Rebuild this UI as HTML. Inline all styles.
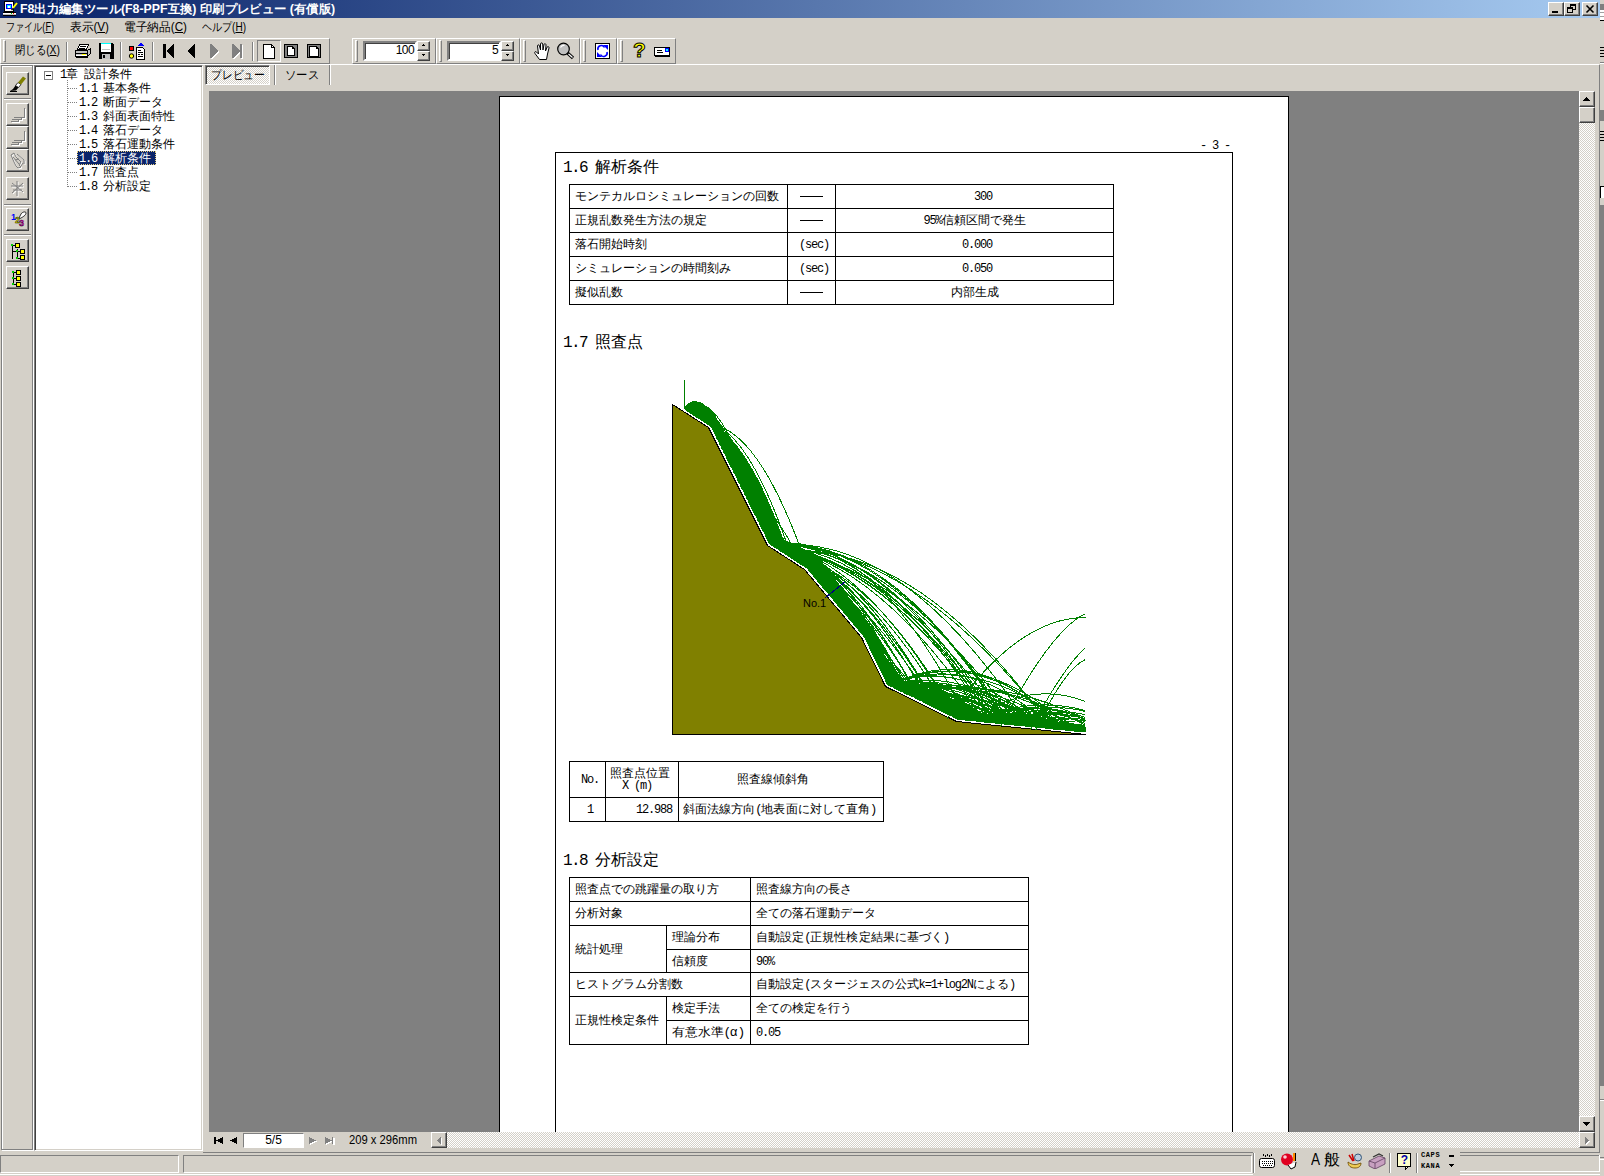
<!DOCTYPE html>
<html lang="ja">
<head>
<meta charset="utf-8">
<title>F8出力編集ツール 印刷プレビュー</title>
<style>
*{box-sizing:border-box;margin:0;padding:0}
html,body{width:1604px;height:1176px;overflow:hidden;background:#D4D0C8}
body{position:relative;font-family:"Liberation Sans",sans-serif;font-size:12px;color:#000;line-height:1}
.a{position:absolute;white-space:nowrap}
.f{transform-origin:0 0}
.ui{font-family:"Liberation Sans",sans-serif;font-size:12px;line-height:13px}
.tr{font-family:"Liberation Mono",monospace;font-size:12px;line-height:14px}
.doc{font-family:"Liberation Mono",monospace;font-size:12px;line-height:12px;color:#000}
.h{font-family:"Liberation Mono",monospace;font-size:16px;line-height:16px}
.q{letter-spacing:-1.2px}
.h .q{letter-spacing:-1.6px}
#title{left:0;top:0;width:1600px;height:18px;background:linear-gradient(90deg,#0A246A 0%,#0A246A 2%,#A6CAF0 100%)}
#title .t{color:#fff;font-weight:bold;font-size:12px;line-height:14px}
.cb{width:16px;height:14px;top:2px;background:#D4D0C8;border:1px solid;border-color:#fff #404040 #404040 #fff;box-shadow:inset -1px -1px 0 #808080}
.raised{border:1px solid;border-color:#fff #808080 #808080 #fff}
.sunken{border:1px solid;border-color:#808080 #fff #fff #808080}
.btn{background:#D4D0C8;border:1px solid;border-color:#fff #404040 #404040 #fff;box-shadow:inset -1px -1px 0 #808080}
.sep{width:2px;border-left:1px solid #808080;border-right:1px solid #fff}
.hsep{height:2px;border-top:1px solid #808080;border-bottom:1px solid #fff}
.grip{width:3px;border:1px solid;border-color:#fff #808080 #808080 #fff}
.dith{background-color:#EAE8E4;background-image:conic-gradient(#fff 25%,#D4D0C8 0 50%,#fff 0 75%,#D4D0C8 0);background-size:2px 2px}
#page{left:499px;top:96px;width:790px;height:1036px;background:#fff;border:1px solid #000;border-bottom:none;overflow:hidden}
.ln{background:#000}
</style>
</head>
<body>
<div id="title" class="a">
<svg class="a" style="left:3px;top:1px" width="15" height="16" viewBox="0 0 15 16" shape-rendering="crispEdges">
<rect x="1.500" y="0.500" width="9" height="10" fill="#fff" stroke="#000"/><rect x="3.500" y="3.500" width="5" height="4" fill="#0ff" stroke="#00f"/><rect x="5" y="5" width="2" height="2" fill="#fff"/>
<path d="M10 7 L14 2" stroke="#ff0" stroke-width="2" shape-rendering="auto"/><path d="M8.500 9 L10 7.500" stroke="#000" stroke-width="1.500" shape-rendering="auto"/>
<rect x="0" y="12" width="13" height="1" fill="#fff"/><rect x="0" y="13" width="13" height="1" fill="#c0c0c0"/><rect x="0" y="14" width="13" height="1" fill="#000"/><rect x="0" y="11" width="13" height="1" fill="#000"/><rect x="8" y="12" width="1" height="1" fill="#0c0"/><rect x="10" y="12" width="1" height="1" fill="#f00"/>
</svg>
<div id="t1" class="a f t" style="left:20px;top:2px;transform:scaleX(1.0294);">F8出力編集ツール(F8-PPF互換) 印刷プレビュー (有償版)</div>
<div class="a cb" style="left:1548px">
<svg class="a" style="left:0;top:0" width="14" height="12" viewBox="0 0 14 12" shape-rendering="crispEdges"><rect x="3" y="8" width="6" height="2" fill="#000"/></svg></div>
<div class="a cb" style="left:1564px">
<svg class="a" style="left:0;top:0" width="14" height="12" viewBox="0 0 14 12" shape-rendering="crispEdges"><path d="M5 1h6v6h-3v-1h2v-3h-4v1h-1zM2 4h6v6h-6zM3 6v3h4v-3z" fill="#000" fill-rule="evenodd"/></svg></div>
<div class="a cb" style="left:1582px">
<svg class="a" style="left:0;top:0" width="14" height="12" viewBox="0 0 14 12"><path d="M3.500 2.500l7 7M10.500 2.500l-7 7" stroke="#000" stroke-width="1.600"/></svg></div></div>
<div id="t2" class="a f ui" style="left:6px;top:21px;transform:scaleX(0.7578);">ファイル(<u>F</u>)</div>
<div id="t3" class="a f ui" style="left:70px;top:21px;transform:scaleX(0.9746);">表示(<u>V</u>)</div>
<div id="t4" class="a f ui" style="left:124px;top:21px;transform:scaleX(0.9741);">電子納品(<u>C</u>)</div>
<div id="t5" class="a f ui" style="left:202px;top:21px;transform:scaleX(0.8354);">ヘルプ(<u>H</u>)</div>
<div class="a" style="left:0;top:64px;width:1599px;height:1px;background:#fff"></div>
<div class="a raised" style="left:0px;top:38px;width:330px;height:26px"></div>
<div class="a raised" style="left:352px;top:38px;width:84px;height:26px"></div>
<div class="a raised" style="left:436px;top:38px;width:84px;height:26px"></div>
<div class="a raised" style="left:520px;top:38px;width:60px;height:26px"></div>
<div class="a raised" style="left:580px;top:38px;width:37px;height:26px"></div>
<div class="a raised" style="left:617px;top:38px;width:59px;height:26px"></div>
<div class="a grip" style="left:3px;top:40px;height:22px"></div>
<div class="a grip" style="left:355px;top:40px;height:22px"></div>
<div class="a grip" style="left:439px;top:40px;height:22px"></div>
<div class="a grip" style="left:523px;top:40px;height:22px"></div>
<div class="a grip" style="left:583px;top:40px;height:22px"></div>
<div class="a grip" style="left:620px;top:40px;height:22px"></div>
<div class="a sep" style="left:66px;top:42px;height:19px"></div>
<div class="a sep" style="left:120px;top:42px;height:19px"></div>
<div class="a sep" style="left:152px;top:42px;height:19px"></div>
<div class="a sep" style="left:252px;top:42px;height:19px"></div>
<div id="t6" class="a f ui" style="left:15px;top:44px;transform:scaleX(0.8651);">閉じる(<u>X</u>)</div>
<svg class="a" style="left:74px;top:43px" width="18" height="16" viewBox="0 0 18 16" shape-rendering="crispEdges">
<path d="M5.500 1.500h9l-2 5h-9z" fill="#fff" stroke="#000"/><path d="M6 3.500h6M5 5.500h6" stroke="#000"/>
<path d="M1.500 7.500h12l3 -2v5l-3 3h-12z" fill="#c0c0c0" stroke="#000"/><path d="M1.500 10.500h12M13.500 7.500v6" stroke="#000"/><rect x="8" y="11" width="4" height="1" fill="#ff0"/><path d="M2 14.500h12" stroke="#000" stroke-width="1"/><path d="M2 12.500h11" stroke="#fff"/>
</svg>
<svg class="a" style="left:99px;top:43px" width="16" height="16" viewBox="0 0 16 16" shape-rendering="crispEdges">
<rect x="0" y="0" width="15" height="16" fill="#000"/><rect x="2" y="1" width="10" height="8" fill="#fff"/><rect x="2" y="0" width="10" height="1" fill="#0ff"/><rect x="3" y="6" width="8" height="1" fill="#c0c0c0"/><rect x="3" y="11" width="8" height="5" fill="#c0c0c0"/><rect x="4" y="12" width="2" height="3" fill="#000"/><rect x="14" y="0" width="1" height="1" fill="#D4D0C8"/>
</svg>
<svg class="a" style="left:128px;top:42px" width="18" height="18" viewBox="0 0 18 18" shape-rendering="crispEdges">
<rect x="1.500" y="4.500" width="4" height="4" fill="#f00" stroke="#000"/><circle cx="3.500" cy="14" r="2.200" fill="#ff0" stroke="#000" shape-rendering="auto"/>
<path d="M11 3l2-2 2 2z" fill="#00f" stroke="#00f"/>
<path d="M8.500 5.500h6l2 2v9.500h-8z" fill="#fff" stroke="#000"/><path d="M10 8.500h3M10 10.500h5M10 12.500h2M13 12.500h2M10 14.500h5" stroke="#000"/>
</svg>
<svg class="a" style="left:162px;top:43px" width="84" height="16" viewBox="0 0 84 16" shape-rendering="crispEdges">
<rect x="1" y="1" width="3" height="14" fill="#000"/><path d="M12 1v14h-1l-7-7 7-7z" fill="#000"/>
<path d="M33 1v14h-1l-7-7 7-7z" fill="#000"/>
<path d="M49 2v14h1l7-7-7-7z" fill="#fff"/><path d="M48 1v14h1l7-7-7-7z" fill="#808080"/>
<path d="M71 2v14h1l7-7-7-7z" fill="#fff"/><rect x="79" y="2" width="2" height="14" fill="#fff"/><path d="M70 1v14h1l7-7-7-7z" fill="#808080"/><rect x="78" y="1" width="2" height="14" fill="#808080"/>
</svg>
<div class="a sunken" style="left:257px;top:40px;width:24px;height:22px"></div>
<svg class="a" style="left:263px;top:44px" width="60" height="15" viewBox="0 0 60 15" shape-rendering="crispEdges">
<path d="M0.500 0.500h8l3 3v10.500h-11z" fill="#fff" stroke="#000"/><path d="M8.500 0.500v3h3" fill="none" stroke="#000"/>
<rect x="21.500" y="0.500" width="13" height="13" fill="#808080" stroke="#000"/><path d="M24.500 2.500h5l2 2v7h-7z" fill="#fff" stroke="#000"/><path d="M29.500 2.500v2h2" fill="none" stroke="#000"/>
<rect x="44.500" y="0.500" width="13" height="13" fill="#808080" stroke="#000"/><path d="M46.500 2.500h7l2 2v8h-9z" fill="#fff" stroke="#000"/><path d="M53.500 2.500v2h2" fill="none" stroke="#000"/>
</svg>
<div class="a" style="left:363px;top:41px;width:54px;height:20px;background:#fff;border:2px solid;border-color:#808080 #fff #fff #808080;box-shadow:inset 1px 1px 0 #404040"></div>
<div class="a" style="left:363px;top:44px;width:51px;text-align:right;font-size:12px;line-height:13px;letter-spacing:-.6px">100</div>
<div class="a btn" style="left:417px;top:41px;width:13px;height:10px"></div>
<div class="a btn" style="left:417px;top:51px;width:13px;height:10px"></div>
<svg class="a" style="left:420px;top:44px" width="7" height="14" viewBox="0 0 7 14" shape-rendering="crispEdges"><path d="M3 0h1v1h1v1h-3v-1h1zM2 10h3v1h-1v1h-1v-1h-1z" fill="#000"/></svg>
<div class="a" style="left:447px;top:41px;width:54px;height:20px;background:#fff;border:2px solid;border-color:#808080 #fff #fff #808080;box-shadow:inset 1px 1px 0 #404040"></div>
<div class="a" style="left:447px;top:44px;width:51px;text-align:right;font-size:12px;line-height:13px;letter-spacing:-.6px">5</div>
<div class="a btn" style="left:501px;top:41px;width:13px;height:10px"></div>
<div class="a btn" style="left:501px;top:51px;width:13px;height:10px"></div>
<svg class="a" style="left:504px;top:44px" width="7" height="14" viewBox="0 0 7 14" shape-rendering="crispEdges"><path d="M3 0h1v1h1v1h-3v-1h1zM2 10h3v1h-1v1h-1v-1h-1z" fill="#000"/></svg>
<svg class="a" style="left:533px;top:42px" width="19" height="18" viewBox="0 0 19 18">
<path d="M6.500 17.500 L2 11.500 C1 10 2.500 9 3.500 10 L5.500 12 L4.500 4 C4.500 2.500 6.300 2.500 6.500 4 L7.500 8 L7.500 2 C7.700 0.500 9.500 0.500 9.700 2 L10 8 L11 2.500 C11.300 1.200 13 1.500 13 3 L12.500 9 L14.200 5 C14.800 4 16.200 4.500 16 6 L14.500 12 L13.500 17.500 Z" fill="#fff" stroke="#000" stroke-width="1"/>
</svg>
<svg class="a" style="left:556px;top:42px" width="20" height="18" viewBox="0 0 20 18">
<circle cx="7.500" cy="7" r="5.800" fill="#c0c0c0" stroke="#000" stroke-width="1.200"/><path d="M4.500 5.500a4 4 0 0 1 4-2" stroke="#fff" fill="none" stroke-width="1.200"/><path d="M11.500 11 L17 16" stroke="#000" stroke-width="3.200"/><path d="M12.500 12 L16.500 15.500" stroke="#fff" stroke-width="1.200"/>
</svg>
<svg class="a" style="left:595px;top:43px" width="15" height="16" viewBox="0 0 15 16">
<rect x="0.500" y="0.500" width="14" height="15" fill="#fff" stroke="#000" shape-rendering="crispEdges"/><path d="M8 2h5v5z" fill="#00f"/><path d="M2 9v5h5z" fill="#00f"/><path d="M3 7a3.500 3.500 0 0 1 6.500-2.500" stroke="#00f" fill="none" stroke-width="1.600"/><path d="M12 9a3.500 3.500 0 0 1-6.500 2.500" stroke="#00f" fill="none" stroke-width="1.600"/>
</svg>
<div class="a" style="left:632px;top:38px;width:15px;font:bold 21px/24px 'Liberation Sans',sans-serif;color:#ff0;-webkit-text-stroke:1px #000;text-align:center">?</div>
<svg class="a" style="left:654px;top:47px" width="17" height="10" viewBox="0 0 17 10" shape-rendering="crispEdges">
<rect x="0.500" y="0.500" width="15" height="8" fill="#fff" stroke="#000"/><rect x="1" y="9" width="15" height="1" fill="#000"/><path d="M3 3.500h5M3 5.500h6" stroke="#000"/><rect x="11.500" y="1.500" width="3" height="3" fill="#0ff" stroke="#00f"/>
</svg>
<div class="a" style="left:2px;top:66px;width:32px;height:1085px;border:1px solid #fff"></div>
<div class="a" style="left:1px;top:65px;width:32px;height:1085px;border:1px solid #808080"></div>
<div class="a btn" style="left:6px;top:72px;width:23px;height:23px"></div>
<div class="a hsep" style="left:4px;top:98px;width:27px"></div>
<div class="a btn" style="left:6px;top:103px;width:23px;height:23px"></div>
<div class="a btn" style="left:6px;top:126px;width:23px;height:23px"></div>
<div class="a btn" style="left:6px;top:149px;width:23px;height:23px"></div>
<div class="a btn" style="left:6px;top:177px;width:23px;height:23px"></div>
<div class="a hsep" style="left:4px;top:204px;width:27px"></div>
<div class="a btn" style="left:6px;top:208px;width:23px;height:23px"></div>
<div class="a hsep" style="left:4px;top:234px;width:27px"></div>
<div class="a btn" style="left:6px;top:239px;width:23px;height:23px"></div>
<div class="a btn" style="left:6px;top:266px;width:23px;height:23px"></div>
<svg class="a" style="left:9px;top:75px" width="18" height="17" viewBox="0 0 18 17">
<path d="M1 16 L4 14 L6.500 10.500 L9.500 12.500 L7 15.500 Z" fill="#000"/><path d="M6.500 10.500 L9 7.500 L12 9.500 L9.500 12.500Z" fill="#fff" stroke="#000" stroke-width=".8"/><path d="M9 7.500 L14 1.500 L17 3.500 L12 9.500Z" fill="#808000"/><path d="M1 16.500h7" stroke="#000"/>
</svg>
<svg class="a" style="left:9px;top:107px" width="18" height="17" viewBox="0 0 18 17" shape-rendering="crispEdges"><path d="M15.500 1v9h-3.500v2h-3v2h-7" fill="none" stroke="#fff" transform="translate(1,1)"/><path d="M15.500 1v9h-3.500v2h-3v2h-7M12 10.500h-7M9 12.500h-6" fill="none" stroke="#808080"/></svg>
<svg class="a" style="left:9px;top:130px" width="18" height="17" viewBox="0 0 18 17" shape-rendering="crispEdges"><path d="M15.500 1v9h-3.500v2h-3v2h-7" fill="none" stroke="#fff" transform="translate(1,1)"/><path d="M15.500 1v9h-3.500v2h-3v2h-7M12 10.500h-7M9 12.500h-6" fill="none" stroke="#808080"/></svg>
<svg class="a" style="left:9px;top:152px" width="18" height="18" viewBox="0 0 18 18"><g fill="none" stroke="#fff" transform="translate(1,1)"><path d="M2 3l3-2 2 4 5 5-2 3 2 2-3 1-2-2-2-4zM8 2l7 6v4"/></g><g fill="none" stroke="#808080"><path d="M2 3l3-2 2 4 5 5-2 3 2 2-3 1-2-2-2-4zM8 2l7 6v4M4 5l6 7M6 8l4-1M12 14l2-3"/></g></svg>
<svg class="a" style="left:9px;top:180px" width="18" height="18" viewBox="0 0 18 18"><g fill="none" stroke="#fff" transform="translate(1,1)"><path d="M8 1v15M2 6h12M3 3l11 9M14 3l-11 10M4 10h9"/></g><g fill="none" stroke="#808080"><path d="M8 1v15M2 6h12M3 3l11 9M14 3l-11 10M4 10h9"/></g></svg>
<div class="a" style="left:11px;top:212px;font:bold 9px/10px 'Liberation Sans',sans-serif;color:#00f">1</div>
<div class="a" style="left:15px;top:215px;font:bold 9px/10px 'Liberation Sans',sans-serif;color:#ff0;-webkit-text-stroke:.4px #000">2</div>
<div class="a" style="left:19px;top:218px;font:bold 9px/10px 'Liberation Sans',sans-serif;color:#f0c;-webkit-text-stroke:.4px #000">3</div>
<svg class="a" style="left:18px;top:211px" width="9" height="8" viewBox="0 0 9 8"><path d="M1 7 L3 3 C4 1 8 0 8 2 C8 4 5 6 2 7.500Z" fill="#fff" stroke="#000" stroke-width=".8"/></svg>
<svg class="a" style="left:10px;top:243px" width="16" height="17" viewBox="0 0 16 17" shape-rendering="crispEdges">
<path d="M2.500 2v14M2.500 2.500h3M7.500 6v10M7.500 8.500h3M7.500 15.500h3M2.500 8.500h5" stroke="#000" fill="none"/><rect x="5.500" y="0.500" width="4" height="4" fill="#ff0" stroke="#000"/><rect x="10.500" y="6.500" width="4" height="4" fill="#ff0" stroke="#000"/><rect x="10.500" y="12.500" width="4" height="4" fill="#ff0" stroke="#000"/><rect x="1" y="1" width="2" height="2" fill="#0c0"/><rect x="6" y="7" width="2" height="2" fill="#0c0"/><rect x="6" y="14" width="2" height="2" fill="#0c0"/>
</svg>
<svg class="a" style="left:10px;top:269px" width="16" height="18" viewBox="0 0 16 18" shape-rendering="crispEdges">
<path d="M3.500 2v14M3.500 3.500h3M3.500 9.500h3M3.500 15.500h3" stroke="#000" fill="none"/><rect x="6.500" y="1.500" width="4" height="4" fill="#ff0" stroke="#000"/><rect x="6.500" y="7.500" width="4" height="4" fill="#ff0" stroke="#000"/><rect x="6.500" y="13.500" width="4" height="4" fill="#ff0" stroke="#000"/><rect x="2" y="2" width="2" height="2" fill="#0c0"/><rect x="2" y="8" width="2" height="2" fill="#0c0"/><rect x="2" y="14" width="2" height="2" fill="#0c0"/>
</svg>
<div class="a" style="left:34px;top:65px;width:169px;height:1086px;background:#fff;border:1px solid;border-color:#808080 #fff #fff #808080;box-shadow:inset 1px 1px 0 #404040,inset -1px -1px 0 #D4D0C8"></div>
<svg class="a" style="left:44px;top:71px" width="9" height="9" viewBox="0 0 9 9" shape-rendering="crispEdges"><rect x="0.500" y="0.500" width="8" height="8" fill="#fff" stroke="#808080"/><rect x="2" y="4" width="5" height="1" fill="#000"/></svg>
<div class="a" style="left:67px;top:80px;width:1px;height:107px;background:repeating-linear-gradient(180deg,#808080 0 1px,transparent 1px 2px)"></div>
<div class="a tr" style="left:60px;top:68px;"><span class="q">1</span>章<span class="q"> </span>設計条件</div>
<div class="a" style="left:68px;top:88px;width:9px;height:1px;background:repeating-linear-gradient(90deg,#808080 0 1px,transparent 1px 2px)"></div>
<div class="a tr" style="left:79px;top:82px;"><span class="q">1.1 </span>基本条件</div>
<div class="a" style="left:68px;top:102px;width:9px;height:1px;background:repeating-linear-gradient(90deg,#808080 0 1px,transparent 1px 2px)"></div>
<div class="a tr" style="left:79px;top:96px;"><span class="q">1.2 </span>断面データ</div>
<div class="a" style="left:68px;top:116px;width:9px;height:1px;background:repeating-linear-gradient(90deg,#808080 0 1px,transparent 1px 2px)"></div>
<div class="a tr" style="left:79px;top:110px;"><span class="q">1.3 </span>斜面表面特性</div>
<div class="a" style="left:68px;top:130px;width:9px;height:1px;background:repeating-linear-gradient(90deg,#808080 0 1px,transparent 1px 2px)"></div>
<div class="a tr" style="left:79px;top:124px;"><span class="q">1.4 </span>落石データ</div>
<div class="a" style="left:68px;top:144px;width:9px;height:1px;background:repeating-linear-gradient(90deg,#808080 0 1px,transparent 1px 2px)"></div>
<div class="a tr" style="left:79px;top:138px;"><span class="q">1.5 </span>落石運動条件</div>
<div class="a" style="left:68px;top:158px;width:9px;height:1px;background:repeating-linear-gradient(90deg,#808080 0 1px,transparent 1px 2px)"></div>
<div class="a" style="left:77px;top:151px;width:79px;height:14px;background:#0A246A;outline:1px dotted #e8d080;outline-offset:-1px"></div>
<div class="a tr" style="left:79px;top:152px;color:#fff;"><span class="q">1.6 </span>解析条件</div>
<div class="a" style="left:68px;top:172px;width:9px;height:1px;background:repeating-linear-gradient(90deg,#808080 0 1px,transparent 1px 2px)"></div>
<div class="a tr" style="left:79px;top:166px;"><span class="q">1.7 </span>照査点</div>
<div class="a" style="left:68px;top:186px;width:9px;height:1px;background:repeating-linear-gradient(90deg,#808080 0 1px,transparent 1px 2px)"></div>
<div class="a tr" style="left:79px;top:180px;"><span class="q">1.8 </span>分析設定</div>
<div class="a" style="left:1599px;top:65px;width:1px;height:1088px;background:#808080"></div>
<div class="a" style="left:203px;top:1152px;width:1397px;height:1px;background:#808080"></div>
<div class="a dith sunken" style="left:205px;top:65px;width:65px;height:20px;box-shadow:inset 1px 1px 0 #404040"></div>
<div id="t16" class="a f ui" style="left:211px;top:69px;transform:scaleX(0.9000);">プレビュー</div>
<div class="a sep" style="left:274px;top:65px;height:20px"></div>
<div id="t17" class="a f ui" style="left:285px;top:69px;transform:scaleX(0.9444);">ソース</div>
<div class="a sep" style="left:329px;top:65px;height:20px"></div>
<div class="a" style="left:209px;top:91px;width:1370px;height:1041px;background:#808080"></div>
<div class="a dith" style="left:1579px;top:91px;width:16px;height:1041px"></div>
<div class="a btn" style="left:1579px;top:91px;width:16px;height:16px"></div>
<svg class="a" style="left:1583px;top:97px" width="7" height="4" shape-rendering="crispEdges"><path d="M3 0h1v1h1v1h1v1h1v1h-7v-1h1v-1h1v-1h1z" fill="#000"/></svg>
<div class="a btn" style="left:1579px;top:107px;width:16px;height:16px"></div>
<div class="a btn" style="left:1579px;top:1116px;width:16px;height:16px"></div>
<svg class="a" style="left:1583px;top:1122px" width="7" height="4" shape-rendering="crispEdges"><path d="M0 0h7v1h-1v1h-1v1h-1v1h-1v-1h-1v-1h-1v-1h-1z" fill="#000"/></svg>
<div class="a dith" style="left:431px;top:1132px;width:1164px;height:16px"></div>
<div class="a btn" style="left:431px;top:1132px;width:16px;height:16px"></div>
<svg class="a" style="left:437px;top:1137px" width="5" height="8" shape-rendering="crispEdges"><path d="M3 0h1v7h-1v-1h-1v-1h-1v-1h-1v-1h1v-1h1v-1h1z" fill="#fff" transform="translate(1,1)"/><path d="M3 0h1v7h-1v-1h-1v-1h-1v-1h-1v-1h1v-1h1v-1h1z" fill="#808080"/></svg>
<div class="a btn" style="left:1579px;top:1132px;width:16px;height:16px"></div>
<svg class="a" style="left:1585px;top:1137px" width="5" height="8" shape-rendering="crispEdges"><path d="M0 0h1v1h1v1h1v1h1v1h-1v1h-1v1h-1v1h-1z" fill="#fff" transform="translate(1,1)"/><path d="M0 0h1v1h1v1h1v1h1v1h-1v1h-1v1h-1v1h-1z" fill="#808080"/></svg>
<svg class="a" style="left:213px;top:1136px" width="125" height="10" viewBox="213 1136 125 10" shape-rendering="crispEdges">
<rect x="214" y="1137" width="2" height="7" fill="#000"/><path d="M223 1137v7l-7-3.500z" fill="#000"/><path d="M237 1137v7l-7-3.500z" fill="#000"/>
<path d="M310 1138v7l7-3.500z" fill="#fff"/><path d="M309 1137v7l7-3.500z" fill="#808080"/>
<path d="M326 1138v7l7-3.500z" fill="#fff"/><rect x="333" y="1138" width="2" height="7" fill="#fff"/><path d="M325 1137v7l7-3.500z" fill="#808080"/><rect x="332" y="1137" width="1" height="7" fill="#808080"/>
</svg>
<div class="a" style="left:243px;top:1133px;width:61px;height:15px;background:#fff;border:1px solid;border-color:#808080 #fff #fff #808080"></div>
<div class="a" style="left:243px;top:1134px;width:61px;text-align:center;font-size:12px;line-height:12px">5/5</div>
<div id="t18" class="a f ui" style="left:349px;top:1134px;font-size:12px;line-height:12px;transform:scaleX(0.9353);">209 x 296mm</div>
<div id="page" class="a">
<div class="a ln" style="left:55px;top:55px;width:678px;height:1px"></div>
<div class="a ln" style="left:55px;top:55px;width:1px;height:1000px"></div>
<div class="a ln" style="left:732px;top:55px;width:1px;height:1000px"></div>
<div class="a doc" style="left:700px;top:43px;"><span class="q">- 3 -</span></div>
<div class="a h" style="left:63px;top:63px;"><span class="q">1.6 </span>解析条件</div>
<div class="a ln" style="left:69px;top:87px;width:545px;height:1px"></div>
<div class="a ln" style="left:69px;top:111px;width:545px;height:1px"></div>
<div class="a ln" style="left:69px;top:135px;width:545px;height:1px"></div>
<div class="a ln" style="left:69px;top:159px;width:545px;height:1px"></div>
<div class="a ln" style="left:69px;top:183px;width:545px;height:1px"></div>
<div class="a ln" style="left:69px;top:207px;width:545px;height:1px"></div>
<div class="a ln" style="left:69px;top:87px;width:1px;height:121px"></div>
<div class="a ln" style="left:287px;top:87px;width:1px;height:121px"></div>
<div class="a ln" style="left:335px;top:87px;width:1px;height:121px"></div>
<div class="a ln" style="left:613px;top:87px;width:1px;height:121px"></div>
<div class="a doc" style="left:75px;top:94px;">モンテカルロシミュレーションの回数</div>
<div class="a ln" style="left:300px;top:99px;width:23px;height:1px"></div>
<div class="a doc" style="left:288px;top:93px;width:47px;text-align:center;color:transparent">――</div>
<div class="a doc" style="left:336px;top:94px;width:156px;text-align:right"><span class="q">300</span></div>
<div class="a doc" style="left:75px;top:118px;">正規乱数発生方法の規定</div>
<div class="a ln" style="left:300px;top:123px;width:23px;height:1px"></div>
<div class="a doc" style="left:288px;top:117px;width:47px;text-align:center;color:transparent">――</div>
<div class="a doc" style="left:336px;top:118px;width:277px;text-align:center"><span class="q">95%</span>信頼区間で発生</div>
<div class="a doc" style="left:75px;top:142px;">落石開始時刻</div>
<div class="a doc" style="left:299px;top:142px;"><span class="q">(sec)</span></div>
<div class="a doc" style="left:336px;top:142px;width:156px;text-align:right"><span class="q">0.000</span></div>
<div class="a doc" style="left:75px;top:166px;">シミュレーションの時間刻み</div>
<div class="a doc" style="left:299px;top:166px;"><span class="q">(sec)</span></div>
<div class="a doc" style="left:336px;top:166px;width:156px;text-align:right"><span class="q">0.050</span></div>
<div class="a doc" style="left:75px;top:190px;">擬似乱数</div>
<div class="a ln" style="left:300px;top:195px;width:23px;height:1px"></div>
<div class="a doc" style="left:288px;top:189px;width:47px;text-align:center;color:transparent">――</div>
<div class="a doc" style="left:336px;top:190px;width:277px;text-align:center">内部生成</div>
<div class="a h" style="left:63px;top:238px;"><span class="q">1.7 </span>照査点</div>
<svg class="a" style="left:160px;top:278px" width="430" height="365" viewBox="660 375 430 365" shape-rendering="crispEdges"><path d="M672.5 404.5 L708.5 427.5 L767.5 545.5 L804.5 569.5 L861.5 637.5 L885.5 686.5 L956.5 721.5 L1085.5 734.5 L1085.5 734.5 L672.5 734.5Z" fill="#808000" stroke="#000" stroke-width="1" stroke-linejoin="bevel"/><path d="M684.5 380V408" stroke="#008000" fill="none"/><path d="M684.5 408.5 L710.5 425.7 L769.5 543.7 L806.2 567.5 L863.7 636.1 L887.4 684.6 L957.2 719 L1085.8 731.9 L1086.1 728.5 L959 712.7 L894.5 677.5 L873.3 629.8 L817.2 555.1 L777.5 536.5 L716.2 420.6 L716 414 L709 408 L702 404 L696 402.5 L690 403 L686 405.5Z" fill="#008000"/><path transform="translate(.5,.5)" d="M684 408q4-3 7 5 1 0 2 1l1 1 1 0 1 1 1 0 0 1 1 0 0 1 1 0 1 0 0 1 1 0 1 1 1 0 0 1 1 0 1 0 0 1 1 0 0 1 1 0 1 0 0 1 1 0 1 1 1 0q0 1 1 3l1 2 0 1 1 0 0 1 1 2 1 1 0 1 1 1 0 1 1 1 0 1 1 1 0 2 1 1 1 1 0 1 1 1 0 1 1 1 0 1 1 1 0 1 1 1 0 1 1 1 0 1 1 1 0 1 1 1 0 1 1 1 0 2 1 1 0 1 1 1 1 1 0 1 1 1 0 1 1 1 0 1 1 1 0 1q1 1 1 2l1 2 1 2 0 1 1 1 1 2 1 1 0 2 1 1 0 1 1 1 1 1 0 1 1 1 0 1 1 1 0 2 1 1 1 1 0 1 1 2 0 1 1 1 1 1 1 2 0 1 1 1 0 2 1 1 1 1 0 1 1 1 0 2 1 1 0 1 1 1 0 1 1 1 0 1 1 1 1 1 0 1 1 1 0 1 1 1 0 1 1 2 0 1 1 1 1 2 0 1 1 1 1 1q0 1 1 3l1 1M684 408q5 1 9 6 2 1 3 2l1 1 1 0 1 1 1 0q2 1 5 3 1 1 3 2l0 1q25 13 49 94 7 12 14 26 92 10 184 174 65-9 130 11M684 408q3 0 6 4 2 1 4 3 1 0 3 1l1 1 1 1 1 0 1 1 2 1 0 1 2 1 1 0q2 1 4 3 12 7 24 47 18 24 37 72 113-7 227 179 43-15 87-5M684 408q6-7 11 7 6 2 12 8 23 10 46 86 9 16 19 36 106 14 212 176M684 408q5-4 10 7 5 1 9 5l1 1 1 0 0 1 1 1 1 0 1 1 1 0q21 12 43 83 7 14 15 30l2 6 1 0q66 24 132 148 31 8 61 28 32-3 63 7 30-6 59 1M684 408l1 1 1 0 0 1 1 0 1 1 1 0 0 1 1 0 1 1 1 0 0 1 1 0 1 0 0 1 1 0 0 1 1 0 1 0 0 1 1 0 1 1 1 0 0 1 1 0 1 0 0 1 1 0 0 1 1 0 1 0 0 1 1 0 0 1 1 0 1 0 0 1 1 0 0 1 1 0 1 0q1 1 2 4l0 2 1 1 1 1 0 2 1 1 0 1 1 1 1 1 0 2 1 1q1 1 2 3l0 1 1 1q1 2 2 6 2 2 3 5 2 3 4 8l1 2q2 3 4 7 5 7 11 23 5 8 10 21l2 3 1 3 2 2q1 2 2 4l1 2q1 2 2 6 2 2 3 5l1 0 1 1 1 0 0 1 1 0 1 0 0 1 1 0 0 1 1 0 1 0 0 1 1 0 0 1 1 0 1 0 0 1 1 0 0 1 1 0 1 0 0 1M684 408q5 0 10 7 3 1 6 4l2 1 1 0 1 1 1 0 0 1 1 1 1 0 2 1 1 1 1 0q3 2 6 12l0 2q1 1 2 3 3 4 5 10l1 2 1 2 1 2 1 2 1 2 1 1q1 2 1 4l1 1q4 5 8 16 5 7 9 18 8 11 16 32 4 5 7 11 7 0 14 9 2 1 4 3l1 0 1 1 1 0 0 1 1 0 1 0 0 1 1 0 0 1 1 0 1 0 0 1 1 0 0 1 1 0 1 0 0 1 1 0 0 1 1 0 1 0 0 1 1 0 0 1 1 0 1 0 0 1 1 1 1 1 1 1 0 1 1 0 0 1 1 0 0 1 1 0 0 1 1 1 1 1 0 1 1 0 0 1 1 0 0 1 1 0 0 1 1 2 1 0 1 1 0 1 1 0 0 1 1 1 1 1 1 2 1 0 0 1q2 1 3 3l1 1 0 1 1 0 0 1 1 0 0 1 1 1 1 1 1 1 1 1 0 1 1 1 1 0 0 1 1 1 1 1 1 2 1 0 0 1 1 0 0 1 1 0 0 1 0 1 1 0 1 1 0 1 1 0 0 1 1 1 1 0 0 1 1 1 1 1 1 1 0 1 1 0 0 1 1 1 1 1 0 1 1 1 1 0 0 1 1 1q1 0 2 2l1 2 1 1 1 1 1 1q2 2 4 7l0 2q1 1 2 3l1 2 0 1 1 1 1 2 1 2 1 2 0 1M684 408q2 1 4 3l1 0 0 1 1 0 1 1 1 0 1 1 1 0 0 1 1 0 0 1 1 0 1 0 0 1 1 0 1 1 1 0 0 1 1 0 1 1 1 0 0 1 1 0 1 0 0 1 1 0 0 1 1 0 1 0 0 1 1 0 1 1 1 0q1 1 3 7 1 1 1 2l1 2q1 2 2 4l1 2 1 1q2 4 5 11l1 2 1 2q1 1 1 3l1 2 1 1 1 2q1 1 2 3l1 2q0 1 1 3 2 4 4 8 2 3 4 7 1 2 2 4l1 3 1 2 1 2 1 2q1 2 2 5l1 2 1 2q2 2 3 5 1 2 2 4l1 2 1 2 1 2q2 3 3 6 3 5 6 12 3 0 6 3 4 1 8 6 2 0 4 2l1 1 1 0 0 1 1 0 1 1 1 0 0 1 1 0 1 0 0 1 1 0 0 1 1 0 1 0 0 1 1 0 0 1 1 0 1 0 0 1 1 0 0 1 1 0 1 0 0 1 1 0 0 1 1 0 1 0 0 1 1 0 0 1 1 1 0 1 1 0 0 1 1 0 0 1 1 0 0 1 1 1M684 408q15-13 29 22 4 6 7 14l2 3 1 3 1 3 2 2q2 4 4 9l1 3 2 2 0 2q9 8 18 34 1 3 2 5l2 3 1 3 1 2 2 3 1 2 1 3 1 2q5 6 10 17 6 1 12 8l1 0 1 1 1 1 1 0 1 1 1 0 0 1 1 0 1 1 1 0 0 1 1 0 1 0 0 1 1 0 0 1 1 0 1 0 0 1 1 0 0 1 1 0 1 0 0 1 1 0 0 1 1 0 1 0 0 1 1 0 0 1 1 0 1 0 0 1 1 1 0 1 1 0 1 1 0 1 1 0 0 1 1 0 0 1 1 1 1 1 0 1 1 0 0 1 1 0 0 1 1 0 0 1 1 1 1 1q2 2 3 4l1 1 1 1 1 1 1 1 1 1 0 1 1 1q1 1 2 2 3 2 5 7l1 1 1 1 1 0 0 1 1 1q1 1 1 2l1 1 1 1 1 1 1 0 0 1 1 1 1 1 0 1 1 0 0 1q1 1 2 2l1 1 1 1 1 2 2 2q1 1 3 3l0 1q1 1 3 2l0 1q2 2 3 4 7 6 14 26l1 3 1 3 2 3q4 6 8 15 37 7 74 34 31-4 61 6 12 0 23 3 9 0 18 1 10-2 20-2M684 408q5-1 9 6 2 1 4 3l2 1 1 1 1 0 1 1 1 0 0 1 1 0 1 1 2 1 1 0 1 1 1 1 1 0q8 5 16 32 3 7 7 15 5 8 9 19 3 4 5 9 5 8 9 18l2 4 2 4q3 5 6 11 1 3 3 7 14 0 28 18 47 12 93 124 23 7 46 22 14 4 28 11 23-1 46 5 18-1 37 4 14-1 29 3 4-1 8-1M684 408q23-12 46 56 3 5 5 9 15 23 29 59l3 5q2 3 4 7 2 1 4 3l1 0 0 1 1 0 1 1 1 0 0 1 1 0 1 0 0 1 1 0 0 1 1 0 1 0 0 1 1 0 0 1 1 0 1 0 0 1 1 0 1 1 1 0 0 1 1 0 1 0 0 1 1 0 0 1 1 0 1 0 0 1 1 0 0 1 1 0 1 0 0 1 1 0 0 1 1 0 1 0 0 1 1 0 0 1 1 0 1 0 0 1 1 0 0 1 1 0 1 1 1 1 0 1 1 0 0 1 1 0 1 1 0 1M684 408l1 1 1 0 0 1 1 0 1 1 1 0 1 1 1 1 1 0 0 1 1 0 1 0 0 1 1 0 1 1 1 0 0 1 1 0 1 1 1 0 0 1 1 0 1 1 1 0 0 1 1 0 1 1 1 0 1 1 1 0 0 1 1 0 1 1 1 0q2 1 4 8 1 3 3 6 2 4 4 9 5 7 9 18 2 4 4 9l2 3 1 3q8 11 16 30 6 11 12 24 2 4 5 9 6 3 12 8 2 1 4 3l1 0 0 1 1 0 1 0 0 1 1 0 1 1 1 0 0 1 1 0 1 0 0 1 1 0 0 1 1 0 1 0 0 1 1 0 0 1 1 0 1 0 0 1 1 0 0 1 1 0 1 0 0 1 1 0 0 1 1 0 1 1 1 1 1 1 1 1 0 1 1 0 0 1 1 1 1 1 0 1 1 0 1 2 1 1 1 0 0 1 1 1 1 1 0 1 1 0 1 1 0 1 1 1 1 1 1 1 1 2M684 408q9-9 18 12 4 2 8 5 22 12 44 87l2 5q7 11 14 27 2 1 3 2l1 0 1 1 1 0 0 1 1 0 1 0 0 1 1 0 0 1 1 0 1 0 0 1 1 0 0 1 1 0 1 0 0 1 1 0 0 1 1 0 1 0 0 1 1 0 0 1 1 0 1 0 0 1 1 0 1 1 1 0 0 1 1 0 1 0 0 1 1 0 0 1 1 0 1 1 1 0 0 1 1 0 1 0 0 1 1 0 0 1 1 0 1 0 0 1 1 0 0 1 1 0M684 408q8-10 16 11 27 4 54 93 9 15 19 33 81 31 163 163 74-5 149 23M684 408q11-3 22 15 37 15 74 127 39-2 77 78l3 3q20 23 41 60 29 8 59 28 20-1 40 4 14 0 29 3 8 0 16 1 5 1 9 1 4 0 8 1 5 0 10 1M684 408q13-8 25 16 34 15 69 125 113 10 227 174 40-11 80-2M684 408q4 0 7 5l2 1q1 0 2 1l1 1 1 1 1 0 1 1 1 0 0 1 1 0 2 1 2 2 1 1 1 0 1 1 1 0 1 1 1 0q15 9 29 60 4 6 7 13 6 10 12 23l2 5q4 8 8 17l1 0q8 3 17 11 1 1 3 3 2 0 3 1l0 1 1 0 1 0 0 1 1 0 0 1 1 0 1 0 0 1 1 0 0 1 1 0 1 0 0 1 1 0 0 1 1 0 1 0 0 1 1 0 0 1 1 0 1 0 0 1 1 0 0 1 1 1 1 1 0 1 1 0 0 1 1 1 1 1 1 1 1 2 1 0 1 2 1 1 1 1 1 1 0 1 1 1 1 1 1 1 1 1 1 1 1 1 0 1 1 1 1 1 1 1 0 1q1 0 2 2 1 1 2 2l1 1 1 1 0 1 1 1 1 1 1 1 1 1 1 1 1 1 1 2q3 2 5 6 2 2 4 4 2 2 4 5l1 1q3 3 5 6l1 2 1 1q12 14 24 49l1 0q76-29 153 43 22-5 44-1M684 408q8-3 15 10 4 2 8 5l1 0 1 1q20 11 40 77l2 5q2 3 4 7l2 5 2 4q6 10 12 22 4 2 9 6l1 0 0 1 1 0 0 1 1 0 1 0 0 1 1 0 0 1 1 0 1 0 0 1 1 0 1 1 1 0 0 1 1 0 1 1 1 0 0 1 1 0 1 1 1 0 0 1 1 0 1 0 0 1 1 0 0 1 1 0 1 0 0 1 1 0 0 1 1 0 1 0 0 1 1 0 0 1 1 0 1 0 0 1 1 1 1 1 0 1 1 0 0 1 1 1 1 1 1 1 1 1 1 1 0 1q1 1 2 2l1 0 0 1q1 1 2 2l1 1 0 1 1 1 1 1q1 1 3 3 1 2 3 4l1 1 1 1 1 2M684 408q2-1 4 3l2 1 1 1 1 1 1 0 1 0 0 1 1 0 0 1 1 0 1 0 0 1 1 0 0 1 1 0 1 0 0 1 1 0 1 1 1 0 0 1 1 0 1 0 0 1 1 0 0 1 1 0 1 0 0 1 1 0 0 1 1 0 1 0q1 1 2 6 3 3 5 8l1 2q4 6 8 17l1 3 2 2q2 5 5 11l2 3q4 7 8 17 2 4 5 9 3 5 6 12l1 4q4 6 7 13 2 3 3 6 2 3 3 6 2 1 4 2l2 1 0 1 1 0 1 0 0 1 1 0 0 1 1 0 1 0 0 1 1 0 0 1 1 0 1 0 0 1 1 0 0 1 1 0 1 0 0 1 1 0 1 1 1 0 0 1 1 0 1 1 1 0 0 1 1 0 1 0 0 1 1 0 0 1 1 0 1 0 0 1 1 0M684 408q11-2 22 14 36 16 72 127 14 6 28 18 18 10 36 42 2 3 5 6l2 2q2 3 4 5l2 3q2 3 5 5 2 3 4 6 19 21 38 55M684 408q4 1 8 6l1 0 1 1 1 0 1 1 1 0 1 1 1 1 1 0q1 1 3 2l1 1 1 1 2 1 1 1 1 0q7 3 13 25l2 2 1 3 1 2 2 3q2 4 4 8l1 3 1 3 2 2q10 15 21 42 10 13 21 32l2 1 1 1 1 0 0 1 1 0 1 0 0 1 1 0 0 1 1 0 1 0 0 1 1 0 0 1 1 0 1 0 0 1 1 0 1 0 0 1 1 0 0 1 1 0 1 0 0 1 1 0 0 1 1 0 1 0 0 1 1 0 0 1 1 0 1 0 0 1 1 0 0 1 1 0 1 0 0 1 1 0 0 1 1 0 1 0 0 1 1 1 1 1 1 1 1 1 0 1 1 1 1 1 2 2 0 1 1 0 1 2 1 0 0 1 2 2 0 1q2 1 4 4l1 1 1 1 1 2q1 1 3 3l1 1 0 1 1 1 1 1 1 1q1 2 3 3l0 1q2 1 3 3M684 408q8-10 16 11 5 2 9 6 31 17 62 119 38 8 76 71 27 29 54 76 66-1 132 35M684 408q7 1 12 8 3 1 5 3 2 1 5 3 1 1 3 2l1 1q14 8 28 55 19 25 39 68l1 1 1 0 0 1 1 0 1 0 0 1 1 0 0 1 1 0 1 0 0 1 1 0 0 1 1 0 1 0 0 1 1 0 0 1 1 0 1 0 0 1 1 0 1 1 1 0 0 1 1 0 1 0 0 1 1 0 0 1 1 0 1 0 0 1 1 0 0 1 1 0 1 0 0 1 1 0 0 1 1 0 1 0 0 1 1 0 0 1 1 0 1 1 1 0 0 1 1 1 1 1 0 1 1 0 1 1 1 2q2 1 3 4l1 1 1 1 1 1 1 1 0 1M684 408q24-27 47 57l2 4q10 17 21 43 9 14 18 33 10 4 19 12 6 3 12 8 2 1 3 2 14 5 28 32 4 5 8 10 10 9 20 24 17 17 35 56 54-4 107 34M684 408q12-13 23 15 31 12 61 117l2 4q6 2 12 7 1 1 3 2l0 1 1 0 1 0 0 1 1 0 0 1 1 0 1 0 0 1 1 0 1 1 1 0 0 1 1 0 1 0 0 1 1 0 0 1 1 0 1 0 0 1 1 0 0 1 1 0 1 0 0 1 1 0 0 1 1 0 1 0 0 1 1 0 0 1 1 0 1 1 1 0 0 1 0 1 1 0 1 1 0 1 1 0 0 1 1 1 1 1 1 1 0 1 1 0 1 2 2 1 0 1 1 1 1 1 0 1q2 2 4 5 2 1 3 3l1 1q1 1 2 2 1 1 2 2 2 2 4 5 1 1 2 3 2 2 3 4l1 1q5 5 10 12l2 2 1 1 1 2q3 3 6 7l2 1q13 16 27 51 17 5 35 17 21 3 42 17 21-3 42 4 17-2 33 3 13-1 25 3 8-2 17 0M684 408q2 1 4 3l1 0 0 1 2 1 1 0 0 1 1 0 1 1 1 0q2 1 3 2 2 1 3 2l1 1 1 0 1 1 2 1q1 1 2 2 13 6 26 48l2 4 2 3q12 18 24 48 4 8 9 17 9 5 19 13l1 0 1 1 1 0 0 1 1 0 1 0 0 1 1 0 0 1 1 0 1 0 0 1 1 0 0 1 1 0 1 0 0 1 1 0 0 1 1 0 1 0 0 1 1 0 0 1 1 0 1 0 0 1 1 1 1 1 1 1 0 1 1 0 0 1 1 1 1 1 1 1 1 1 0 1 1 1 1 1 1 1 1 1 1 2 1 0 1 1 1 1q1 2 2 3l1 1 1 1q0 1 1 2l1 1q2 3 5 6l1 1 0 1q3 3 6 7 1 1 3 3 8 6 16 19 23 18 47 63 89-21 178 25M684 408l1 1 1 0 0 1 1 0 1 1 1 0 0 1 1 0 2 2q1 0 3 1l1 1 1 0 0 1 1 0 1 1q1 1 3 2l1 1 1 0 1 1q1 0 2 1l1 1q13 5 26 47 19 25 38 74 11 4 23 15 3 1 6 4l1 0 0 1 1 0 1 0 0 1 1 0 0 1 1 0 1 0 0 1 1 0 0 1 1 1 1 2 1 0 0 1 1 1 1 1 1 1 1 2 1 0 1 1 0 1 1 1q1 1 2 2l1 1 0 1 1 1 1 1q2 2 3 4l1 1 1 1 1 1 1 2 1 1q5 4 10 12 4 4 8 9l1 2q5 4 9 10 19 19 39 59 47 2 95 33M684 408q4-2 7 5 1 0 3 1 1 1 2 2l1 1 1 1 1 0 1 0 0 1 1 0 1 1 1 0 0 1 1 0 1 0 0 1 1 0 0 1 1 0 1 0 0 1 1 0 0 1 1 0 1 0q1 1 2 5 2 2 3 6 1 1 1 2l1 2 1 1q1 3 3 7 3 5 6 13 3 4 5 9l2 3q1 3 3 6l1 3q3 4 6 11l1 3q2 4 5 10 4 6 8 16 6 8 11 22l2 1 1 0 0 1 1 0 1 1 1 0 0 1 1 0 1 0 0 1 1 0 0 1 1 0 1 0 0 1 1 0 0 1 1 0 1 0 0 1 1 0 0 1 1 0 1 0 0 1 1 0 0 1 1 0 1 0 0 1 1 0 1 1 1 0 0 1 1 0 1 0 0 1 1 0 0 1 1 0 1 0 0 1M684 408l2 2 1 0 1 1q2 1 4 3l1 0 1 1 2 1 1 1q2 0 4 2 2 1 3 2l1 1 1 0q1 1 2 2 18 9 36 69 11 17 22 42 2 5 5 9 16 2 32 21l2 1 1 1q1 1 2 2l1 1 1 1q1 1 2 2l0 1q2 1 3 4l1 1 1 1 1 0 0 1 1 1q2 2 4 5l1 1q3 2 6 7l1 1 1 2 1 1 1 1 1 1 2 3 1 1 1 1 1 1 2 2q2 3 5 6l1 1 1 2 1 1q1 1 2 3 5 4 10 11l1 1q13 16 26 51 46 4 93 36 18-1 37 4 5 0 10 1 28-6 56 3M684 408q2 1 3 2l2 2q1 0 3 1l0 1 1 0 2 2 1 0 1 0 0 1 1 0 1 1 1 0 1 1 1 1 1 0 0 1 1 0 1 1 1 0 0 1 1 0 2 1 1 1 1 0q4 3 8 18l2 2q1 3 3 7 3 6 6 13l2 3q14 18 28 55 4 8 8 17l2 3q83 10 167 165 19 4 39 12 23-1 46 5 31-6 63 1M684 408q12-11 23 15 34 13 69 124 57 17 114 138M684 408q3 1 6 4 1 1 3 2l1 1q2 0 3 2 2 0 3 2 1 0 2 1l1 0 1 1 2 1 1 1 1 1 1 0 1 1q18 11 36 71l2 5 3 4 2 5q9 15 19 35 4 2 8 5 2 1 3 2l1 0 0 1 1 0 0 1 1 0 1 0 0 1 1 0 1 1 1 0 0 1 1 0 1 1 1 0 0 1 1 0 1 0 0 1 1 0 0 1 1 0 1 0 0 1 1 0 0 1 1 0 1 0 0 1 1 0 0 1 1 0 1 0 0 1 1 0 0 1 1 0 1 1 1 0 0 1 1 1 0 1 1 0 0 1 1 1 1 1 1 1 1 1 1 1q1 1 2 2 2 2 4 6l1 1q2 2 4 5l1 1 2 1 1 2q1 2 3 4l2 2q2 2 5 6l1 1q3 3 6 7l1 2q3 3 7 8l1 1 2 2 1 2 1 2q17 16 33 55 39 0 79 33 56-41 113-19M684 408q2-2 4 3l1 1 2 1 1 0 0 1 1 0 1 1 1 0 0 1 1 0 1 0 0 1 1 0 1 1 1 0 0 1 1 0 1 1 1 0 0 1 1 0 1 0 0 1 1 0 0 1 1 0 1 0 0 1 1 0 0 1 1 0 1 0q1 1 3 6l0 2q5 5 9 16 9 13 18 37 17 21 34 61 9 1 17 11 2 1 4 3 3 1 6 3l2 2 1 0 0 1 1 0 1 1 1 1 1 1 1 1 0 1 1 0 0 1 1 1 1 1 1 1 0 1 1 0 0 1 1 0 0 1 1 0 0 1 1 0 0 1 2 2q1 1 2 2l1 2 1 1q1 1 2 3l1 1 1 0 1 2 1 1 0 1 1 1 1 0 0 1 1 0 0 1 1 1 1 1 1 1 1 1 0 1 1 0 1 1 0 2 2 1 0 1 1 1 1 0q1 1 2 3l1 1 0 1 1 1 1 0 0 1 1 1 1 1 1 1 0 1q1 1 2 2l1 1 1 1 1 1q1 1 2 2l0 1q2 2 4 4 6 6 12 23 7 11 14 29 40 7 81 35 5 0 11 1 40-10 80 8 12 0 24 2l1 0M684 408q10-14 20 13 35 7 70 125 67 17 134 148 29 9 57 25 39-3 77 8 22-4 43-2M684 408q7 0 13 9 4 1 9 5l1 1q2 1 4 2 29 18 58 117l1 2q12 5 24 15 5 2 10 6 23 10 47 55l2 2 2 3 2 2q2 3 5 7 20 21 39 57 36 7 71 29M684 408q2 1 4 3l1 1 1 0 1 1 2 1 2 1q2 1 4 3l1 1 2 0 0 1q3 1 5 3 1 1 3 2l1 0q16 9 33 67 12 19 23 46l3 5q6 3 11 8 2 1 4 3l1 0 1 0 0 1 1 0 1 1 1 0 0 1 1 0 1 1 1 0 0 1 1 0 1 0 0 1 1 0 0 1 1 0 1 0 0 1 1 0 0 1 1 0 1 0 0 1 1 0 0 1 1 0 1 0 0 1 1 0 0 1 1 0 1 1 1 1 1 1 0 1 1 0 1 1 0 1 1 1 1 0 0 1 1 1q1 1 2 2 1 2 2 3l1 1 1 1 0 1 1 1 1 1 1 0 1 2 1 1q1 1 2 2 1 2 3 4 3 3 7 9 1 1 3 3l1 1q2 2 3 4 3 3 5 6 4 4 7 9l1 1q2 2 4 4l1 2 2 1q13 14 26 50 22 7 45 22 6 3 12 6l2 1q3 2 5 3l4 2q16-4 32 3 11-2 22 2M684 408l2 1 0 1 1 0 1 1 1 0 0 1 1 0 1 1 1 0 0 1 1 0 1 0 0 1 1 0 0 1 1 0 1 0 0 1 1 0 1 1 1 0 0 1 1 0 1 0 0 1 1 0 0 1 1 0 1 1 1 0 0 1 1 0 1 0 0 1 1 0 0 1 1 0 1 0q3 2 5 12l1 2 1 1 1 2 1 2 1 2 1 2 1 2q1 1 1 2 2 3 3 7 3 4 6 10l1 2q1 3 3 7l1 2 1 3 2 2q2 4 4 10l2 2q1 3 3 7l1 2q2 4 4 7l1 3 1 3 2 2 1 3q2 3 3 6l2 3 1 3 1 2q1 2 2 3l1 2q1 1 3 2l1 1 1 0 0 1 1 0 0 1 1 0 1 0 0 1 1 0 0 1 1 0 1 0 0 1 1 0 0 1 1 0 1 0 0 1 1 0 0 1 1 0 1 0 0 1 1 0 1 1 1 0 0 1 1 0 1 0 0 1 1 0M684 408q6-3 11 7 5 1 10 7 24 10 47 86l3 5 2 5q1 2 3 5 7 10 14 23 2 1 4 3l1 0 0 1 1 0 1 0 0 1 1 0 0 1 1 0 1 0 0 1 1 0 0 1 1 0 1 0 0 1 1 0 0 1 1 0 1 0 0 1 1 0 1 1 1 0 0 1 1 0 1 0 0 1 1 0 0 1 1 0 1 0 0 1 1 0 0 1 1 0 1 0 0 1 1 0 0 1 1 0 1 0 0 1 1 0 0 1 1 0 1 1 1 1 1 1 0 1 1 0 0 1 1 0 0 1 1 1 2 2q1 1 2 2l1 1 0 1 1 1 1 1 1 1 0 1 1 0 0 1 1 1M684 408q13-12 26 17 39 14 78 130 4 2 8 5l0 1 1 0 1 0 0 1 1 0 0 1 1 0 1 0 0 1 1 0 0 1 1 0 1 0 0 1 1 0 0 1 1 0 1 0 0 1 1 0 0 1 1 1 0 1 1 0 0 1 1 0 0 1 1 1 1 0 0 1 1 1 1 1 1 1 0 1 1 1 1 1 2 2 0 1 1 1 1 1 1 1q1 1 1 2l1 1 1 0 1 2 1 1q1 1 3 3 2 2 5 6 3 3 7 8l1 2q3 3 6 8l2 2 2 1 1 3 2 1q18 19 36 60 32 6 64 31l1 1q8 0 17 1l2 1 1 0 2 0 1 0M684 408q5 0 9 6 1 1 3 2l1 0 0 1 1 0 1 1q2 0 3 2l2 1q2 1 4 3 23 9 45 86 16 18 31 43 8 3 16 10 17 8 35 38l1 2q6 5 11 13l2 2q2 3 4 5 3 4 6 7 22 21 43 61 29 8 59 28 22-1 44 4 27-4 54 6 8 0 16 1 5 0 10 0M684 408q6-6 12 8 6 1 12 8 34 11 69 124 63 14 126 144 56 3 111 32M684 408l2 1 1 1 1 1 1 1 1 0 1 1 1 0 1 1 1 1 1 0 0 1 1 0 1 0q1 1 2 2l1 0 1 1 1 1 1 0 1 1 1 1 1 0 0 1 1 0 1 1 1 0 1 1q4 2 8 16 1 1 2 3 3 4 5 11 2 3 4 6l1 3q6 9 12 24 11 16 21 43l3 4q2 5 5 9 9 2 17 11l2 2 1 0 1 1 1 0 0 1 1 0 1 0 0 1 1 0 0 1 1 0 1 0 0 1 1 0 0 1 1 0 1 0 0 1 1 0 0 1 1 0 1 0 0 1 1 0 0 1 1 0 1 1 1 1 0 1 1 0 1 1 0 1 1 0 0 1 1 1 1 1 1 1 1 1 0 1 1 1 1 1 1 1 2 2 1 2 1 1 1 1 1 1 1 1q1 2 3 4l1 1 0 1 1 1 1 1 1 1 1 0 1 2 1 2 1 1q2 1 3 3l2 2 0 1 1 1 1 1 1 1 1 1 1 1 1 2 1 1 1 1 1 1 1 1 0 1 1 1 1 1 1 1 1 1q2 2 4 5l1 1q1 1 2 2l1 1 1 1q7 9 14 30 6 8 11 20 89-43 177 45M684 408q10-1 19 12 3 2 6 4l1 1q30 18 60 119 5 2 9 6l1 0 1 0 0 1 1 0 0 1 1 0 1 0 0 1 1 0 0 1 1 0 1 0 0 1 1 0 0 1 1 0 1 0 0 1 1 0 1 1 1 0 0 1 1 0 1 1 1 0 0 1 1 0 1 0 0 1 1 0 0 1 1 0 1 0 0 1 1 0 0 1 1 0 1 0 0 1 1 0 0 1 1 0 1 1 1 0 0 1 1 1 0 1 1 0 0 1q1 1 2 2l1 1 1 1 1 1 0 1 1 1 1 1 1 1 1 1 1 1 1 1 0 1 2 2 1 1 1 1 0 1 1 1 1 1 1 1 1 1 1 1 1 1 1 1 1 1 0 1 1 1 1 2 1 1 2 2 1 1 1 1 1 2M684 408q5-1 10 6 1 1 2 2l1 0 0 1 1 0 1 1 1 1 1 0 1 1 1 1 1 0 1 1 1 0 0 1 1 0 1 1 1 0 0 1 1 0 1 0q5 4 11 23l1 2 2 3 1 3 1 2q4 6 7 14l2 3 1 4q2 3 4 6l1 3 1 3 2 2 1 3q2 4 5 9l1 2 1 3 1 2 1 2q3 5 5 10l2 3 1 3q2 3 3 7l2 3 1 2 1 1 1 1 2 2 1 0 1 1 1 0 0 1 1 0 1 0 0 1 1 0 0 1 1 0 1 0 0 1 1 0 0 1 1 0 1 0 0 1 1 0 0 1 1 0 1 0 0 1 1 0 1 1 1 0 0 1 1 0 1 1 1 0 0 1 1 0 1 0 0 1 1 0 0 1 1 0 1 0 0 1 1 0 0 1 1 0M684 408q3-2 6 4 3 1 5 4 1 0 2 1l2 1 1 0 0 1 1 0 1 1 1 0 0 1 1 0 1 0 0 1 1 0 2 1 0 1 1 0 2 1q5 3 11 22l1 3 1 3 2 2q5 8 11 23l1 2 2 3 1 3 1 2q3 4 6 12 3 5 6 11 7 10 13 28l2 3 1 1q3 1 7 5l2 1 0 1 1 0 1 0 0 1 1 0 0 1 1 0 1 0 0 1 1 0 0 1 1 0 1 0 0 1 1 0 0 1 1 0 1 0 0 1 1 0 1 1 1 0 0 1 1 0 1 0 0 1 1 0 0 1 1 0 1 0 0 1 1 0 0 1 1 0 1 0 0 1 1 0 0 1 1 0 1 0 0 1 1 0 0 1 1 0M684 408q17-23 34 32 4 7 7 15l2 3 2 3 2 4 1 3 2 4 2 3 1 3 2 3q2 4 3 7 5 9 10 20l2 4q7 12 14 28l2 3q4 2 8 5l1 2 1 0 1 1 1 0 0 1 1 0 1 0 0 1 1 0 0 1 1 0 1 0 0 1 1 0 0 1 1 0 1 0 0 1 1 0 1 1 1 0 0 1 1 0 1 0 0 1 1 0 0 1 1 0 1 0 0 1 1 0 0 1 1 0 1 0 0 1 1 0 0 1 1 0 1 0 0 1 1 0 0 1 1 0 1 0 0 1 1 0 0 1 1 1 1 1 1 1 0 1 1 1 1 1 1 1 1 1 1 1 0 1 1 1 1 1 1 1 1 1 1 1q1 1 2 3 1 1 2 2l1 1 1 2 1 1q1 1 3 3l1 1 1 2 1 1 0 1 2 1 1 1 1 1 1 2 1 1M684 408q11-6 22 14l1 1 1 0 0 1 1 0 1 1 1 0q5 3 10 20l1 2 1 2 1 3 1 1 1 2 1 2 0 2 1 1 1 2 1 1 1 2 1 2 0 2q1 1 2 2l0 2 1 1q1 1 2 3l0 1 1 2 1 2 1 1 0 1 1 2 1 1 1 2q0 1 1 2l0 2 1 1 1 2 1 1 0 1 1 2 1 1 0 2 1 1 1 1 1 2 0 2 1 1q1 2 1 3l1 1q1 2 2 5l1 1 1 2q3 5 6 12 3 4 5 10l1 0 0 1 1 0 1 0 0 1 1 0 1 0 0 1 1 0 0 1 1 0 1 0 0 1 1 0 0 1 1 0 1 0 0 1 1 0 0 1 1 0 1 0 0 1 1 0 0 1 1 0 1 0 0 1 1 0 1 1 1 0 0 1 1 0 1 1 1 0 0 1 1 0 1 0 0 1 1 0 0 1M684 408l2 1 0 1 1 0 1 1 1 0 0 1 1 0 1 1 1 0 1 1 1 1 1 0 0 1 1 0 1 0 0 1 1 0 1 1 1 0 0 1 1 0 1 1 1 0 0 1 1 0 1 1 1 0 1 1 1 0 0 1 1 0 1 1 1 0q7 5 15 30 8 12 16 32 6 12 13 26l2 5 2 4q6 10 11 22 12 5 23 14l1 1 1 1 1 0 0 1 1 0 1 0 0 1 1 0 0 1 1 0 1 0 0 1 1 0 0 1 1 0 1 0 0 1 1 0 0 1 1 0 1 1 1 1 1 1 1 1 0 1 1 0 1 2 1 1 1 1 1 1 0 1 1 1 1 0 0 1 1 1 1 1 1 2 1 1q1 1 2 2 2 2 4 5l2 2 1 1 1 1 0 1q2 1 3 3l1 1 1 2q1 1 2 2 2 2 3 4 2 2 4 5l2 1 1 2 1 1 1 1q2 2 4 5l1 1 1 1 2 2 1 2q2 2 3 4l2 1q12 15 25 50 38 7 76 34 18 0 36 4 9 0 18 2 17-1 34 3 13-1 27 3 2 0 5 0M684 408q3-2 6 4 1 0 3 2l1 1 1 0 0 1 1 0 1 0 0 1 1 0 1 1 1 0 0 1 1 0 1 0 0 1 1 0 0 1 1 0 1 1 1 0 0 1 1 0 1 1 1 0 1 1 1 0q1 1 2 5 1 2 2 4l1 2 1 1q1 2 2 4 1 2 2 4 0 1 1 3l1 1 0 2 1 1 1 1 1 2 0 2q2 2 4 6l1 2q1 3 3 7 1 1 2 3l1 2 1 2 1 2q1 2 2 6l1 2q2 2 4 6 6 8 12 24 6 10 13 25 5 3 11 7l2 2 1 0 2 2 1 0 1 1 1 0 0 1 1 0 1 1 1 0 0 1 1 0 1 0 0 1 1 0 0 1 1 0 1 0 0 1 1 0 0 1 1 0 1 0 0 1 1 0 0 1 1 0 1 0 0 1 1 0 0 1 1 0 1 0 0 1 1 1 1 1 0 1 1 0 0 1 1 0 0 1 1 0 0 1 1 0 0 1 1 1 0 1 1 0 0 1 1 0 0 1 1 1 1 0 0 1 1 1 1 1 0 1M684 408q37-28 74 112 7 12 14 25 9 3 18 12l1 0 1 1 1 0 0 1 1 0 1 0 0 1 1 0 0 1 1 0 1 0 0 1 1 0 0 1 1 0 1 0 0 1 1 0 0 1 1 0 1 0 0 1 1 0 0 1 1 0 1 1 1 1 1 1 0 1 1 1 1 1 1 0 0 1 1 1 1 1 1 2 1 0 1 1 1 2 1 1 1 1 1 2 1 1 1 1 1 1 1 1q1 1 2 2l1 2 1 1 1 1 1 1 1 1 1 1 0 1 1 1 1 1 1 1 1 1 0 1 1 1q2 2 4 5l2 2 1 1 1 1 0 1q1 1 2 2l1 1q1 1 2 2l1 1 1 1q1 2 3 4 1 2 3 4l1 1 1 1 1 1 1 1 1 2q9 10 18 36 3 6 6 12 20 3 40 20 19 4 37 15 20-2 40 4 15 0 31 3 18-2 36 4 7 0 13 1M684 408q5 0 10 7 2 1 4 2l1 1 1 0q1 1 2 2l1 0 0 1 1 0 1 1 1 0 1 1 1 0 1 1 1 1q13 8 27 52 7 12 14 29 8 15 17 33l2 5q12 2 24 15 1 1 3 2l1 0 0 1 1 0 0 1 1 0 1 0 0 1 1 0 0 1 1 0 1 0 0 1 1 0 0 1 1 0 1 1 1 1 0 1 1 0 0 1 1 0 0 1 1 0 0 1 1 1 1 1 1 1 1 1 0 1 1 1 1 0 1 2 1 1 1 1 0 1 1 1 1 0 0 1 1 1 1 1 1 1 1 1 0 1 1 0 1 1 0 1 1 1 1 1q0 1 1 2 2 1 3 4 2 1 3 2l1 1 0 1q2 2 3 4l1 1 1 1 1 1 1 1 1 1 1 1 0 1 1 1 1 1 1 1 1 1 0 1 1 1 1 0 1 1 1 2 1 1 1 1 0 1 1 0q1 1 1 2l1 1 1 1 1 1 0 1 1 1q5 5 10 19 1 2 2 4l1 2q2 4 5 10 2 5 5 11l2 3q37 1 74 35 19-1 38 4 31-8 63 6 10 0 20 2l2 0M684 408q3-1 6 4 1 0 2 2 2 0 4 2l2 1 1 1 1 1 2 1 1 0 0 1 1 0 2 1q1 1 2 2 1 0 3 1 6 3 12 25l2 3q7 11 15 30 17 22 35 64 16-1 31 20 18 7 35 42l2 2 1 1 1 2 1 1 1 1q4 3 7 8 2 2 4 5l1 1 1 1 1 1q7 6 13 25l2 3q3 6 7 14l1 2q2 4 4 8 51 0 101 38 38-6 76 7M684 408q3-1 6 4 1 1 2 2l1 0 1 0 1 2 1 0 2 1 1 1 1 1 1 0q2 1 4 3 2 1 3 2l1 0 1 1 1 0q18 12 37 74 3 7 7 16l3 4 2 5q8 11 15 23 11 4 22 14l1 1 1 0 0 1 1 0 1 0 0 1 1 0 0 1 1 0 1 0 0 1 1 0 0 1 1 0 1 1 1 1 0 1 1 0 1 1q1 1 2 3l1 1 1 1q1 1 3 3l0 1 2 2 1 1 0 1 1 1q3 2 5 5 1 2 3 4l2 2q7 7 15 18l1 2 2 1q1 2 3 5 4 3 7 8l2 2q18 19 36 57 94-17 188 36M684 408q9-2 17 11l1 1q2 1 4 2l1 1 2 1 1 1q16 10 33 64 10 18 20 42 4 6 8 13 16 5 32 21 44 24 89 121 16 6 32 16 25 5 51 18 33-4 65 7 17 0 33 3l2 0 2 1 1 0M684 408q5-1 10 7 2 1 3 2 2 0 3 2 2 0 3 1l1 1 1 0 0 1 1 0 1 1 1 0 0 1 1 0 1 1 1 0q4 3 8 17l1 2q1 2 2 5l2 2 1 2 1 2 1 2q1 3 3 6l1 2 1 2 1 3 1 2 1 2 1 2 1 2 1 2 1 2 1 1q1 3 3 7 1 2 2 4l1 2 1 2 1 2 1 2 1 2q4 6 8 17 2 2 3 4l1 3 1 2q2 4 5 9l1 4 1 0 2 2 1 0 0 1 1 0 1 1 1 0 0 1 1 0 1 0 0 1 1 0 0 1 1 0 1 0 0 1 1 0 0 1 1 0 1 0 0 1 1 0 0 1 1 0 1 0 0 1 1 0 0 1 1 0 1 0 0 1 1 0 1 1 1 0 0 1 1 0 1 0 0 1 1 0 0 1 1 0 1 0 0 1M684 408l2 2 1 0 1 1 1 0 0 1 1 0 1 1 1 0 0 1 1 0 1 0 0 1 1 0 0 1 1 0 1 0 0 1 1 0 0 1 1 0 1 0 0 1 1 0 1 0 0 1 1 0 0 1 1 0 1 0 0 1 1 0 0 1 1 0 1 0 0 1 1 0 1 1 1 0q1 1 3 6 0 1 1 3l1 1 1 2 0 1 1 2 1 1 0 1 1 1 0 2 1 1 1 1 0 1 1 1q1 1 1 4 1 1 2 2l0 2 1 1 1 2 1 1 0 1 1 2 1 1 0 1q1 1 1 3l1 1 1 2 1 1 0 1 1 1 0 1 1 2 0 1q1 1 2 2l0 2 1 1 1 1 0 1 1 2 1 1 1 2 0 2 1 1 1 1 0 2q1 1 2 3l1 2q1 2 2 4 1 2 2 4l1 1q0 1 1 3 1 2 2 5l1 2q3 4 6 11 3 5 6 12 7 1 13 8 2 1 4 2 1 1 3 2l0 1 1 0 1 1 1 0 0 1 1 0 1 0 0 1 1 0 0 1 1 0 1 0 0 1 1 0 0 1 1 0 1 0 0 1 1 0 0 1 1 0 1 0 0 1 1 0 0 1 1 0M684 408q2 0 4 3 1 0 3 2l2 1 1 1 1 0 0 1 2 1 1 0 1 1 1 1 1 0q1 1 2 2l1 0 1 0 0 1 1 0q1 1 2 2l1 0 1 1q11 5 22 42 16 22 32 66l3 5 3 5q2 2 5 4l1 0 0 1 1 0 1 0 0 1 1 0 0 1 1 0 1 0 0 1 1 0 0 1 1 0 1 0 0 1 1 0 0 1 1 0 1 0 0 1 1 0 1 1 1 0 0 1 1 0 1 1 1 0 0 1 1 0 1 0 0 1 1 0 0 1 1 0 1 0 0 1 1 0 0 1 1 0 1 0 0 1 1 0 0 1 1 0 1 0 0 1M684 408q6-3 11 7 2 1 4 3l1 0q1 1 2 2l1 0 1 1 1 1 1 1q2 0 3 1 21 12 41 80 11 17 21 40 3 2 7 5l2 1 1 0 0 1 1 0 0 1 1 0 1 0 0 1 1 0 0 1 1 0 1 0 0 1 1 0 1 1 1 0 0 1 1 0 1 1 1 0 0 1 1 0 1 0 0 1 1 0 0 1 1 0 1 0 0 1 1 0 0 1 1 0 1 0 0 1 1 0 0 1 1 0 1 0 0 1 1 0 0 1 1 0 1 1 1 1 1 1 0 1 1 0 0 1 1 0 0 1 1 1 1 1 1 1 1 1 1 1 0 1 2 1q1 2 2 3l1 1 0 1 1 1M684 408q31-25 61 85 6 11 12 24 4 9 9 19l3 5 1 2q4 3 8 6l1 0 0 1 1 0 1 0 0 1 1 0 0 1 1 0 1 0 0 1 1 0 0 1 1 0 1 0 0 1 1 0 1 1 1 0 0 1 1 0 1 0 0 1 1 0 0 1 1 0 1 0 0 1 1 0 0 1 1 0 1 0 0 1 1 0 0 1 1 0 1 0 0 1 1 0 0 1 1 0 1 0 0 1 1 0 0 1 1 0 1 0 0 1 1 0 0 1 1 1 0 1 1 0 0 1 1 0 1 1 0 1 1 1 1 1 1 1 0 1 1 0 1 1 0 1 1 1 1 1 1 1 1 1 0 1M684 408q6-5 12 8 6 1 12 8l1 0 1 1q25 11 50 99l3 5 3 6q2 4 5 9l1 1 1 0 0 1 1 0 1 1 1 0 0 1 1 0 1 0 0 1 1 0 0 1 1 0 1 0 0 1 1 0 0 1 1 0 1 0 0 1 1 0 0 1 1 0 1 0 0 1 1 0 1 1 1 0 0 1 1 0 1 1 1 0 0 1 1 0 1 0 0 1 1 0 0 1 1 0 1 0 0 1 1 0 0 1 1 0 1 0 0 1 1 0 0 1 1 0M684 408q27-11 54 72 12 19 25 49 4 7 8 15 1 1 2 2l2 1 1 0 0 1 1 0 1 0 0 1 1 0 0 1 1 0 1 0 0 1 1 0 0 1 1 0 1 0 0 1 1 0 0 1 1 0 1 0 0 1 1 0 1 1 1 0 0 1 1 0 1 1 1 0 0 1 1 0 1 0 0 1 1 0 0 1 1 0 1 0 0 1 1 0 0 1 1 0 1 0 0 1 1 0 0 1 1 0 1 0 0 1 1 0 0 1 1 0M684 408q17-10 33 30 5 8 9 18 12 18 24 47 4 8 8 17l2 5q7 9 14 21 15 5 30 19 11 5 22 25l1 2 2 2 1 1 1 1q4 4 8 10 8 6 16 20 17 17 35 59 34 6 69 34 25-4 51 5 28-6 56 6 10-1 19 0M684 408q3 0 6 4 2 1 4 3l1 0q1 1 2 2l1 0q1 1 3 2l1 1 1 0 1 1 1 1 1 0q12 4 24 43 11 16 22 43 8 14 16 32 2 2 5 5 11 5 21 14 2 1 3 2l1 1 1 0 0 1 1 0 1 0 0 1 1 0 0 1 1 0 1 0 0 1 1 0 0 1 1 0 1 1 1 1 1 1 1 1 0 1 1 0q1 1 1 2l1 1 1 1q1 1 1 2 2 1 3 3 1 1 2 2l1 1 1 1q0 1 1 2l1 1q3 3 5 7l1 1q2 2 4 4l1 1q2 2 3 4 4 3 7 8l1 2 2 1 1 2q3 3 6 7l2 2q2 2 4 5l1 2 1 1q14 16 28 51 71-18 143 40M684 408q11-7 21 14 38 8 77 129 39 15 78 80l2 3q21 24 41 58 33 8 65 28 41-6 82 8 17-2 35 0M684 408l2 1 0 1 1 0 0 1 1 0 1 0 0 1 1 0 1 0 0 1 1 0 0 1 1 0 1 0 0 1 1 0 0 1 1 0 1 0 0 1 1 0 1 1 1 0 0 1 1 0 1 0 0 1 1 0 0 1 1 0 1 0 0 1 1 0 0 1 1 0 1 1 1 0 1 1 1 0q1 1 2 5l1 1 0 1 1 1 0 1 1 1 1 2 0 1 1 2 0 1 1 1 1 1 0 2 1 1 1 2 1 1 0 1q1 2 2 4l1 1 1 2q1 2 2 4 2 4 4 9 2 3 3 6l1 2q2 3 3 5 2 5 5 10 2 4 4 8 1 3 3 7 2 3 3 6 1 2 3 5l1 3 1 2q4 6 7 14l2 3 1 2q1 1 2 2l2 1 1 1 1 0 0 1 1 0 1 0 0 1 1 0 0 1 1 0 1 0 0 1 1 0 0 1 1 0 1 0 0 1 1 0 0 1 1 0 1 0 0 1 1 0 0 1 1 0M684 408q10-3 20 13 33 6 65 120l1 3q10 4 20 12 1 1 3 2l1 1 1 0 0 1 1 0 0 1 1 0 1 0 0 1 1 0 0 1 1 0 1 0 0 1 1 0 0 1 1 0 1 0 0 1 1 0 0 1 1 0 1 0 0 1 1 1 0 1 1 0 0 1 1 0 0 1 1 0 0 1 1 0 0 1 1 1 1 1 0 1 1 0 0 1 1 0 0 1 1 0 0 1 1 1 1 1 0 1 1 0 0 1 1 0 0 1 1 0 0 1 1 1 1 1 1 1 0 1 1 0 0 1 1 0 0 1 1 0 0 1 1 1 0 1 1 0 1 1 0 1 1 0 0 1 1 0 0 1 1 1 1 1 0 1 1 0 0 1 1 1 1 0 0 1 1 1 1 1 1 1 0 1 1 0 0 1 1 0 0 1 1 1 0 1 1 0 1 1 0 1 1 0 0 1 1 0 0 1 1 1 1 1 0 1 1 0 0 1 1 0 0 1 1 0 0 1 1 0 0 1 1 0 0 1 0 1 1 0 0 1 1 0 0 1 1 0 0 1 1 1 1 0 0 1q1 0 2 2l0 1 1 0 0 1 1 0 0 1q1 1 2 4l1 1 0 1 1 2 0 1 1 1M684 408q28-13 56 76 19 25 38 64 2 2 5 4l1 1 1 0 0 1 1 0 1 0 0 1 1 0 0 1 1 0 1 0 0 1 1 0 1 1 1 0 0 1 1 0 1 1 1 0 0 1 1 0 1 0 0 1 1 0 0 1 1 0 1 0 0 1 1 0 0 1 1 0 1 0 0 1 1 0 0 1 1 0 1 1 1 0 0 1 0 1 1 0 0 1 1 0 0 1 1 0 0 1 1 0 0 1 1 1 0 1 1 0 1 1 0 1 1 0 0 1 1 0 0 1 1 1 1 1 2 2 0 1 1 0 0 1 1 1 1 1 1 2 1 0 0 1 1 0 0 1 1 1 1 1 0 1 1 0 0 1 1 0 0 1 1 0 0 1 1 1 1 1 1 1 1 1 1 2 1 1 1 0q0 1 1 2l1 1 0 1 1 0 0 1 1 0 0 1 1 0 0 1 1 1 1 1M684 408q3-2 6 4l2 1 1 1 1 1 1 0 0 1 1 0 1 0 0 1 1 0 1 1 1 0 0 1 1 0 1 1 1 0 0 1 1 0 1 0 0 1 1 0 0 1 1 0 1 0 0 1 1 0 0 1 1 0 1 0q1 1 2 4l0 2 1 1 0 1 1 1 1 1 0 1 1 1 0 1 1 1 0 2 1 1 1 1 0 1 1 1 0 2 1 1 1 1 0 1 1 1 0 2 1 1 1 1 0 1 1 1 0 1 1 2q1 1 1 2l1 1 0 2 1 1 1 1 0 1 1 2 1 1 0 1 1 2 1 1 0 2 1 1 1 1 0 1 1 1q1 2 1 3l1 2 1 1 0 2 1 1 1 1 1 2 0 1 1 2 1 2 1 2 1 1q2 3 3 8l1 2 1 1q1 2 2 3 0 1 1 2l1 2 1 2 0 2q1 1 2 3l1 1 1 2q0 2 1 3l1 2 1 2 1 1 0 2q1 1 2 3l1 1 1 1 0 1 1 0 1 0 0 1 1 0 1 1 1 0 0 1 1 0 1 0 0 1 1 0 0 1 1 0 1 0 0 1 1 0 0 1 1 0 1 0 0 1 1 0 0 1 1 0M684 408q2-1 3 2l2 1q1 1 2 2l1 0 0 1 1 0 1 0 0 1 1 0 1 1q1 0 3 2l1 1q1 0 2 1l1 1 1 0 1 0 0 1 2 1 1 1q16 3 32 59 18 25 37 65l1 1 1 0 0 1 1 0 1 0 0 1 1 0 0 1 1 0 1 0 0 1 1 0 0 1 1 0 1 0 0 1 1 0 1 1 1 0 0 1 1 0 1 1 1 0 0 1 1 0 1 0 0 1 1 0 0 1 1 0 1 0 0 1 1 0 0 1 1 0 1 0 0 1 1 0 0 1 1 0 1 0 0 1 1 0 0 1 1 0 1 1 1 0 0 1 0 1 1 0 1 1M684 408q5-1 10 7 2 0 3 2 2 1 4 2l2 1q1 1 2 2l1 0 0 1 1 0 1 0 0 1 1 0 1 1q2 1 4 7l1 1 1 2 0 1 1 1 0 1q1 2 2 3 1 3 3 7 1 2 2 5 2 2 3 6 1 1 2 3l1 2 1 2 1 1q4 5 8 17l1 2 1 2 1 2 1 2q2 3 4 8 6 7 11 22 3 5 6 12 2 3 3 6l1 3 1 0q13 1 27 18 33 3 67 74 23 21 46 60 40 4 81 27M684 408q2 0 4 3 2 0 4 2 2 1 3 2l2 1 0 1 1 0 1 1 1 0 1 1 1 1 1 0 0 1 1 0 1 1 1 0 1 1 1 0 0 1 1 0 1 1 1 0q2 2 4 9 3 4 5 11 3 3 5 8 2 4 4 9l2 3q5 8 10 21 6 9 11 21 2 5 4 9l2 4 2 3 1 3 2 3q3 5 6 12l1 2q30 4 60 52 4 4 8 9 10 11 21 26 21 23 43 61 35 5 70 29 39-11 78 8 18-2 35 1M684 408q4-3 7 4 4 0 8 6 2 1 4 3l1 0 1 1 1 0 1 1 1 0 0 1 1 0 2 1q13 9 27 55 21 25 43 70 12 2 24 16l1 1q4 2 7 8l1 1q1 1 2 2l1 1q1 2 2 3l1 1 1 1q4 4 7 9 6 6 12 14l1 2 2 1q2 3 4 6 4 4 8 9l2 2q18 20 36 60 37 6 73 32 20 0 41 5 22-3 45 4 16-1 32 3l1 0M684 408q29-16 57 79 7 11 13 25 2 3 3 6 5 9 9 18 2 4 4 8 6 2 11 7l2 1 1 0 0 1 1 0 0 1 1 0 1 0 0 1 1 0 0 1 1 0 1 0 0 1 1 0 1 1 1 0 0 1 1 0 1 0 0 1 1 0 0 1 1 0 1 0 0 1 1 0 0 1 1 0 1 0 0 1 1 0 0 1 1 0 1 0 0 1 1 0 0 1 1 0 1 0 0 1 1 1 1 1 0 1 1 0 0 1 1 0 0 1 1 0 0 1 1 1 1 1 1 1 0 1 1 0 0 1 1 0 0 1 1 1 1 1 1 1 0 1 1 1 1 1 1 0 0 1 1 1 1 1 1 1 0 1 1 0 0 1 1 1 1 1 0 1 1 0 0 1M684 408q6 0 11 7 4 2 7 5l1 0 1 1 1 0 1 1 1 1 1 0 0 1 1 0 0 1 1 0 1 0q3 2 5 12 2 2 3 5l1 2 1 2 1 1 1 2q0 1 1 2l0 2 1 1 1 1q1 2 2 4 1 3 3 6 0 1 1 3l1 2q1 1 2 3 1 2 2 4l1 2 0 2 1 1 1 2 1 1 1 2 0 1 1 2 1 2 1 2 1 1 1 2 0 1 1 2q1 1 1 2l1 2 1 1 0 2 1 1q1 1 1 3l1 1q1 1 1 3l1 1 1 2 1 1 0 1 1 1 1 2 0 1 1 1 0 1 1 1 0 1 1 2 1 1 0 1 1 1 0 1 1 1 0 2 1 1 1 1 0 1 1 2 1 1q3 1 7 5 4 1 7 5l2 1 1 0 0 1 1 0 1 1 1 0 0 1 1 0 1 1 1 0 0 1 1 0 1 0 0 1 1 0 0 1 1 0 1 0 0 1 1 0 0 1 1 0 1 0 0 1 1 0 0 1 1 0 1 0 0 1 1 0 0 1 1 0 1 1 1 1 1 1 0 1 1 0 0 1 1 0 0 1 1 0 0 1 1 1 1 1 0 1 1 0 0 1M684 408q2 1 4 3l2 1 1 1 1 1 1 0 1 0 0 1 1 0 0 1 1 0 1 0 0 1 1 0 0 1 1 0 1 0 0 1 1 0 1 1 1 0 0 1 1 0 1 0 0 1 1 0 0 1 1 0 1 0 0 1 1 0 0 1 1 0 1 0q1 1 3 8 2 2 3 5l1 2 1 2 1 2 1 1 0 2 1 1q1 1 2 3l0 2 1 1 1 2q1 1 2 3 1 2 2 4l0 2q2 2 3 4 1 2 2 4l1 2 1 2 1 2 1 2 1 2 0 2q1 1 2 3l1 2 1 2q1 1 2 3 1 3 2 6l1 2q2 2 3 5l1 2 1 3 2 2 1 2 1 2q1 2 1 4 1 1 2 3l1 2 2 3 1 2q0 2 1 4l1 2q2 2 3 4l1 1 1 1 1 0 0 1 1 0 1 1 1 0 0 1 1 0 1 0 0 1 1 0 0 1 1 0 1 0 0 1 1 0 0 1 1 0 1 0 0 1 1 0 0 1 1 0 1 0 0 1 1 0 1 1 1 0 0 1 1 0 1 0 0 1M684 408q25-15 49 63 5 8 9 17l2 4 2 4q13 18 25 48 14 2 27 18l1 1 1 0 1 0 0 1 1 0 0 1 1 0 1 0 0 1 1 0 0 1 1 0 1 0 0 1 1 1 1 1 0 1 1 0 0 1 1 0 0 1 1 0 0 1 1 1 1 1 1 1 0 1 2 1 0 1 1 1 1 1 1 1q1 1 2 3l1 1 1 1q2 2 3 4l1 1 1 1 1 1 0 1 1 1 1 0 0 1 2 2 1 1 1 2 1 0 0 1q1 1 2 2l1 1 1 1 0 1 1 1 1 0 0 1 2 2 0 1 1 0 1 1 0 1 1 1 1 1 1 1 1 1 1 1 0 1 1 0 0 1 1 1 1 1 1 1 0 1 1 0 1 1 0 1 1 1q1 1 2 3l1 1 1 0 0 1q5 5 10 19l1 2 1 2 1 2 1 2 1 2 1 2 1 2q1 1 1 3 4 5 7 13 21 5 42 21 15 5 31 14 27-4 55 5 20-2 40 5 15-4 29-1M684 408q9-6 17 11 3 1 7 5l1 0 1 1 1 0q7 5 15 30l1 3q3 5 7 13 2 4 4 9l1 3 2 3q5 7 10 19 3 6 6 13 7 11 14 26 17 3 34 22 18 11 35 41l2 2 1 2 2 2q2 2 4 5l1 1 2 3 1 1q2 2 3 4l2 2 1 1 1 1 1 1q0 1 1 2l1 1q7 7 14 28l2 3q2 3 3 7l2 3 1 3 1 2 1 2 1 1q60-8 119 40 39-18 78-10M684 408q3 1 6 4l1 1 1 0 1 1 1 1 1 0 1 1 1 0 0 1 1 0 1 1 1 0 0 1 1 0 1 1 1 0 0 1 1 0 1 0 0 1 1 0 0 1 1 0 1 0 0 1 1 0 1 1 1 0q1 1 2 6 1 1 2 2 1 2 2 4l0 1q2 3 4 8l1 2 1 2q1 2 2 5l1 1q1 2 2 4l1 2 1 2 1 2 1 2 1 1q1 2 2 5l1 2q1 2 3 5l1 2 0 2 1 1q1 2 2 4 2 3 3 6 1 2 2 4l1 2q2 3 4 7 1 2 2 5 3 5 6 11 1 3 3 7 3 5 6 12 32-1 63 55 4 4 7 8 6 7 13 16 22 23 43 65 28 6 57 28 5 1 10 3 24-4 49 5 20-3 40 4 11 0 22 2 5 0 11 0M684 408q2 1 3 2l2 2 2 1 1 0 1 1 1 1q2 1 5 3l1 1q2 0 3 1l1 1 1 0q1 1 3 3l1 0 1 1 1 0q15 10 31 62 18 23 36 62 12 2 24 16 2 0 3 1l1 1 1 0 0 1 1 1 1 1 0 1 1 0 1 1 1 1 1 2 1 2 1 0 1 1 0 1 1 1q1 1 2 2l1 1 0 1 1 1 1 1 1 1q2 2 3 4l1 1 1 1q6 4 11 13l1 1 1 2 2 1 1 1 1 2q0 1 1 2l1 1 1 1 1 1q1 1 2 3l1 1 1 1 1 1q17 12 35 61 51-7 103 37 46-23 93-11M684 408q3 1 6 4l1 1 2 1 1 1 1 0 1 1 2 1q1 1 2 2l1 0 1 1 2 1 1 1 1 0 2 2 1 0 2 1q11 6 22 45 20 26 40 76 66 19 131 147 25 8 50 24l4 2q39-9 79 8 9 0 19 2l2 0q6 0 13 1 7 0 14 1M684 408q5 1 9 6 2 1 3 2l1 1 1 0q1 1 3 2l2 1 1 1 1 1 1 0 0 1 1 0 1 0 0 1 1 0 1 1 1 0q1 1 2 5l1 1 0 1 1 1 0 2q1 1 2 3l1 2q1 1 2 3l0 2q1 1 2 3l1 2q1 1 1 2l1 1q0 2 1 3 2 2 3 6 1 2 2 4l1 2 1 2 1 2 1 1 0 2 1 1 1 1q1 2 2 4l0 1 1 2q1 2 3 5l0 2q1 1 2 3 2 3 4 7l0 2 1 2 1 2 1 1q1 1 1 3 2 2 3 5 1 1 1 3 2 3 4 7l1 2 1 1 1 2 0 1 1 2 1 1 1 2 0 1 1 2q1 1 2 3l1 1 1 1 1 0 0 1 1 0 1 0 0 1 1 0 0 1 1 0 1 0 0 1 1 0 0 1 1 0 1 0 0 1 1 0 0 1 1 0 1 0 0 1 1 0 0 1 1 0 1 0 0 1 1 0 1 1 1 0 0 1 1 0 1 0 0 1 1 0 0 1 1 0M684 408l2 1 0 1 1 0 1 1 1 0 0 1 1 0 1 1 1 0 0 1 1 0 1 0 0 1 1 0 0 1 1 0 1 0 0 1 1 0 1 1 1 0 0 1 1 0 1 1 1 0 0 1 1 0 1 0 0 1 1 0 0 1 1 0 1 0 0 1 1 0 1 1 1 0q1 1 2 5 1 2 2 4l1 1 1 2 0 1q1 2 2 4l1 1 1 2 0 1 1 2 1 1 0 2 1 1 1 1 0 2q1 1 2 3l1 1q1 2 2 5 1 2 2 4l1 2q1 1 2 3 1 2 2 4l0 2 1 2 1 2q1 1 2 2l0 2 2 2 0 1 1 2 1 2 1 1 0 2 1 2 1 1 1 2 1 2 1 1 1 2 0 1q1 1 2 3l0 2 1 1 1 2 1 2 1 2 1 1 1 2q1 2 2 5 1 2 2 4 1 1 1 2l1 2 1 3 1 1 1 2 1 1 1 1 1 1 1 0 0 1 1 0 1 0 0 1 1 0 0 1 1 0 1 0 0 1 1 0 0 1 1 0 1 0 0 1 1 0 0 1 1 0 1 0 0 1 1 0 0 1 1 0M684 408q10-6 20 13 34 16 67 123 13 2 25 16 2 2 4 3l1 1 1 0 0 1 1 0 1 0 0 1 1 0 0 1 1 0 1 0 0 1 1 1 0 1 1 0 1 1 0 1 1 0 0 1 1 1 1 1 1 1 1 1 0 1q2 1 4 4 1 1 3 3l0 1 1 1q2 2 3 4l1 1 1 1q6 5 11 13 3 3 6 8 7 6 13 14 20 19 41 62 16 6 33 16 12 5 24 12l2 1q15-2 30 3 18-4 35 3 11-2 21 2 3 0 5 1M684 408q4 0 7 4 3 1 6 4 3 2 6 4l1 1q1 1 3 2l1 1 1 0 1 1 1 0q7 5 15 31 2 4 5 9 5 9 10 20l1 4q5 7 9 16l2 4q3 6 7 14 2 5 4 10 3 5 6 10 4 2 7 5l2 1 1 1 1 0 0 1 1 0 0 1 1 0 1 0 0 1 1 0 0 1 1 0 1 0 0 1 1 0 0 1 1 0 1 0 0 1 1 0 1 1 1 0 0 1 1 0 1 0 0 1 1 0 0 1 1 0 1 0 0 1 1 0 0 1 1 0 1 0 0 1 1 0 0 1 1 0 1 0 0 1 1 0 0 1 1 0 1 1 1 1 1 1 1 1 0 1 1 0 0 1 1 0 0 1 1 1 1 1 1 1 1 1 0 1 1 1M684 408l1 1 1 0 0 1 2 1 2 1 1 1 1 0 0 1 1 0 1 0 1 1 1 1 1 0 0 1 1 0 1 1 1 0 0 1 1 0 1 1 1 0 0 1 1 0 1 0 0 1 1 0 0 1 1 0 1 0 0 1 1 0 0 1 1 0 1 0q1 1 3 7 3 3 5 10l1 2q2 3 4 8 1 2 2 4 2 4 5 9 7 11 14 29 6 10 11 23l2 3q6 11 12 24 1 0 2 1l1 0 0 1 1 0 1 0 0 1 1 0 0 1 1 0 1 0 0 1 1 0 0 1 1 0 1 0 0 1 1 0 0 1 1 0 1 0 0 1 1 0 0 1 1 0 1 0 0 1 1 0 0 1 1 0 1 0 0 1 1 0 1 1 1 0 0 1 1 0 1 0 0 1M684 408q12-5 23 15l1 1 1 1q34 19 67 123 27 1 54 48 15 13 30 35 26 24 52 65 75-8 149 33M684 408q2 0 3 2l1 1 1 0 1 1 1 1 1 1 1 0 1 0 0 1 1 0 1 1 1 1 1 0 1 1 1 0 0 1 1 0 1 1 1 0 0 1 1 0 1 1 1 0 1 1 1 0 0 1 1 0 1 1q6 3 11 21 6 9 12 23l1 4 2 3 2 4q1 3 3 5 3 7 7 15l2 4q6 10 12 23 4 8 8 17 13 1 27 17l1 1 1 0 0 1 1 0 1 0 0 1 1 0 0 1 1 0 1 0 0 1 1 0 0 1 1 0 1 0 0 1 1 1 1 1 1 1 0 1 1 0 0 1 1 1 1 1 1 1 1 1 0 1 2 2 2 2 0 1 2 1 1 1q1 1 2 3l1 1 1 1q1 1 1 2 2 2 3 4l1 1 2 1 1 2 1 1 1 1 1 1 0 1 2 2 1 1 1 1 1 2 1 1 1 1q1 1 2 3l1 1 1 1 1 1 1 1 1 1 1 1 1 1 1 2 1 1 1 1 1 1 1 1 1 2q1 1 2 2l1 2 1 1q9 10 18 36l2 4q1 2 2 5l2 3 1 1q23 6 46 23 18 4 36 13 18-1 36 4 18-2 36 3 14-1 29 3 7 0 14 1M684 408q10-10 20 13 35 2 70 125 78 13 156 159 21 5 43 15 49-8 99 10 6-1 13 0M684 408q8-7 16 11l1 0 1 1 1 1 2 1 2 1 1 1 1 0 1 1 1 0q4 3 8 17l1 2 1 2 1 2 1 2q1 2 2 4l1 2 1 1 1 2 0 2q3 3 5 8 1 3 2 6l2 2 1 2q3 5 6 13 3 5 6 11l1 3 1 2q5 7 9 18 4 6 8 15l1 2q2 1 4 3l1 1 1 0 0 1 1 0 1 0 0 1 1 0 0 1 1 0 1 0 0 1 1 0 0 1 1 0 1 0 0 1 1 0 0 1 1 0 1 0 0 1 1 0 1 1 1 0 0 1 1 0 1 1 1 0 0 1 1 0 1 0 0 1 1 0 0 1 1 0 1 0 0 1 1 0 0 1 1 0 1 0 0 1 1 0 0 1M684 408l2 1 1 1 1 1 1 0 1 1 1 1 1 0 0 1 1 0 1 1 1 0 0 1 1 0 1 0 0 1 1 0 0 1 1 0 1 0 0 1 1 0 1 1 1 0 0 1 1 0 1 0 0 1 1 0 0 1 1 0 1 0 0 1 1 0 0 1 1 0 1 0q1 1 2 5 2 2 3 6 2 4 5 10l1 2 1 2q1 2 3 6l1 2q2 3 4 9 10 10 19 36l2 4q10 15 20 38 3 1 5 3l2 1 0 1 1 0 1 0 0 1 1 0 0 1 1 0 1 0 0 1 1 0 0 1 1 0 1 0 0 1 1 0 0 1 1 0 1 0 0 1 1 0 1 1 1 0 0 1 1 0 1 1 1 0 0 1 1 0 1 0 0 1 1 0 0 1 1 0M684 408q5 1 10 7 2 1 3 2l1 0 1 1 2 1 1 1 1 1 1 0 1 0 0 1 1 0 0 1 1 0 1 1 1 0 1 1 1 0q3 2 7 14l1 3q1 2 2 4l1 2 1 2q1 2 2 4 3 5 6 12l2 3 1 2q1 3 3 7l1 2 1 3q1 1 2 3l1 2 1 3 2 2 1 2q1 2 2 5l1 2 1 2q3 5 6 12l1 3 2 2 1 3 1 2 2 3q1 3 3 7l1 3 2 2 1 2 2 2 1 0 0 1 1 0 1 1 1 0 0 1 1 0 1 0 0 1 1 0 0 1 1 0 1 0 0 1 1 0 0 1 1 0 1 0 0 1 1 0 0 1 1 0 1 0 0 1 1 0 0 1 1 0 1 0 0 1 1 0 1 1 1 0 0 1 1 0 1 0 0 1 1 0 0 1 1 0 1 0 0 1M684 408q11-10 21 14 43 4 86 135 26 8 52 54l2 2q5 5 10 12 2 3 5 6l2 2 2 3q17 20 34 54 56 1 111 34M684 408q9-2 18 12 30 8 61 109 4 8 9 16 111 13 222 177 31-4 62 6 14-1 29-1M684 408q37-11 73 110 5 9 10 19 2 4 4 7 9 3 17 11 2 1 4 3l1 0 0 1 1 0 1 0 0 1 1 0 0 1 1 0 1 0 0 1 1 0 0 1 1 0 1 0 0 1 1 0 0 1 1 0 1 0 0 1 1 0 0 1 1 0 1 0 0 1 1 0 0 1 1 1 0 1 1 1 1 0 1 2 1 1 1 1q1 1 2 2l0 1q1 1 2 2l1 1 0 1 1 0 0 1 1 1q1 1 3 3l1 1 1 2 1 0 1 2 1 2 1 0 1 1q1 1 2 3l1 1 1 1q0 1 1 2 3 2 6 6l1 1q1 2 2 3l1 2 1 1 1 1 1 1 1 1 1 2 1 0 1 1q1 1 2 3l0 1 1 0 1 2 1 1 1 1 1 1q1 1 1 2l2 1 1 1q4 5 8 16l1 3q2 3 4 8l1 2 1 3 1 2 1 2q3 5 6 12l1 1q23 4 46 23 15 4 30 12 12 0 23 3 11-1 23 2 6 0 12 1 12-2 23 2 7 0 14 2M684 408q18-9 35 35l2 3q2 4 5 9 3 6 6 12 2 4 4 9l1 2 2 3q9 13 18 38l2 3 1 3 2 2 1 2 1 2q1 2 2 5l1 2q2 2 4 6 1 0 3 2l1 1 1 0 0 1 1 0 1 0 0 1 1 0 0 1 1 0 1 0 0 1 1 0 0 1 1 0 1 0 0 1 1 0 0 1 1 0 1 0 0 1 1 0 0 1 1 0 1 0 0 1 1 0 1 1 1 0 0 1 1 0 1 0 0 1 1 0 0 1 1 0 1 0 0 1 1 0 0 1 1 0 1 0 0 1 1 0 0 1 1 0 1 0M684 408q3 0 6 4 2 1 4 3 2 1 4 2l1 1 1 0 0 1 1 0 1 1q3 1 5 3l1 1 1 0q19 9 38 74l3 5 2 5 2 5 3 4 2 5 2 5q8 9 15 21 81 18 161 160 32 3 64 15M684 408q16-8 31 25 1 3 3 6 1 3 3 7l2 3q3 7 7 15l2 3q1 2 2 5 2 3 3 6 4 6 7 13l1 3 2 3q1 3 2 6l2 2 1 3 1 2q2 3 3 6l1 2 1 3q3 4 6 11 3 5 6 12 4 1 8 5l1 0 0 1 1 0 1 0 0 1 1 0 0 1 1 0 1 0 0 1 1 0 0 1 1 0 1 0 0 1 1 0 0 1 1 0 1 0 0 1 1 0 1 0 0 1 1 0 0 1 1 0 1 0 0 1 1 0 0 1 1 0 1 0 0 1 1 0 0 1 1 0 1 0 0 1 1 0 0 1 1 0 1 0 0 1 1 0 0 1 1 0 1 0 0 1 1 1 1 1 1 1 1 1M684 408q8-5 15 10 3 1 5 3 2 1 4 3l2 1q23 14 46 90 7 13 15 29 15 4 31 20l2 2 1 0 0 1 1 0 1 0 0 1 1 1 1 1 1 1 0 1 1 0 0 1 1 0 0 1 1 0 0 1 1 1 0 1 1 0 0 1 1 0 0 1 1 0 0 1 1 1 1 1 0 1 1 0 0 1 1 0 0 1 1 1 1 1 1 1 0 1 1 0 0 1 1 0 0 1 1 0 0 1 1 0 0 1 1 1 0 1 1 0 0 1 1 0 0 1 1 0 0 1 1 0 0 1 1 1 0 1 1 0 0 1 1 0 0 1 1 1 1 1 1 1 0 1 1 0 0 1 1 0 0 1 1 1 1 1 1 0 0 1 1 1 1 1 0 1 1 1 1 1 1 1 1 1 1 1 0 1 1 0 0 1 1 1 1 1 1 1 1 1 0 1 1 0 0 1 1 0 0 1 1 1 1 1 1 1 0 1 1 0 0 1 1 1 1 0q1 2 2 5l1 1 0 2 1 1 1 2 1 1 0 2 1 1 1 2q1 1 1 3l1 2 1 1 1 2 1 2 1 1 0 2 1 2 1 2 1 1 1 2 1 2 0 1 1 2 1 2 1 2 1 2 1 1q19 7 39 20 16 5 33 15 24-4 49 5 14-2 28 3 17-3 33 3 7-1 15 1M684 408q16-16 31 26l1 3 2 3q2 4 4 9l2 2 1 2 1 3q1 1 2 3 2 3 3 7l1 3 2 2 1 3 1 2q1 2 2 3 1 2 2 4 1 3 3 7l1 2 1 2q1 2 2 5l2 2 1 3q1 2 3 6l1 2 2 3q1 2 2 4l1 3 1 2q1 2 2 4l1 2q2 3 4 7l1 2q0 2 1 3l1 1q12 1 24 16 18 6 36 36 2 3 5 7l3 3 2 2 1 1 2 2 1 2 1 2 2 1 1 1 1 2 1 1 1 1 1 1 1 1q1 2 3 4l1 1 0 1 1 1 1 1 1 1 1 1 1 1 0 1 2 2q4 4 8 16l1 2 1 3 1 2 1 2 1 1 1 2 1 2 0 1 1 2 1 2 1 2q1 1 1 2l1 2 1 2 1 1 1 2 1 2q36-1 73 35 21-4 42 4 20 0 41 4 20-3 41 2M684 408q2 0 3 2l1 1 1 0 0 1 2 1 1 0q1 1 2 2l1 0 0 1 2 1 2 1 1 0 0 1 1 0 1 1 1 0 1 1 2 1 1 1 1 0 1 1 1 1q8 3 16 31 7 11 15 29 15 23 30 60 29 3 57 48l2 2q16 16 32 38 26 25 52 64M684 408q15-16 30 25 2 3 4 7l2 3q1 2 2 5l2 3 1 3 1 2 1 2 1 2q1 2 2 5 2 2 3 4l1 2q3 5 6 12l1 2q3 5 6 13l1 2q3 5 6 11l1 4q2 2 3 4 4 7 9 19 2 3 3 6 3 0 6 4l1 0 1 0 0 1 1 0 0 1 1 0 1 0 0 1 1 0 0 1 1 0 1 0 0 1 1 0 0 1 1 0 1 0 0 1 1 0 1 1 1 0 0 1 1 0 1 1 1 0 0 1 1 0 1 0 0 1 1 0 0 1 1 0 1 0 0 1 1 0 0 1 1 0 1 0 0 1 1 0 0 1 1 0 1 0 0 1 1 0 0 1 1 0M684 408q11-12 21 14 30 10 60 112l3 5 2 4q8 2 15 10l1 1 1 0 0 1 1 0 1 1 1 0 0 1 1 0 1 1 1 0 0 1 1 0 1 0 0 1 1 0 0 1 1 0 1 0 0 1 1 0 0 1 1 0 1 0 0 1 1 0 0 1 1 0 1 0 0 1 1 0 0 1 1 0 1 1 1 1 1 1 0 1 1 0 1 1q1 1 2 3 2 2 3 4l1 1q3 2 5 5l1 1 1 2 1 1 1 1q2 2 3 5l1 1q2 2 4 4 3 3 5 6l1 2q4 3 7 8l1 1 2 2q5 5 11 13 20 17 40 59 69-20 138 36M684 408q19-10 37 37l1 3q2 4 4 7 3 6 6 12 8 15 17 34 9 17 19 39l2 3q5 3 10 7l1 1 1 0 0 1 1 0 1 0 0 1 1 0 0 1 1 0 1 0 0 1 1 0 0 1 1 0 1 0 0 1 1 0 1 0 0 1 1 0 0 1 1 0 1 0 0 1 1 0 0 1 1 0 1 0 0 1 1 0 0 1 1 0 1 0 0 1 1 0 0 1 1 0 1 0 0 1 1 0 0 1 1 0 1 1 1 1 0 1 1 0 0 1 1 0 0 1 1 1 1 0 0 1 1 1 1 1 1 1q1 1 1 2l2 1 0 1 1 1 1 1 0 1 1 1 1 1 1 1 1 1 1 1q1 1 2 2 1 1 2 3l1 1q1 1 2 3l1 1 1 1 1 1 1 1 1 1 1 1 0 1 2 2 1 1 1 1 1 1 1 1q1 2 3 5l1 1 1 1 1 1q1 1 2 3l1 1 1 1M684 408q6-4 11 7 5 1 10 7 23 9 47 86l2 5q9 14 17 31 14 5 28 19 4 1 7 4 9 4 18 22 4 4 8 9l2 2q2 2 4 5l1 1 2 2q4 5 9 11 7 7 14 16 15 19 31 53 45-3 90 33 46-9 92 10M684 408q9-10 17 11 21 7 43 72 16 22 32 57 118-5 235 176 37-7 74 2M684 408q2 0 4 3l2 1 1 1 1 0 1 1 1 0 0 1 1 0 1 1 1 1 1 0 1 1 1 0 0 1 1 0 1 1 1 0 0 1 1 0 1 0 0 1 1 0 0 1 1 0 1 0 0 1 1 0 0 1 1 0 1 0q9 6 19 38 10 16 20 41 10 17 20 40 115 11 229 179 43-12 86-2M684 408l2 1 0 1 1 0 1 1 1 0 0 1 1 0 1 1 1 0 0 1 1 0 1 0 0 1 1 0 1 1 2 1 1 1 1 0 0 1 1 0 1 1 1 1 1 0 1 0 0 1 1 0 0 1 1 0 1 1 2 1 1 0q9 6 19 39 7 12 14 28l2 5 3 4q12 18 24 45 66 25 132 147 68-1 136 34M684 408q12-15 24 15 36 9 72 127 85 16 170 165 9 2 18 5 55-10 110 11 3 0 7 0M684 408q5-4 10 7 2 1 4 2l1 1 1 0 1 1 1 1 1 0 1 1 1 0 0 1 1 0 1 1 1 0 0 1 1 0 1 1q14 8 27 52l2 4q3 7 7 15 3 6 6 12 11 16 21 37 12 5 24 16 30 15 60 66l2 3 2 3q20 22 39 57 59-4 117 35M684 408q18-21 36 37 7 10 13 24l2 4 1 4q2 2 3 6l2 3 1 3q2 2 3 5l2 3q4 6 8 16 2 4 4 9l1 3 1 2 1 2 1 2 1 1 1 2 1 2 1 1 0 1 1 2q1 1 2 3 1 1 2 2l1 0 0 1 1 0 1 0 0 1 1 0 0 1 1 0 1 0 0 1 1 0 0 1 1 0 1 0 0 1 1 0 0 1 1 0 1 0 0 1 1 0 0 1 1 0 1 0 0 1 1 0 0 1 1 0 1 0 0 1 1 0 1 1 1 0 0 1 1 0 1 0 0 1 1 0 0 1 1 0 1 0 0 1 1 0 0 1 1 0 1 0 0 1M684 408q28-19 56 76 5 10 10 21l3 4 2 4q7 13 15 31 12-1 24 15 6 1 12 8 2 1 3 3l1 1 0 1 1 0 0 1 1 0 0 1 1 1 1 1 1 1 1 1 0 1 1 1 1 0 0 1 1 1 1 1 0 1 1 0 1 1 0 1 1 1 1 1 1 1 1 1 1 1 0 1 1 1 1 1q1 1 2 2l0 1 1 1 1 1 1 1 1 1 1 1 0 1 1 0 0 1 1 1 1 1 1 1 1 1 1 1 1 2 1 1 1 1q1 1 3 4l1 1 1 1q1 1 3 3 1 1 2 3l0 1 1 0 1 2 1 1 1 1 1 1 1 1 0 1 1 0 1 1 0 1q4 4 7 12 1 3 3 7l1 3q2 3 5 9l1 2q3 6 7 14l1 2q41-2 82 36 23-1 46 4 11 1 22 3 12 0 24 2 11 0 22 2l1 0M684 408q15-17 29 21 4 7 8 18l2 3 2 4q18 26 37 73l2 5 3 5q1 3 3 6 5 3 10 7l1 1 1 0 0 1 1 0 1 0 0 1 1 0 0 1 1 0 1 0 0 1 1 0 1 1 1 0 0 1 1 0 1 1 1 0 0 1 1 0 1 0 0 1 1 0 0 1 1 0 1 0 0 1 1 0 0 1 1 0 1 0 0 1 1 0 0 1 1 0 1 0 0 1 1 0 0 1 1 0 1 1 1 0 0 1 0 1 1 1 1 0 0 1 2 1 0 1 1 1q2 1 3 4l1 1 1 1 2 2 1 1q2 2 4 6l1 1 1 1q4 3 7 8l1 1 1 2 1 1 1 1q4 4 8 10 2 2 4 4 5 5 10 12 19 18 38 58 38 6 77 31 55-25 110-10M684 408q34-13 67 98 11 17 21 39l2 1 1 1 1 0 0 1 1 0 1 0 0 1 1 0 0 1 1 0 1 0 0 1 1 0 0 1 1 0 1 0 0 1 1 0 0 1 1 0 1 0 0 1 1 0 0 1 1 0 1 0 0 1 1 0 1 1 1 0 0 1 1 0 1 1 1 0 0 1 1 0 1 0 0 1 1 0 0 1 1 0 1 0 0 1 1 0 0 1 1 0 1 0 0 1 1 0 0 1 1 0M684 408q4 1 7 5 1 0 3 1l1 2 1 0 1 0 1 1 1 1 1 0 1 1 1 1 1 0 1 1 1 1 1 0 1 1 1 1 1 0 0 1 1 0q11 6 21 41l2 4q6 10 12 23 1 3 3 7l2 4 2 3q3 6 7 14l2 4q5 8 10 19 2 1 4 3l1 0 1 1 1 0 0 1 1 0 0 1 1 0 1 0 0 1 1 0 0 1 1 0 1 0 0 1 1 0 0 1 1 0 1 0 0 1 1 0 0 1 1 0 1 0 0 1 1 0 1 1 1 0 0 1 1 0 1 0 0 1 1 0 0 1 1 0 1 0 0 1 1 0 0 1 1 0 1 0 0 1 1 0 0 1 1 0 1 0 0 1 1 0M684 408q10-9 20 13 26 10 52 94 4 8 8 16 3 6 6 13 11 4 21 13l2 1 0 1 1 0 1 0 0 1 1 0 0 1 1 0 1 0 0 1 1 0 0 1 1 0 1 0 0 1 1 0 0 1 1 0 1 0 0 1 1 0 0 1 1 0 1 1 1 1 1 1 0 1 1 0 0 1 1 0 0 1 1 0 0 1 1 1 1 1 0 1 1 0 0 1 1 0 0 1 1 0 0 1 1 1 1 1 1 1 0 1 1 0 0 1 1 1 1 1 1 0 0 1 1 1 0 1 1 0 0 1 1 0 0 1 1 0 0 1 1 1 0 1 1 0 1 1 0 1 1 0 0 1 1 1 1 1 0 1 1 0 1 1 0 1 1 0 0 1 1 0 0 1 1 0 0 1 1 1 1 1 0 1 1 0 0 1 1 0 0 1 1 1 1 1 1 1 0 1 1 0 0 1 1 0 0 1 1 1 1 1 1 1 0 1 1 0 0 1 1 0 0 1 1 1 1 1 1 1 1 1 0 1 1 0 0 1 1 1 1 1 1 1 1 1 0 1 1 0 0 1 1 0q1 2 3 7l1 2 1 1 0 2 1 1 1 2q1 1 1 3l1 2q1 1 1 2l1 2 1 1 1 2 0 1 1 2M684 408q10-4 20 13 1 1 3 2l1 1q29 14 59 113l3 6q7 4 13 9l3 2 1 1 1 0 0 1 1 0 1 0 0 1 1 0 1 0 0 1 1 0 0 1 1 0 1 0 0 1 1 0 0 1 1 0 1 0 0 1 1 0 0 1 1 0 1 0 0 1 1 0 0 1 1 0 1 0 0 1 1 0 0 1 1 0 1 1 1 1 1 1 1 1 1 2 1 1 1 1 0 1 1 0 1 1 0 1 1 0 0 1 1 1 1 1 1 1 1 1 0 1 1 1q2 1 4 4 2 2 5 6l1 2 1 1 1 1q1 1 2 2 1 2 2 3l1 1 2 2q2 2 5 6l1 2q4 3 8 9 19 16 38 62 32 4 63 32l5 1q46-11 92 9 16-5 33-3M684 408q4 0 8 5l2 1 1 2 1 0 1 1 1 0 2 1 0 1 1 0 1 1 1 0 0 1 1 0 1 0 0 1 1 0 0 1 1 0 1 0 0 1 1 0 1 1q7 4 14 27l1 2 2 3 1 3 1 3 2 2q1 3 3 6l1 3q1 2 3 5 2 5 5 11l2 4 2 3 1 3 2 4q1 2 2 4 5 9 10 20l2 4 2 4 2 3 1 3 1 1q5 0 10 7l1 1 1 0 0 1 1 0 1 0 0 1 1 0 0 1 1 0 1 0 0 1 1 0 0 1 1 0 1 0 0 1 1 0 1 1 1 0 0 1 1 0 1 1 1 0 0 1 1 0 1 0 0 1 1 0 0 1 1 0 1 0 0 1 1 0 0 1 1 0 1 0 0 1 1 0 0 1 1 0 1 0 0 1 1 1 1 1 0 1 1 0 0 1 1 0 0 1 1 1 1 1 1 1 1 1 0 1 1 0 0 1 1 0 0 1 1 1 1 1M684 408q15-16 29 21 1 3 3 7l1 3 2 2 1 2q4 7 9 19 5 8 10 19 15 21 30 61l1 1q7 2 14 10 2 0 4 2l1 1 1 0 0 1 1 0 1 1 1 0 0 1 1 0 1 0 0 1 1 0 0 1 1 0 1 0 0 1 1 0 0 1 1 0 1 0 0 1 1 0 0 1 1 0 1 0 0 1 1 0 0 1 1 0 1 1 1 1 1 1 1 1 0 1 1 0 0 1 1 0 0 1 2 2 1 1 0 1 1 0 1 2 1 1 1 1 1 1 1 1 0 1 1 1 1 0q1 1 2 3l1 1q1 1 2 2l1 2 1 1 1 1 0 1 1 1 1 1 1 1 1 1 1 1 0 1 1 0 0 1 1 1 1 1 1 1 1 1 1 1q1 1 2 3l2 2q1 1 2 3l1 1q1 1 2 2l0 1q2 1 3 3 1 1 3 3l0 1 1 1 1 0 0 1 1 1 2 2 0 1 1 0q3 3 6 12l1 2 1 2q2 3 4 9l2 3q0 1 1 3l1 2q1 2 2 4 4 5 8 14 17 4 35 17 8 3 16 8l2 1q12 3 24 8 15-1 29 3 19-4 37 4 9 0 17 2M684 408q5 0 10 6 3 1 6 5l1 0q1 1 2 1l1 1 1 0 0 1 1 0 0 1 1 0 1 0 1 1q6 3 12 22 3 5 5 11l2 2q4 7 8 16 10 16 21 43 5 9 10 20l3 6q99-18 198 176 41-9 82 8 17-4 35-3M684 408q24-16 47 58 9 15 18 35 11 19 22 43 3 2 7 5l1 0 0 1 1 0 1 0 0 1 1 0 0 1 1 0 1 0 0 1 1 0 0 1 1 0 1 0 0 1 1 0 0 1 1 0 1 0 0 1 1 0 1 1 1 0 0 1 1 0 1 0 0 1 1 0 0 1 1 0 1 0 0 1 1 0 0 1 1 0 1 0 0 1 1 0 0 1 1 0 1 0 0 1 1 0 0 1 1 0 1 0 0 1 1 1 1 1 1 1 0 1 1 0 0 1 1 1 1 1 1 1 0 1 1 1 1 1 1 0 1 1 0 1 1 1 1 2M684 408q6-3 12 8 6 1 11 7 32 14 64 121 60 3 120 142 38 8 75 33 32-3 64 7 27-4 55 3M684 408q22-15 43 49 21 29 43 86 10 5 21 14l1 1 1 0 0 1 1 0 1 0 0 1 1 0 0 1 1 0 1 0 0 1 1 0 0 1 1 0 1 0 0 1 1 0 0 1 1 0 1 0 0 1 1 0 0 1 1 0 1 0 0 1 1 0 0 1 1 1 0 1 1 0 0 1 1 0 0 1 1 0 0 1 1 1 1 1 0 1 1 0 0 1 1 0 0 1 1 0 0 1 1 0 0 1 1 1 1 1 0 1 1 0 0 1 1 0 0 1 1 0 0 1 1 1 0 1 1 0 0 1 1 0 0 1 1 0 0 1 1 0 0 1 1 1 1 1 0 1 1 0 0 1 1 0 0 1 1 0 0 1 1 1 1 1 0 1 1 0 0 1 1 0 0 1 1 0 0 1 1 1 1 1 0 1 1 0 0 1 1 0 0 1 1 0 0 1 1 0 0 1 1 1 0 1 1 0 0 1 1 0 0 1 1 0 0 1 1 1 1 1 0 1 1 0 0 1 1 0 0 1 1 0 0 1 1 0 0 1 1 1 1 1 0 1 1 0 0 1 1 0 0 1 1 1 1 0 0 1 0 1M684 408q4 1 8 5 1 1 3 2 2 1 5 3l2 1 0 1q4 2 7 4 29 14 58 113l4 7q7 3 14 9 2 1 4 3l1 1 1 0 1 1 1 0 0 1 1 0 1 0 0 1 1 0 0 1 1 0 1 0 0 1 1 0 0 1 1 0 1 0 0 1 1 0 0 1 1 0 1 0 0 1 1 0 0 1 1 0 1 1 1 1 1 1 1 1 0 1 1 0 0 1 1 0 1 2q1 1 2 2l1 1 0 1q2 1 3 3l1 1 1 1 0 1 1 1 1 1q1 1 2 3l1 1 1 1 1 1 1 1 1 1 1 1 0 1 1 1q2 2 3 4 2 2 4 5l2 1 1 1 1 1 1 2 1 1q2 2 4 5l1 1 2 2q3 3 6 8l2 2 1 2 2 1q14 17 29 52 37 7 74 33 51-16 102 11 8 0 17 1M684 408q13-13 26 17 36 15 72 127 41 1 81 82 20 24 40 58 30 9 60 27 19 0 39 4 23-3 47 5 16-1 32 3l4 0M684 408q2 1 3 2l1 1 1 0 0 1 1 0 1 1 1 0 0 1 1 0 1 0 0 1 1 0 0 1 1 0 1 0 0 1 1 0 1 1 1 0 0 1 1 0 1 1 1 0 0 1 1 0 1 0 0 1 1 0 0 1 1 0 1 0 0 1 1 0 1 1 1 0q0 1 1 3l1 1 0 1 1 1 0 1 1 1 0 1 1 2 0 1 1 1 1 1q1 2 2 4l1 2 0 1 1 2 1 1 0 1 1 1q0 2 1 3l1 2 1 1 0 1 1 1 0 2 1 1 1 1q1 3 3 6 1 2 2 5 1 1 2 3l1 2q1 2 2 6l1 2 1 1 1 2 1 2 1 1 0 2 1 1q1 1 1 2 1 2 2 3 1 2 2 5l1 2q2 3 4 7 2 3 3 8l1 2 1 2q1 1 2 3l1 1 1 2 0 2 1 2 1 2q2 2 3 4l1 1 0 1 1 0 1 0 0 1 1 0 1 0 0 1 1 0 0 1 1 0 1 0 0 1 1 0 0 1 1 0 1 0 0 1 1 0 0 1 1 0 1 0 0 1 1 0M684 408q10-6 20 13 29 13 58 106 4 8 9 17 15 2 30 20 7 1 14 13l1 1 1 1 1 1 1 2 1 1 1 1 0 1 1 1 1 1 1 1 1 1q1 1 2 2l1 2 1 1 1 1 1 1q1 1 1 2l2 2q2 2 3 4l1 1q3 3 5 6 2 2 3 4 4 4 8 9 20 18 39 63 18 6 35 17 18 5 37 15 11 1 22 3 41-8 81 8 9 0 17 1M684 408q4-3 7 5 3 1 5 3l1 0 0 1 2 1 1 0 1 1 1 1 1 0 0 1 1 0 1 0 0 1 1 0 1 1 1 1 2 1q9 5 17 34 3 4 5 8l1 4 2 3q5 8 10 19 7 13 15 30l2 4 2 4 1 4q3 4 5 9 5 1 9 5l2 2 1 0 0 1 1 0 1 0 0 1 1 0 0 1 1 0 1 0 0 1 1 0 1 1 1 0 0 1 1 0 1 1 1 0 0 1 1 0 1 0 0 1 1 0 0 1 1 0 1 0 0 1 1 0 0 1 1 0 1 0 0 1 1 0 0 1 1 0 1 0 0 1 1 0 0 1 1 0 1 1 1 1 1 1 0 1 1 0 1 1 0 1 1 1 1 1 1 1 1 1 0 1M684 408q10-3 19 12 4 2 8 5 21 13 42 86 16 17 33 43 85 12 170 164 5 0 10 1 57-8 114 12M684 408q5 0 9 6 3 1 6 4l1 0 0 1 1 0 2 1 1 1 1 1 1 0 1 1 1 1 1 0 1 1 1 0q13 8 26 52 6 11 12 25l2 4 2 4 2 3q1 4 3 7l2 4q5 9 10 20 17 4 35 22 35 15 70 92 7 12 13 26 53-2 106 38 45-16 91-4M684 408l2 1 0 1 1 0 1 1 1 0 0 1 1 0 1 1 1 0 0 1 1 0 1 0 0 1 1 0 0 1 1 0 1 1 1 0 1 1 1 0 0 1 1 0 1 1 1 0 0 1 1 0 1 1 1 0 1 1 1 0 0 1 1 0 1 1 1 0q6 4 13 26l1 3q3 5 5 10 4 6 7 14l2 3q6 11 12 24 7 13 14 30 2 3 4 6l1 3q5 2 10 6 3 2 6 4l1 0 0 1 1 0 0 1 1 0 1 0 0 1 1 0 1 1 1 0 0 1 1 0 1 0 0 1 1 0 0 1 1 0 1 0 0 1 1 0 0 1 1 0 1 0 0 1 1 0 0 1 1 0 1 0 0 1 1 0 0 1 1 0 1 1 1 1 1 1 0 1 1 0 0 1 1 0 0 1 1 1 1 1 2 2 0 1 1 0 1 2 1 1q1 0 1 2l1 0 1 1 1 1 1 1 0 1 1 1 1 1 1 1 1 1 1 1 0 1q1 1 2 3l1 1 1 1 1 1 1 1 1 2 1 1q1 1 2 2l1 1 1 1M684 408q8-4 16 11 5 1 10 6 25 13 49 98 6 10 12 21 5 2 9 6 2 1 3 2l1 0 0 1 1 0 0 1 1 0 1 0 0 1 1 0 1 1 1 0 0 1 1 0 1 1 1 0 0 1 1 0 1 0 0 1 1 0 0 1 1 0 1 0 0 1 1 0 0 1 1 0 1 0 0 1 1 0 0 1 1 0 1 0 0 1 1 0 0 1 1 0 1 0 0 1 1 0 0 1 1 1 0 1 1 0 0 1 1 0 0 1 1 1 1 1 1 1 1 1 0 1 1 0 0 1 1 0 0 1 1 1 1 1 1 1 0 1 1 0 0 1 1 0 0 1 1 1 1 1 1 1 0 1 1 0M684 408q6 0 12 8 2 1 4 3l1 0 1 1 1 0q1 1 2 2l1 0 1 1q1 1 3 2 14 8 28 55 13 20 25 51 4 6 7 12 3 2 6 4l0 1 1 0 1 0 0 1 1 0 0 1 1 0 1 0 0 1 1 0 0 1 1 0 1 0 0 1 1 0 0 1 1 0 1 0 0 1 1 0 1 1 1 0 0 1 1 0 1 0 0 1 1 0 0 1 1 0 1 0 0 1 1 0 0 1 1 0 1 0 0 1 1 0 0 1 1 0 1 0 0 1 1 0 0 1 1 0 1 0 0 1 1 0 0 1 1 0M684 408q10-3 20 13 36 14 73 127 13 4 27 17 7 4 14 16l1 2 2 2q4 4 8 9 6 6 12 14 7 7 14 17l2 2 2 2 2 3q19 21 39 58 20 6 40 20 11 3 23 9 16 0 32 3l2 1 1 0q13-2 26 2 9-1 19 2M684 408q6-2 11 7 1 1 3 2 1 1 3 2l1 1 1 0 0 1q1 0 3 1 2 1 4 3 18 8 36 70l2 4q12 19 24 46 118-11 235 179l3 0 2 0q14 0 29 3l3 0 1 0q11-1 22 3 8-1 16 1M684 408l1 1 1 0 0 1 1 0 1 1 1 0 0 1 1 0 1 0 0 1 1 0 0 1 1 0 1 1 1 0 0 1 1 0 1 0 0 1 1 0 1 1 1 0 0 1 1 0 1 1 1 0 0 1 1 0 1 0 0 1 1 0 0 1 1 0 1 0 0 1 1 0 0 1 1 0 1 0q1 1 2 4l0 1 1 2q1 2 3 5 1 3 3 7 2 3 5 9 4 7 8 18 5 7 10 18 7 11 15 30 6 11 12 25 17 5 35 22 42 23 85 120 41 8 82 34 57-16 113-2M684 408q19-14 37 37 19 25 38 76 8 12 17 26 4 3 9 6 2 1 4 3l1 0 0 1 1 0 1 1 1 0 0 1 1 0 1 0 0 1 1 0 0 1 1 0 1 0 0 1 1 0 0 1 1 0 1 0 0 1 1 0 0 1 1 0 1 0 0 1 1 0 0 1 1 0 1 0 0 1 1 1 1 1 0 1 1 0 0 1 1 0 0 1 1 1 1 1 1 1 1 1 1 1 0 1 1 1 1 1 1 1 1 2 1 0 0 1 1 1 1 1 1 1 1 1 0 1 1 0 1 2 1 0q1 1 1 3l1 0 1 1 0 1 1 1 1 1 1 1 0 1 1 0 1 1q1 1 2 2 1 1 2 3l0 1 1 0 1 1 1 1 0 1 1 1 1 1 1 2 1 1 1 1 1 1 1 1 1 1 0 1 1 1 1 1 1 1 1 1 1 1 1 1 0 1 1 1q1 1 3 3l1 1 1 1q6 7 12 24 3 5 6 12 3 6 7 14 33 1 66 33l2 1 2 1q15-3 31 3 15-3 30 3 12-2 24 2 7 0 14 2M684 408q5-5 10 7 4 1 8 5 2 1 4 2 1 1 3 2l1 1q18 11 37 73 14 19 28 49 61 15 122 142 50 6 99 33M684 408q2 1 4 3l1 0 0 1 1 0 1 1 1 0 0 1 1 0 1 0 0 1 1 0 0 1 1 0 1 0 0 1 1 0 1 1 1 0 0 1 1 0 1 0 0 1 1 0 0 1 1 0 1 1 1 0 0 1 1 0 1 0 0 1 1 0 0 1 1 0 1 0q1 1 2 4 0 1 1 2l0 2q1 1 2 2 1 3 3 7l1 2 1 1 1 2q1 2 2 4 2 3 3 7 2 4 4 9 2 3 4 6 1 3 3 7l1 2q5 7 10 19 13 15 26 46l1 1 1 0 1 1 1 0 0 1 1 0 1 0 0 1 1 0 0 1 1 0 1 0 0 1 1 0 0 1 1 0 1 0 0 1 1 0 0 1 1 0 1 0 0 1 1 0 1 1 1 0 0 1 1 0 1 0 0 1 1 0 0 1 1 0 1 0 0 1M684 408q5-1 10 7 3 1 7 4l1 1 1 1 1 0 1 1 1 0 1 1 1 1 1 0 1 1 1 0q5 3 11 22 1 3 3 7l2 3q1 3 3 7 3 5 6 12l2 3 1 3 2 3 1 3 2 3q2 5 5 12l2 3q3 4 5 10 1 3 3 5l1 4 2 3 2 3q1 3 3 7l1 3 2 2q29 3 58 50l2 2 2 2 2 3 2 2 1 2 1 1 2 2 1 1 1 2 1 1 1 1 1 1 1 1 1 1 1 1 1 1 0 1 1 1 1 1 1 1q1 1 2 3l1 1 0 1 1 0 1 1 1 1 0 1 1 1 1 1 1 1 0 1 1 0 0 1 1 1 1 0q2 4 5 12 3 4 5 10l1 2 2 2 1 3 1 3 1 2 1 2 1 2q3 5 6 11 50-6 101 38M684 408q20-20 39 41 11 18 22 45 6 11 13 25 2 4 3 8l3 4q4 7 8 14 66 20 133 148 33 7 67 27 22 0 45 5 27-3 53 5 8 0 15 0M684 408q7-4 14 9 3 1 6 4l2 1 1 1 1 1 1 0 1 1 1 0q1 1 2 5 1 2 2 3l0 2q1 1 2 3l1 1 0 2 1 1 1 1 0 1 1 2 1 1 0 1 1 1 0 1 1 2 0 1 1 1 1 2 0 1 1 1 1 1 0 1 1 1 0 1 1 1 0 1 1 2 1 1 0 1 1 1 0 2 1 1 1 1 0 1 1 2 0 1 1 1 0 1 1 1 0 1 1 1 1 1 0 1 1 2 1 2 1 1 0 1 1 2q1 2 2 4l1 1 0 1 1 3q1 1 2 2l0 2 1 1 1 1 0 2 1 1 1 1 0 1 1 2 0 1 1 1 1 2 1 1 0 1 1 1 0 2 1 1 0 1 1 1 1 1 0 1 1 1 0 1 1 2 0 1 1 1 1 1 0 1 1 1 0 1 1 1 0 1 1 1 0 1 1 1 1 1 1 1 1 0 0 1 1 0 1 1 1 0 0 1 1 0 1 0 0 1 1 0 0 1 1 0 1 0 0 1 1 0 0 1 1 0 1 0 0 1 1 0 0 1 1 0 1 0 0 1 1 0 0 1 1 0 1 0 0 1 1 0 1 1M684 408q2-1 4 3 3 0 5 3 3 1 5 3 3 2 6 4 3 1 6 4 32 13 64 121 16 6 32 21 13 8 27 31 30 26 61 89 34 7 69 32 34-5 68 7 25-3 50 5l4 0M684 408q7 0 14 9 25 6 50 82 8 14 16 32l2 5q2 3 4 8 66 13 132 147 28 10 56 28 40-7 79 8l2 0q23-7 46-1M684 408q11-9 21 14 26 12 51 94 2 4 5 9l2 4 2 4 2 4 1 3 2 3q3 1 6 4l0 1 1 0 1 0 0 1 1 0 0 1 1 0 1 0 0 1 1 0 0 1 1 0 1 0 0 1 1 0 0 1 1 0 1 0 0 1 1 0 1 1 1 0 0 1 1 0 1 1 1 0 0 1 1 0 1 0 0 1 1 0 0 1 1 0 1 0 0 1 1 0 0 1 1 0 1 0 0 1 1 0 0 1 1 0 1 0 0 1 1 0 0 1 1 0M684 408q10-2 19 13 27 8 54 97l3 5 2 4 2 5q3 5 7 12 5 2 9 6l2 2 1 0 1 0 0 1 1 0 0 1 1 0 1 0 0 1 1 0 0 1 1 0 1 0 0 1 1 0 1 1 1 0 0 1 1 0 1 0 0 1 1 0 0 1 1 0 1 0 0 1 1 0 0 1 1 0 1 0 0 1 1 0 0 1 1 0 1 0 0 1 1 0 0 1 1 0 1 0 0 1 1 1 1 1 0 1 1 0 0 1 1 0 0 1 1 0 0 1 1 1 1 1 0 1 1 0 0 1 1 1 1 1 1 1 1 1 2 2 0 1 1 1 1 1 1 1q1 1 1 2l1 0 1 1 0 1 1 1 1 1 1 2 1 0 1 1q1 1 3 4l0 1 1 1q1 1 3 3 3 2 6 7l1 1q2 2 5 6 18 13 36 62l1 2q41 5 83 36 57-24 114-3M684 408q15-16 30 24 1 2 2 4l2 3q1 3 3 7 2 3 4 7l1 3 2 3 1 3q4 6 7 14l2 3 1 3 1 2 2 3 1 2 1 3 1 2q3 5 6 12l1 3 2 2 1 2 1 3 1 2q5 8 11 21l1 3 1 1q1 1 2 2l1 1 1 0 1 1 1 0 0 1 1 0 1 0 0 1 1 0 0 1 1 0 1 0 0 1 1 0 0 1 1 0 1 0 0 1 1 0 0 1 1 0 1 0 0 1 1 0 1 1 1 0 0 1 1 0 1 1 1 0 0 1 1 0 1 0 0 1 1 0 0 1 1 0 1 0 0 1 1 0 0 1 1 0 1 0 0 1 1 0 0 1 1 0M684 408q11-12 21 14 34 6 68 124 14 2 29 18l1 1 1 0 0 1 1 0 0 1 1 0 1 1 1 1 1 1 1 1 0 1 1 0 0 1 1 0 0 1 1 1 1 1 0 1 1 0 0 1 1 0 0 1 2 2 1 1 1 1 0 1 1 0q1 1 2 3 1 1 2 2l1 1 0 1 2 2 1 0 0 1 1 1 1 2 2 1 0 1 1 1 1 1 1 1 0 1 1 0 0 1 1 0 0 1 1 2 1 0 0 1 1 0 0 1 1 1 1 1 1 0 0 1 1 1 1 1 1 1q1 1 2 3l1 1 1 1 0 1 1 0 1 1 0 1 1 1 1 0 0 1 1 1 0 1 1 0 0 1 1 0 1 1 0 1 1 1 1 1 1 1 1 2q3 2 6 11 3 4 6 11l1 3 1 2q5 7 10 21l1 1q64-14 127 40M684 408q26-17 52 68l3 5q2 5 5 11l2 5q8 13 16 31 5 8 10 17 17 5 34 22 52 22 104 128 23 8 46 23l3 1q23-1 46 4 21-1 43 5 14-1 29 3 4 0 8 0M684 408q5-1 9 6 3 1 6 4l1 0 1 1 1 1 1 0 1 1 1 0 0 1 2 1q2 1 3 2 11 4 22 43 16 23 32 64l3 5 2 5 1 2q5 2 10 6l1 0 0 1 1 0 0 1 1 0 1 0 0 1 1 0 0 1 1 0 1 0 0 1 1 0 1 1 1 0 0 1 1 0 1 1 1 0 0 1 1 0 1 1 1 0 0 1 1 0 1 0 0 1 1 0 0 1 1 0 1 0 0 1 1 0 0 1 1 0 1 0 0 1 1 0 0 1 1 0 1 0 0 1 1 1 1 1 0 1 1 0 0 1 1 0 0 1 1 0 0 1 1 1 0 1q2 0 3 2l0 1 1 1 2 2 1 1 0 1 1 0 0 1 1 1 1 1 1 1 1 1q1 1 2 2l0 1 1 1 1 1 1 1 1 1 0 1 1 0 0 1 1 1 1 1 1 1 1 1 0 1q1 1 2 2 2 2 4 4M684 408q4 0 8 5 2 1 5 3l0 1 1 0 1 1 1 0 0 1 2 1 1 0 0 1 1 0 1 1 1 0 2 1 0 1 1 0q4 1 7 13l1 1 1 2q1 1 1 3l1 2 1 1 1 2q1 1 1 3 3 3 6 10l1 2q2 3 3 8 5 7 9 18l2 3q2 4 4 8l2 3q10 15 21 41 1 1 2 2l1 0 1 1 1 0 0 1 1 0 1 0 0 1 1 0 0 1 1 0 1 0 0 1 1 0 0 1 1 0 1 0 0 1 1 0 0 1 1 0 1 0 0 1 1 0 0 1 1 0 1 0 0 1 1 0 1 1 1 0 0 1 1 0 1 0 0 1 1 0 0 1 1 0 1 0 0 1 1 0 0 1 1 0 1 0 0 1 1 0 0 1M684 408q5-5 9 6 2 1 4 3l1 0 1 1 1 1q1 0 3 1l0 1 1 0 1 1 1 0 0 1 2 1 2 1q18 8 37 72 11 20 23 47 60 7 120 142 68-1 136 39M684 408q19-24 37 37 12 18 24 49 14 21 28 51 117-13 235 179M684 408l1 1 1 0 0 1 1 0 1 1 1 0 0 1 1 0 1 0 0 1 1 0 0 1 1 0 1 0 0 1 1 0 1 1 1 0 0 1 1 0 1 1 1 0 0 1 1 0 1 1 1 0 0 1 1 0 1 0 0 1 1 0 0 1 1 0 1 0 0 1 1 0 0 1 1 0 1 0q0 1 1 3l1 1 0 1 1 1 0 1 1 1 0 1 1 1 0 1 1 1 0 1 1 2 1 1q0 1 1 3 1 2 2 5 1 1 2 3l1 1 1 2 0 1 1 2 1 1 0 2 1 2 1 1q2 3 3 7l1 1 1 2 1 1q1 2 2 5l1 2 1 1 1 2q2 4 5 10l1 2 1 2q4 6 9 19 7 10 14 26 6 2 12 8l1 0 0 1 1 0 0 1 1 0 1 0 0 1 1 0 1 1 1 0 0 1 1 0 1 1 1 0 0 1 1 0 1 0 0 1 1 0M684 408q13-19 25 16 50 3 99 146 22 21 43 50l3 4 3 3q24 25 48 66 33 7 65 27 58-17 115 9M684 408q13-3 26 17 36 13 73 127 10 3 21 13l1 2 1 0 1 0 0 1 1 1 1 1 0 1 1 1 1 0 0 1 1 0 0 1 1 1 1 1 0 1 1 0 1 1 0 1 1 0 0 1 1 0 0 1 1 1 1 1 0 1 1 0 0 1 1 1 1 1 1 1 1 2 1 0 1 1 0 1 1 1 1 1 1 1 1 1 1 1 0 1 1 1 1 1 1 1 1 1 0 1 1 0 0 1 1 1 1 1 0 1 1 0 1 1 0 1 1 1 1 1 1 0 0 1 1 1 1 1 0 1 1 1 1 1 1 1 1 1 0 1 1 0 0 1 1 0 0 1 1 0 0 1 1 1 1 0 0 1 1 1 1 1 1 2 1 1 1 1 1 1 0 1 2 1 0 1 1 0q2 3 5 11l1 2 1 2q1 2 3 5 0 2 1 4 1 2 2 4l1 2 2 3 1 2 1 2q3 5 6 12 37-4 73 35 20-1 40 4 23-2 47 5 18-2 37 3M684 408q9-2 18 11 4 2 8 6 32 19 63 120 128-15 256 181M684 408q2 0 3 2l1 1 1 0 0 1 1 0 1 1 1 0 1 1 1 0 0 1 1 0 1 1 1 0 0 1 1 0 1 1 1 0 1 1 1 1 1 0 1 1 1 1 1 1 1 0 1 0 0 1 1 0 0 1 1 0 1 0q8 5 16 32 8 14 17 35l2 4 2 4q5 9 10 19 6 11 12 25 109-6 218 178M684 408q13-9 25 16 31 13 63 121 12 1 24 15 5 2 10 7 4 2 8 9 1 1 2 2l1 1 1 2 1 1q1 1 2 2l1 2q1 1 2 2 1 1 2 3l2 2 1 1 1 1 1 1q1 2 3 4l1 2q1 1 2 2l1 1 1 1 1 1 2 2q1 2 2 3l1 2 1 1q1 1 3 2l0 2 1 1 1 1q2 1 3 3l1 1 1 1q1 2 3 4l1 1 1 1 0 1 1 1q7 7 13 24l1 3 2 3 1 2 1 2 1 3 1 2 1 2q1 2 2 3l1 2 1 2 1 2q27 1 54 27 14 2 28 9 24-6 48 5 13-2 26 2 9-1 18 2 11-2 23 2M684 408q9-3 18 12 23 8 47 82 9 16 19 37l2 5q15 2 30 19 2 1 4 3l1 0 1 1 1 0 0 1 1 1 1 1 0 1 1 0 0 1 1 0 0 1 1 0 0 1 1 0 0 1 1 1 1 1 0 1 1 1 1 1 1 1 1 1 1 1 1 1 0 1 1 0 0 1 1 0 0 1 1 1 1 1 1 1 0 1 1 1 1 1 1 1 1 1 1 1 0 1 1 1 1 0 0 1 1 1 1 1 1 1 0 1 1 0 0 1 1 1 1 1 1 1 1 1 0 1 1 0 0 1 1 0 0 1 1 0 0 1 0 1 1 0 0 1 1 0 1 1 1 1 0 1 1 1 1 1 0 1 1 0 1 1 1 2q1 1 2 2l1 1 0 1 1 0 1 1 0 1 1 1 1 1 1 1 1 1 0 1 1 0 0 1 1 0q2 3 4 9l1 2q1 2 1 3l1 2 1 2 1 1 1 2q1 1 1 3 1 1 1 2l1 2 1 2 1 2 1 2 1 2 1 1 1 2 1 2 1 2 1 2 1 2 0 2 1 0q36 8 73 35 36-7 71 7 27-6 53 2M684 408q9-6 17 11 4 1 9 6l1 0q19 12 39 79 5 9 9 19l3 4q4 8 8 17 8 2 15 9l2 2 1 0 0 1 1 0 1 0 0 1 1 0 1 1 1 0 0 1 1 0 1 0 0 1 1 0 0 1 1 0 1 0 0 1 1 0 0 1 1 0 1 0 0 1 1 0 0 1 1 0 1 0 0 1 1 0 0 1 1 0 1 0 0 1 1 0 0 1 1 1 0 1 1 0 0 1 1 0 0 1 1 0 0 1 1 0 0 1 0 1 1 0 0 1 1 0 0 1 1 0 0 1 1 0 0 1 1 1 1 1 0 1 1 0 0 1 1 0 0 1 1 0 0 1 1 0 0 1 1 1 0 1 1 0 0 1 1 0 0 1 1 0 0 1 1 0 0 1 1 1 1 1 0 1 1 0 0 1 1 0 0 1 1 0 0 1 1 1 1 1 1 1 0 1 1 0 0 1 1 0 0 1M684 408q10-7 20 13 33 11 66 122 14 7 27 18 2 1 4 3l1 0 0 1 1 0 1 0 0 1 1 0 0 1 1 0 1 1 1 0 0 1 1 1 0 1 1 0 1 1 0 1 1 0 0 1 1 1 1 1 0 1 1 0 1 1 0 1 1 1 1 1 1 1 1 1 1 1 0 1 1 1 1 1 1 1 1 1 1 1 1 1 0 1 1 1 1 1 1 1 1 1 0 1 1 1 1 1 1 0 0 1 1 1 1 1q1 1 2 3l1 1 1 1 1 1 1 1 1 2 1 0 0 1 1 1 1 1 1 1 1 1q0 1 1 2l1 1 1 1 1 1 1 1 1 1 1 2 1 1 1 1q2 3 5 6l1 1q12 13 24 50l1 0q92-42 185 46M684 408q21-18 42 49l2 3 2 4 2 3 1 4 2 3 2 4 1 3q12 15 23 45l2 4q3 6 6 12l1 1q5 3 9 7l1 0 1 1 1 0 0 1 1 0 1 0 0 1 1 0 0 1 1 0 1 0 0 1 1 0 1 1 1 0 0 1 1 0 1 0 0 1 1 0 0 1 1 0 1 0 0 1 1 0 0 1 1 0 1 0 0 1 1 0 0 1 1 0 1 0 0 1 1 0 0 1 1 0 1 0 0 1 1 0 0 1 1 0 1 0 0 1 1 0 0 1 1 1 1 1 1 2 1 1q1 0 2 2l1 1 0 1 1 0 0 1 1 1 2 2 1 1 0 1 1 0 0 1 1 1 1 1 1 1 1 1 1 1 1 2 1 1 1 1 1 1 1 1 0 1 1 0 0 1 1 1 1 1 0 1 1 1 1 0 0 1 1 1 1 0 0 1 1 1 1 1M684 408q3-1 6 4 3 1 6 4 2 0 4 3 3 1 5 3l1 0 1 1 1 1 1 0 1 1 1 0q6 4 13 27 2 4 5 9l1 2q2 5 5 11l1 3 2 2q6 9 12 25 13 15 26 43 7 3 15 10l1 1 1 0 0 1 1 0 1 1 1 0 0 1 1 0 1 0 0 1 1 0 0 1 1 0 1 0 0 1 1 0 0 1 1 0 1 0 0 1 1 0 0 1 1 0 1 1 1 1 0 1 1 0 1 1 1 2 1 0 0 1 1 1 1 1q1 1 2 3 2 1 3 3 2 2 3 4l1 1 1 1q1 1 2 3l1 1 1 1 1 1 1 1q3 3 5 6l1 1q4 3 8 10l1 2 1 1 1 1q2 1 3 3 1 2 3 3 1 1 2 3l1 1 0 1 1 1 1 1q2 2 4 4 10 10 20 39l1 3q3 5 5 10 48 1 95 36 25-2 51 5l2 1 2 0 2 0 1 0 3 0M684 408q6 0 11 8 2 0 4 2l1 1 1 0 1 1q2 1 5 3 1 1 3 2 24 14 47 93 7 12 14 26 33 5 66 59 36 31 73 92 35 6 70 26 14 0 28 3 25-3 49 5 14-2 28 0M684 408q12-6 24 16 38 12 76 129 10 2 21 13 9 5 18 21l1 1 2 2 1 2 2 2 1 1 1 2 1 1q2 2 3 3l1 1 1 2 1 1 1 1 1 1 1 1 0 1 1 1 1 1 1 0 0 1 1 1 0 1 1 0 1 1 0 1 1 1 1 1 1 1 1 1 1 1 0 1 1 0 0 1 1 0 1 2 1 1 0 1 1 0 1 1 0 1 1 1 1 1 0 1 1 1 1 0 1 1 0 1q5 5 10 18 1 3 2 6l2 2 1 3 1 2 1 2 1 2 1 2 1 2q1 2 2 4 1 2 1 4l2 2q48 4 96 37M684 408q9-12 18 12 4 1 7 5 24 13 47 91 9 13 17 30 11 6 22 13 2 2 5 4 2 1 4 3l1 0 1 1 1 0 0 1 1 0 0 1 1 1 0 1 1 0 0 1 1 0 0 1 1 1 1 1 1 1 0 1 1 0 0 1 1 0 0 1 1 0 0 1 1 1 1 1 1 1 1 2 1 0 0 1 1 1 1 1 1 1 0 1 1 0 0 1 1 1q1 1 2 2l1 1 0 1 1 0 1 1q0 1 1 2l1 1 1 2 1 0 0 1 1 0 0 1 1 1 1 1 1 1 1 1 0 1 1 1 1 0 0 1q1 1 2 2l1 2 2 1 1 2 1 1q1 1 2 3l1 0 0 1q1 1 2 2l1 1 1 1 0 1 1 0 0 1 1 1 1 1 1 1 0 1 1 0 1 1 0 1 1 1q3 3 5 11l1 2 1 2 1 2q1 1 2 4l1 2 1 1 1 2 1 2 1 2q1 2 2 4 1 1 2 4 2 4 4 9l1 1q23 4 45 23 24 3 47 14 36-6 72 7 16-1 33 2M684 408q5 0 9 6l1 1 1 0 1 1 1 1 1 1 1 0q1 1 3 2l1 0 0 1 2 0 0 1 1 0 1 1 1 0 0 1 1 0 1 1 1 0q1 1 2 6 1 1 2 4l1 1q2 3 4 7 2 4 4 9l1 2 1 2 1 2 1 2 1 1 1 2 0 2 1 1 1 2 1 2 1 2q2 3 5 9 2 5 5 10l1 3q4 7 8 17 4 6 7 13 3 5 5 11l2 3q2 3 3 6 5 0 9 5l2 2q2 0 4 2l1 1 1 0 0 1 1 0 0 1 1 0 1 0 0 1 1 0 1 1 1 0 0 1 1 0 1 0 0 1 1 0 0 1 1 0 1 0 0 1 1 0 0 1 1 0 1 0 0 1 1 0 0 1 1 0 1 0 0 1 1 0 0 1 1 0 1 0 0 1 1 0 0 1 1 1 0 1 1 0 0 1 1 0 0 1 1 0 0 1 1 1 1 1 0 1 1 0 0 1 1 1 1 1 1 2 1 0 0 1 1 0 0 1 1 0 1 1 0 1 1 1 1 1 1 1 0 1 1 0M684 408l1 1 1 1 1 0 1 1 1 0q1 1 2 2l1 1 1 0q1 0 2 2l1 0 1 1 1 0 1 1q2 1 3 2l2 1q1 0 2 2 2 0 4 2 13 6 26 51l2 3q4 7 7 16 14 19 27 50 2 1 5 3l1 1 1 0 0 1 1 0 1 0 0 1 1 0 0 1 1 0 1 0 0 1 1 0 0 1 1 0 1 0 0 1 1 0 0 1 1 0 1 0 0 1 1 0 1 0 0 1 1 0 0 1 1 0 1 0 0 1 1 0 0 1 1 0 1 0 0 1 1 0 0 1 1 0 1 0 0 1 1 0 0 1 1 0 1 0 0 1 1 0 0 1 1 0 1 1 1 1 1 1 0 1 1 0 0 1M684 408q19-19 38 39 8 14 17 35l2 4q12 19 24 48l2 5 3 4q61 16 121 143 47 6 95 35 44-9 88 9 5 1 11 1M684 408l1 1 1 0 0 1 1 0 1 1 1 0 1 1 1 1 2 1q2 0 5 3l1 1 1 0q1 1 3 3 2 0 3 2l1 0q2 1 3 2l1 0q15 10 31 63 4 7 8 15l2 5q12 17 24 39 4 2 8 6 2 1 5 3l1 0 0 1 1 0 1 1 1 0 0 1 1 0 1 0 0 1 1 0 0 1 1 0 1 0 0 1 1 0 0 1 1 0 1 0 0 1 1 0 0 1 1 0 1 0 0 1 1 0 0 1 1 0 1 0 0 1 1 1 1 2q2 1 3 3l1 1q2 2 4 5 2 1 3 4l1 1 1 1q3 3 6 7 2 2 4 5 10 8 20 23l2 2 1 3 2 2q2 2 4 4l1 2q20 19 39 57 75-19 151 37M684 408q9-2 17 11 4 2 8 5l1 1q24 14 47 93 7 12 14 26 7 3 15 10l1 0 0 1 1 0 1 1 1 0 0 1 1 0 1 1 1 0 0 1 1 0 1 0 0 1 1 0 0 1 1 0 1 0 0 1 1 0 0 1 1 0 1 0 0 1 1 0 0 1 1 0 1 0 0 1 1 0 0 1 1 0 1 0 0 1 1 1 0 1 1 0 1 1 1 1 0 1 1 1 1 1 1 1 1 1q0 1 1 2l1 0 1 2 2 2 0 1 1 0 1 1 1 1q0 1 1 2l2 2 0 1 1 1 1 0q1 1 1 2l1 1 1 1 0 1 1 1q2 1 3 3l1 1 0 1 1 1 1 1q1 0 2 2 1 1 2 3 3 2 5 5 4 4 8 10l1 1 1 1q2 3 5 6l1 1q9 11 19 39l2 3 2 4 1 4 1 0q38-3 77 35 28-10 56 6 20-1 41 4 11 0 23 2M684 408q18-21 35 33 13 20 27 55 2 3 3 7 12 17 24 42 28 8 56 49 4 5 8 10l2 2 2 2 2 2 1 2 1 2 2 1 1 2 1 1q2 2 3 3 1 2 2 3l1 1 1 1 1 1q1 2 2 3l1 1 1 1 0 1 1 0 1 1 0 1 1 1q3 3 6 12l1 2 1 2 1 2q1 2 2 4l1 2 1 1 0 2 1 2q1 1 2 4l1 1 1 2 1 2 0 1 1 2 1 1 1 2 0 2q1 1 2 2 14 4 29 15 23 6 46 20 25-2 50 5 8 0 16 2 14-1 29 3 13-2 26 2l1 0M684 408q10-11 19 12 30 8 61 111 4 7 8 14 5 3 10 7l1 0 1 0 0 1 1 0 0 1 1 0 1 0 0 1 1 0 0 1 1 0 1 0 0 1 1 0 1 1 1 0 0 1 1 0 1 1 1 0 0 1 1 0 1 0 0 1 1 0 0 1 1 0 1 0 0 1 1 0 0 1 1 0 1 0 0 1 1 0 0 1 1 0 1 0 0 1 1 0 0 1 1 1 0 1 1 0 0 1 1 0 0 1 1 0 0 1 1 1 1 1 1 2 1 1 1 1 1 1 1 1 0 1 1 1 1 1 2 2 1 1 1 2 1 1 1 1 1 1q2 2 4 4l1 1 1 1 1 2q0 1 1 2l1 1 1 1 1 1 1 1q1 1 2 3l1 1q1 1 3 3l1 1 1 1 0 1q1 1 2 3l1 1 1 1 1 1 1 1 2 2 1 1 1 1q1 2 2 3l1 2 1 1q12 10 23 45 2 3 3 5 92-33 185 46M684 408l2 2 1 0 1 1 1 0 0 1 1 0 1 0 0 1 1 0 0 1 1 0 1 0 0 1 1 0 0 1 1 0 1 1 1 0 1 1 1 0 0 1 1 0 1 1 1 1 1 0 1 1 1 0 1 1 2 1 0 1 2 0q9 6 18 37 7 11 14 27l2 4q3 6 6 13 2 3 4 7 5 9 10 20l2 6 3 5q11 3 22 14l1 0 1 1 1 0 0 1 1 0 0 1 1 0 1 0 0 1 1 0 0 1 1 0 1 0 0 1 1 0 0 1 1 0 1 0 0 1 1 0 0 1 1 0 1 1 1 1 1 1 0 1 1 0 0 1 1 0 1 1 0 1 1 1 1 1 1 1 0 1 1 0 1 1 0 1 1 1 1 1 1 1 1 1 1 1 1 2 1 1 1 1 1 2 1 1q1 1 2 3l2 1q1 1 2 3 1 1 3 3l1 1q1 2 3 4l1 1q1 1 2 3l1 1 1 1 1 2 2 1q1 2 3 4l1 2 2 2 1 1 2 2 1 2 2 2 1 1 1 1q13 14 25 51l1 0q78-19 155 43M684 408q8-7 15 10 24 6 47 78 7 12 13 26l3 5 2 5q2 4 4 9l2 3q5 0 11 6 4 2 9 6l1 1 1 1 1 0 0 1 1 0 1 0 0 1 1 0 0 1 1 0 1 0 0 1 1 0 0 1 1 0 1 0 0 1 1 0 0 1 1 0 1 0 0 1 1 0 0 1 1 0 1 1 1 1 0 1 1 0 0 1 1 0 0 1 1 0 0 1 1 1 1 1 1 1 0 1 1 0 0 1 1 0 0 1 1 0 0 1 1 1 1 1 0 1 1 0 0 1 1 0 0 1 1 0 0 1 1 0 0 1 1 1 1 1 0 1 1 0 0 1 1 0 0 1 1 1 1 0 0 1 1 1 1 1 0 1 1 0 0 1 1 0 0 1 1 1 1 1 1 1 0 1 1 0 0 1 1 0 0 1 1 1 1 1 1 1 0 1 1 0 0 1 1 0 0 1 1 0 0 1 0 1 1 0 0 1 1 0 1 1 0 1 1 0 0 1 1 1 1 1 0 1 1 0 0 1 1 0 0 1 1 0 0 1 1 1 1 1 1 1 0 1 1 0 0 1 1 0 0 1 1 0 0 1 1 1 0 1 1 0 0 1 1 0 0 1 1 0 0 1 1 1q2 2 4 8l1 1 0 2 1 2q1 1 2 2l0 2 1 2 1 1 1 2M684 408q36-16 72 108 7 13 14 28 34 5 68 60l2 3q7 7 14 17 28 22 56 71 34 5 68 26 42-15 84 8M684 408q13-7 25 16 35 12 69 125 13 3 27 17 12 7 25 29l1 2 2 1 1 2 1 2 2 1 2 3 1 1 1 2 1 1 1 1 2 2 0 1 1 0 1 2 1 0 0 1 1 1 1 1 1 1 0 1q1 1 3 2l0 1 1 1 1 1 0 1 1 0 0 1 1 0 0 1 1 1 1 1 1 1 0 1 1 0 0 1 1 0 0 1 1 0q1 2 2 5l1 2 1 1 0 2 1 1q1 1 1 3 1 1 2 3 1 3 3 5l0 2 1 2 1 1 1 2 1 2 0 1 1 1 1 2 0 1 1 2 1 1 0 1 1 2 1 1 1 2q0 1 1 3l1 1q36 7 73 35 33-6 67 7 26-5 51 5 3-1 6-1M684 408l2 2 1 0 2 1 0 1 1 0 1 1q2 0 3 1l1 1 2 1 0 1 1 0 0 1 1 0 1 0 0 1 1 0 1 0 0 1 1 0 1 1 1 0 0 1 1 0 0 1 1 0 1 0 0 1 1 0 0 1 1 0 1 0 1 3 0 1 1 1 1 2 0 1 1 1q1 1 2 4l1 1q0 1 1 3 1 2 2 3 1 2 3 6l0 2q2 2 3 5 3 5 6 11 1 3 3 7l1 2q5 7 10 19l1 3q2 3 3 5l1 3q2 4 4 8l1 2q2 4 4 9 5 7 10 17 4 2 8 5 2 1 4 3l1 0 0 1 1 0 0 1 1 0 1 0 0 1 1 0 1 1 1 0 0 1 1 0 1 1 1 0 0 1 1 0 1 0 0 1 1 0 0 1 1 0 1 0 0 1 1 0 0 1 1 0 1 0 0 1 1 0 0 1 1 0 1 0 0 1 1 0 0 1 1 0 1 1M684 408q6 1 12 8l1 0 0 1 1 0 1 1 1 1q2 0 4 2 2 1 4 3 1 0 2 1 13 7 26 51 21 25 42 73 38 13 75 73l2 3q2 3 4 5 21 23 41 61 36 2 72 29 27-3 53 5 29-6 58 6l2 0M684 408q8-5 15 10 2 1 5 3 2 1 3 2l1 1 1 0 0 1 1 0q13 6 27 53 33 23 65 86 48 27 95 125 52 6 105 34M684 408q2 1 4 3 1 0 2 1 2 1 3 2l1 1q1 0 3 1 1 1 3 3 2 1 4 2l1 0 1 1q2 1 3 2l1 1q24 15 48 95 7 11 13 24l2 1q1 1 2 2l1 0 0 1 1 0 1 0 0 1 1 0 0 1 1 0 1 0 0 1 1 0 0 1 1 0 1 0 0 1 1 0 0 1 1 0 1 0 0 1 1 0 1 1 1 0 0 1 1 0 1 1 1 0 0 1 1 0 1 0 0 1 1 0 0 1 1 0 1 0 0 1 1 0 0 1 1 0 1 0 0 1 1 0 0 1 1 0 1 0 0 1 1 0M684 408l1 1 2 1 2 2q2 0 3 2l1 0 1 0 0 1 1 0q2 1 3 3 2 0 4 2 2 1 5 3l1 0 1 1 1 1q27 11 55 109 3 4 5 10l1 1q2 0 4 2l1 0 0 1 1 0 1 0 0 1 1 0 0 1 1 0 1 0 0 1 1 0 0 1 1 0 1 0 0 1 1 0 0 1 1 0 1 0 0 1 1 0 1 1 1 0 0 1 1 0 1 1 1 0 0 1 1 0 1 0 0 1 1 0 0 1 1 0 1 0 0 1 1 0 0 1 1 0 1 0 0 1 1 0 0 1 1 0 1 0 0 1 1 0 0 1 1 0M684 408q8-5 15 10 5 1 9 6 25 12 50 96 9 12 18 27 11 3 22 15l1 0 0 1 1 0 1 0 0 1 1 0 0 1 1 0 1 0 0 1 1 0 0 1 1 0 1 1 1 0 0 1 1 1 0 1 1 0 0 1 1 0 0 1 1 1 1 1 1 1 0 1 1 0 0 1 1 0 0 1 1 0 0 1 1 1 1 1 0 1 1 0 1 1 0 1 1 1 1 0 0 1 1 1 1 1 0 1 1 0 0 1 2 1 0 1q1 1 3 3l0 1 1 0 0 1 1 0 0 1 1 1 1 1 0 1 1 0 0 1 1 0 0 1 1 0 0 1 1 1 1 1 0 1 1 0 1 1 1 2 1 1 0 1 1 0 0 1 1 0 0 1 1 0 0 1 1 0 0 1 1 1 1 1 0 1 1 0 0 1 1 0 0 1 1 0 0 1 1 0 0 1 1 1 0 1 1 0 0 1 1 0 0 1 1 0 0 1 1 0 0 1 1 1 1 1 0 1 1 0 0 1 1 0 0 1 1 0 0 1q1 0 1 2 1 2 2 3l0 2 1 1 1 1 0 1q1 2 2 3l0 2q1 1 2 4l1 1 1 2 0 1 1 1 1 2 0 1 1 1 1 1 0 2 1 1 0 1 1 2 1 1 0 1 1 1 0 1 1 2 1 1 0 1 1 1 0 1 1 1 0 1 1 1q30 2 60 30 17 2 33 7 8 0 16 2l2 0q16-2 33 3l1 0 2 0M684 408q4 0 7 5l2 1 1 1q1 0 3 2l1 0 1 1q3 1 5 3 2 1 3 2l1 1 1 0 1 1q21 13 42 82 9 17 18 37 15 0 30 19l2 1 1 1 1 0 0 1 1 0 0 1 1 0 1 1 1 1 1 1 1 1 1 1 0 1 1 0q2 2 4 5 1 2 3 4l1 2 1 1 1 1q7 5 13 15 3 4 7 8 6 6 13 16 2 2 4 5 21 21 42 61 32 7 64 28 26-2 52 6 31-7 62 6 3-1 6-1M684 408q7-6 13 9 24 4 47 76 10 16 19 37 5 7 10 15 63 14 126 145 45 4 90 32 28-3 56 5 20-3 40 0M684 408q13-5 26 17 35 18 71 125 4 3 9 7 4 2 8 5 3 2 6 4l1 0 1 1 1 1 1 1 1 1 1 1 1 1 0 1 1 0 0 1 1 1 1 1 1 1 0 1 1 0 1 1 0 1 1 1 1 1 1 1 1 1 1 1 1 2 1 1 1 1 1 1 1 1 1 2 1 1 1 1q1 2 2 3l1 1q2 2 3 4l2 1 2 3q1 2 3 4l2 2 1 1 1 2q2 1 3 3l2 3 2 2 1 1 2 2 1 2 2 2 2 3 1 1q13 15 26 50 27 8 53 26 11 3 23 8 33-5 67 7 15-1 30 3 11 0 23 2M684 408q12-4 24 16 33 15 66 122 6 3 13 8l1 2 1 0 1 0 0 1 1 0 1 1 1 0 0 1 1 0 1 0 0 1 1 0 0 1 1 0 1 0 0 1 1 0 0 1 1 0 1 0 0 1 1 0 0 1 1 0 1 0 0 1 1 0 0 1 1 0 1 0 0 1 1 1 1 1 1 1 0 1 1 0 0 1 1 1 1 1 1 1 1 1 1 1 0 1 1 1 1 1 1 1 1 1 1 1 0 1 1 0 0 1 1 1 1 1 0 1 1 1 1 0 1 1 0 1 1 0 0 1 1 1 1 1 0 1 1 1 1 0 0 1 1 1 1 1 1 1 1 1 0 1 1 1 1 1 1 1 1 1 1 1 0 1 1 1 1 0 0 1 1 1 1 1 0 1 1 0 1 1 0 1 1 0 0 1 1 1 1 1 0 1 1 0 0 1 1 0 0 1 1 0 0 1 1 0 0 1 1 1 1 1 0 1 1 1 1 0 0 1 1 0 0 1 1 0 0 1 0 1 1 1 1 0 0 1 1 0 1 1q3 4 6 13 2 4 4 8l1 3 2 2 1 3 1 2 1 2 0 1 1 2 1 1 1 2 0 1 1 2 1 1M684 408l2 1 1 1 1 1 1 0 0 1 1 0 1 0 0 1 1 0 1 1 1 1 1 0 1 1 1 0 0 1 1 0 0 1 1 0 1 0 0 1 1 0 1 1 1 0 0 1 1 0 1 0 0 1 1 0 0 1 1 0 1 0 0 1 1 0 0 1 1 0 1 0q2 1 4 8 2 4 5 11 1 2 2 4 2 3 4 8l1 2q4 6 8 16l2 3 1 3 1 2q7 9 13 26 10 14 20 37 11-1 23 15 2 1 4 2l1 1 1 0 0 1 1 0 0 1 1 0 1 0 0 1 1 0 0 1 1 0 1 0 0 1 1 1 1 1 0 1 1 0 0 1 1 0 0 1 1 0 0 1 1 1 1 1 1 1 0 1 1 0 0 1 1 0 0 1 1 1 1 1 1 1 1 2 1 0 1 2 1 1 1 1 0 1 1 0 0 1 1 0 0 1 1 0 0 1 1 1 1 1 0 1 1 0 0 1 1 0 0 1 1 1 1 1q1 0 1 2l1 0 1 1 0 1 1 1 1 1 1 1 0 1 1 0 0 1q1 1 2 2l1 1 1 1 1 1 1 1 1 1q0 1 1 2l1 1q1 1 2 3l1 1 1 1 1 1 1 1 0 1 1 0 1 1 0 1 1 0 0 1q1 1 2 2l1 1 0 1 1 1q3 3 5 10 2 2 4 6 1 3 3 6l1 3 1 2 1 2 1 3 1 2 1 2 1 1 1 2 1 2q1 2 2 5l1 2 1 1q32 1 65 32 4 2 8 3 28-3 56 6 5 0 11 1 5 0 11 1 3 0 5 0l2 0M684 408q18-12 36 37 5 7 9 17 8 13 16 32l2 3 1 3 2 3 1 3 1 2q2 4 5 9 2 5 5 10 5 8 10 18 4 1 8 5l1 0 0 1 1 0 0 1 1 0 1 0 0 1 1 0 0 1 1 0 1 0 0 1 1 0 1 1 1 0 0 1 1 0 1 1 1 0 0 1 1 0 1 0 0 1 1 0 0 1 1 0 1 0 0 1 1 0 0 1 1 0 1 0 0 1 1 0 0 1 1 0 1 0 0 1 1 0 0 1 1 0 1 0 0 1 1 1 0 1 1 0 1 1 0 1 1 0 0 1 1 0 0 1 1 1 0 1 1 0 1 1 0 1 1 0 1 2 1 1 1 2 1 1 1 0M684 408q4 1 7 5l1 1q3 1 6 3 2 1 5 3l0 1 2 1 1 0 1 1 1 1q2 0 3 1 7 5 14 29l2 3 1 3 1 3 2 2q1 3 2 5l2 3q1 2 2 4l1 3 1 2q7 10 14 28 10 14 20 36 35 8 69 64l3 3 2 2q8 8 16 19 17 21 35 55 39 1 79 32 33-5 67 6 21-7 41-7M684 408q10-13 19 12 31 10 63 115 2 5 5 9 10 5 20 13 4 3 8 6l1 0 1 0 0 1 1 0 0 1 1 0 1 0 0 1 1 0 0 1 1 0 1 0 0 1 1 1 1 1 0 1 1 0 0 1 1 0 0 1 1 1 1 1 1 1 1 1 0 1 1 0 0 1 1 1 1 1 1 1 1 1q1 1 2 2 0 1 1 2 1 2 3 3l0 1 2 1 1 2 0 1 1 1 1 1 1 1 1 1 1 1 1 1 1 1 1 1 1 2 1 1 1 2 1 1 1 1 1 1 2 2 1 1 1 2 1 1 1 1 1 1 1 1q2 2 3 4l1 2 1 1 2 1 1 1 1 2 1 1 1 1 1 2q11 12 22 43 1 3 3 6 39 6 78 35M684 408q5 1 9 6 4 1 8 5 2 1 5 3l2 1 1 1 0 1q27 15 54 105 3 6 6 13l1 1q3 2 7 4l1 0 0 1 1 0 1 1 1 1 1 0 0 1 1 0 1 0 0 1 1 0 0 1 1 0 1 0 0 1 1 0 1 1 1 0 0 1 1 0 1 1 1 0 0 1 1 0 1 0 0 1 1 0 0 1 1 0 1 0 0 1 1 0 0 1 1 0 1 0 0 1 1 0 0 1 1 0 1 0 0 1 1 0 0 1 1 0 1 1 1 0 0 1 1 1 1 1 2 2 0 1 1 1 1 1 1 1 1 1 1 2 1 1 1 1 1 1 1 1 1 2 1 1 1 1q2 2 3 4l1 1 2 2 1 1 1 2 2 2 1 1q2 3 5 6l1 1 2 3q1 1 2 3l2 1q4 5 9 11 18 19 37 61 19 6 39 19 16 5 31 13 29-5 58 6 14-1 29 3l3 0q10 0 19 2 7 0 13 1M684 408l1 1 1 0 0 1 1 0 1 1 1 0 0 1 1 0 1 0 0 1 1 0 0 1 1 0 1 0 0 1 1 0 0 1 1 0 1 0 0 1 1 0 1 1 1 0 0 1 1 0 1 0 0 1 1 0 0 1 1 0 1 0 0 1 1 0 0 1 1 0 1 0 0 1 1 0 0 1 1 0 1 0q1 1 1 3l1 2 1 2 1 1 0 1 1 2 1 1 0 1q1 1 1 3l1 1 1 1 1 2q1 2 2 5 1 2 2 4l1 1 1 2 0 1q1 2 2 3l0 2 1 2 1 1 1 2 1 1q1 2 1 4l1 1 1 1 1 2 0 1q1 1 1 3l1 1 1 2 1 1 0 2 1 1q1 1 1 2l1 1 1 2 0 1 1 2 1 1 0 1 1 2 0 1 1 1 1 1q0 2 1 3l1 1q0 1 1 3l1 2 1 1 0 2 1 1 1 2 1 1 0 1 1 2q1 1 2 3 1 2 2 4l0 2 1 1 1 1 0 2 1 2q1 1 2 2 0 2 1 3l1 1 2 2 1 0 0 1 1 0 1 0 0 1 1 0 0 1 1 0 1 0 0 1 1 0 0 1 1 0 1 0 0 1 1 0M684 408q35-18 70 104 8 15 16 32 7 3 14 9 2 1 4 2 1 1 3 2l1 1 1 0 0 1 1 0 1 0 0 1 1 0 0 1 1 0 1 0 0 1 1 0 0 1 1 0 1 0 0 1 1 0 0 1 1 0 1 0 0 1 1 0 0 1 1 0 1 0 0 1 1 0 0 1 1 1 0 1 1 0 0 1 1 0 0 1 1 0 0 1 1 1 1 1 0 1 1 0 1 1 0 1 1 1 1 1 1 1 0 1 1 0 0 1 1 1 1 0 0 1 1 1 1 1 0 1 1 0 1 1 0 1 1 0 0 1 1 1 1 1 1 1 1 1 0 1 1 1 1 0 0 1 1 1 0 1 1 0 1 1 0 1 1 0 0 1 1 1 1 1 0 1 1 0 1 1 1 1 0 1 1 1 1 1 1 1 1 1 1 1 0 1 1 1 1 0 0 1 1 1 0 1 1 1 1 0 1 1 0 1 1 1 1 1 1 1 0 1 1 1 1 0 1 2 1 1 0 1 1 0 1 1 1 1 1 2q6 6 12 23 1 4 3 7l2 4q1 2 2 5 2 3 4 7l1 2q24 4 49 24 16 3 33 12 28-5 57 6 15-1 29 3 11-1 21 2 4-1 8-1M684 408q4-1 7 5 3 1 6 4l2 1 1 0 1 1 1 1 1 0 0 1 1 0 1 1 1 0 0 1 1 0 1 1 1 0 1 1 1 0q1 1 3 7 1 1 2 3l0 1 1 2 1 2 1 1 0 1q1 2 2 5l1 1 1 2q1 1 2 3l1 2 0 2 1 1 1 2q1 1 2 3 0 1 1 3l1 1q0 1 1 3l1 1q0 1 1 3l1 2 1 1q1 2 1 4l1 1 1 1 0 2q2 2 4 7 3 4 5 10 7 10 14 28l2 3 1 3 2 4 1 2 1 1q12 2 24 16 3 1 6 4l2 2 1 0 1 0 0 1 1 0 0 1 1 0 1 1 1 0 0 1 1 1 0 1 1 0 0 1 1 0 0 1 1 1 1 0 0 1 1 1 1 1 0 1 1 0 0 1 1 0 0 1 1 1 1 1 0 1 1 0 0 1 1 0 0 1 1 0 0 1 1 1 1 1 1 1 1 1 0 1 1 0 0 1 1 1 1 1 1 1 0 1 2 2 1 0 0 1 1 1q1 1 2 2l1 1 0 1 1 0 0 1 1 1 1 1 1 1 0 1 1 0 0 1 1 0 0 1 1 0 0 1 1 1 0 1 1 0 0 1 1 1q1 1 2 2l1 1 1 1 1 1q1 1 2 3l1 1 1 1q1 1 2 2l0 1 1 1 1 0 0 1 1 1 1 1 1 1 0 1 1 1q2 2 5 10 1 3 3 6 1 2 1 3l1 2q3 4 5 9 3 5 6 13 1 2 3 5 34 1 68 34 6 1 12 2 17-2 34 3 21-3 43 4 3 1 7 1l1 0 2 0M684 408q2 1 4 3l1 0 0 1 2 1q1 0 2 1l1 1 1 0 1 1 1 0 0 1 1 0 1 1 1 0 1 1 1 1 1 0 0 1 1 0 1 1 1 0 0 1 1 0 1 0 0 1 1 0 1 1 1 0q2 1 5 11l1 2 1 2 1 2q2 3 4 8l1 2 1 2q6 8 11 22l1 3 2 3q6 9 12 24l2 3 1 4 2 2q3 6 6 14 4 6 9 15l1 1 1 0 0 1 1 0 1 0 0 1 1 0 0 1 1 0 1 0 0 1 1 0 0 1 1 0 1 0 0 1 1 0 0 1 1 0 1 0 0 1 1 0 0 1 1 0 1 0 0 1 1 0 0 1 1 0 1 0 0 1 1 0 1 1 1 0 0 1 1 0 1 1 1 0 0 1 1 0M684 408q13-11 25 16 31 11 62 120 74 9 147 155 32 6 64 22 16 0 33 3l4 1 2 0q16-1 32 3 15-1 30 3l2 0M684 408q32-17 64 93 12 18 23 43 2 1 5 4 4 1 7 4l1 1 1 0 0 1 1 0 1 0 0 1 1 0 1 1 1 0 0 1 1 0 1 1 1 0 0 1 1 0 1 1 1 0 0 1 1 0 1 0 0 1 1 0 0 1 1 0 1 0 0 1 1 0 0 1 1 0 1 0 0 1 1 0 0 1 1 0 1 0 0 1 1 1 1 1 0 1 1 0 0 1 1 0 0 1 1 1 1 1 1 1 0 1 1 0 0 1 1 1 1 1 1 0 0 1 1 1 0 1 1 0 1 1 0 1 1 1 1 0 0 1 1 1 1 1 1 2 1 0q1 1 2 3l0 1 1 0 1 1 0 1 1 0 0 1 1 1 1 1 1 1 0 1 1 0 0 1 1 1 1 0 0 1 2 2 0 1 1 0 1 2 1 0 0 1 1 1 1 1q1 1 3 3l1 1 0 1 1 1q1 1 2 2 1 1 2 3l1 1 1 1 0 1 1 1 1 1 1 0 0 1 1 1q1 1 2 2 1 1 1 2 6 6 11 22 5 7 9 17 2 5 5 10 28 0 55 28 12 3 23 7M684 408q4 0 8 5 1 1 2 2l1 1 2 0 0 1 1 0 1 1 1 0 1 1 2 1 0 1 1 0 1 0 0 1 1 0 1 1 1 0 0 1 1 0 1 1 1 0q5 3 11 22 5 8 11 22l1 3 2 3q2 5 5 10l1 4 2 3q2 4 4 8l2 3q2 5 4 9 4 7 8 15 2 4 4 8 2 4 4 8l1 1 1 1 1 0 0 1 1 0 1 1 1 0 0 1 1 0 1 0 0 1 1 0 0 1 1 0 1 0 0 1 1 0 0 1 1 0 1 0 0 1 1 0 0 1 1 0 1 0 0 1 1 0 0 1 1 0 1 0 0 1 1 0 1 1 1 0 0 1 1 0 1 0 0 1 1 0 0 1 1 0 1 0 0 1 1 0 0 1M684 408q12-5 24 16 34 11 67 123 41 3 81 79 4 4 7 9 19 21 37 55 33 5 65 29 34-8 68 7 26-3 52 3M684 408q3 0 6 4 2 1 4 3 3 1 5 3 4 2 7 5l1 0q23 9 46 87 12 17 25 38 59 16 119 141 62 0 125 36M684 408q4-2 7 5 1 0 3 1l0 1 1 0 0 1 1 0 1 0 0 1 1 0 1 1 1 0 0 1 1 0 1 0 0 1 1 0 0 1 1 0 1 0 0 1 1 0 0 1 1 0 1 0 0 1 1 0 0 1 1 0 1 0q1 1 2 4 1 2 2 6 1 1 2 3l1 2 1 1 0 2 1 1 1 1 0 2 1 1 1 2 1 1 0 2 1 1 1 1 0 1 1 2 1 2 1 2 1 1 0 2 1 2 1 1 1 2q1 2 2 4 1 1 1 2l1 2q1 2 3 5l0 2 1 1 1 2 1 2 1 1 0 1 1 2q1 2 2 3l0 1 1 2 1 1 0 2q1 1 2 2 1 2 1 4l1 1q1 1 1 3l1 1 1 2 1 2 1 2q1 1 1 2l1 2q1 1 1 3l1 1 1 2q1 1 1 3l1 1q1 2 2 5l1 2 1 1 1 1q2 1 4 3l2 1 0 1 1 0 1 0 0 1 1 0 0 1 1 0 1 0 0 1 1 0 0 1 1 0 1 0 0 1 1 0 0 1 1 0 1 0 0 1 1 0 0 1 1 0 1 0 0 1 1 0 1 1 1 0 0 1 1 0M684 408q12-2 23 15 38 15 75 129 31 0 62 60 30 27 59 80 41 5 82 29 30-2 60 6 20-2 40 1M684 408q10-15 20 13 24 9 47 84 6 12 13 26l2 5 2 4 2 3 1 1 1 1 1 0 0 1 1 0 1 0 0 1 1 0 0 1 1 0 1 0 0 1 1 0 0 1 1 0 1 0 0 1 1 0 0 1 1 0 1 0 0 1 1 0 0 1 1 0 1 0 0 1 1 0 0 1 1 0 1 0 0 1 1 0 1 1 1 0 0 1 1 0 1 0 0 1 1 0 0 1 1 0 1 0 0 1 1 0 0 1 1 0 1 0 0 1 1 0M684 408q7 1 13 9 7 1 13 8 38 13 75 129 8 2 15 9 28 8 56 63 22 24 45 65 58-4 117 34M684 408q5-3 10 6 4 1 8 6 2 1 3 2l2 1 1 1 2 1q10 5 21 41 10 15 21 41l2 4q8 14 17 33 79 11 159 161 35 3 71 18 42-6 84 4M684 408q9-10 18 12 4 2 8 5 31 16 61 119 3 2 6 4l1 1 1 0 0 1 1 0 1 0 0 1 1 0 0 1 1 0 1 0 0 1 1 0 0 1 1 0 1 0 0 1 1 0 0 1 1 0 1 0 0 1 1 0 1 1 1 0 0 1 1 0 1 0 0 1 1 0 0 1 1 0 1 0 0 1 1 0 0 1 1 0 1 0 0 1 1 0 0 1 1 0 1 0 0 1 1 0 0 1 1 0 1 0 0 1 1 1 1 1 0 1 1 0 0 1 1 0 0 1 1 0 0 1 1 1 1 1 0 1 1 0 1 1M684 408q2 1 3 2l1 1 1 0 0 1 1 0 1 1 1 0 0 1 1 0 1 1 1 0 0 1 1 0 1 0 0 1 1 0 1 1 1 0 0 1 1 0 1 1 1 0 0 1 1 0 1 0 0 1 1 0 0 1 1 0 1 0 0 1 1 0 1 1 1 0q1 1 2 5 1 2 3 5l1 2 1 2 0 2q1 1 2 3l1 2 1 1 1 2 0 1q1 2 2 4 1 2 2 4 1 2 2 3l1 2 0 2q2 2 3 5l1 2 1 2q1 2 2 4l1 1 1 2 1 2 0 1q1 2 2 4l1 2 1 1 1 2 0 1 1 2 1 2 1 2q1 1 1 2l1 2 1 2q1 1 2 4l1 2 1 1 0 2 1 1 1 2q1 2 2 4 1 1 1 3l1 1q1 2 2 4l1 2 1 1q1 2 2 5 1 1 2 3l0 2 1 0q1 1 2 2l1 0 0 1 1 0 1 1 1 0 0 1 1 0 1 0 0 1 1 0 0 1 1 0 1 0 0 1 1 0 0 1 1 0 1 0 0 1 1 0 0 1 1 0 1 0 0 1M684 408q7-9 14 10 6 1 12 7 29 13 59 116l1 3q5 2 10 6 2 1 4 2l1 1 0 1 1 0 1 0 0 1 1 0 0 1 1 0 1 0 0 1 1 0 1 1 1 0 0 1 1 0 1 0 0 1 1 0 0 1 1 0 1 0 0 1 1 0 0 1 1 0 1 0 0 1 1 0 0 1 1 0 1 0 0 1 1 0 0 1 1 0 1 1 1 1 1 1 0 1 1 0 0 1 1 1 1 1q1 1 2 3l1 1q2 1 4 4l0 1q4 2 7 8 3 3 7 8l1 1q4 5 9 11 10 9 20 24 19 21 37 56 84-17 168 39M684 408q12-9 23 15 35 9 71 126 71 16 142 151 28 7 56 20 43-7 86 9 12-1 23-1M684 408q15-18 30 24 2 4 4 8l1 3 2 2 1 3q1 1 2 3 1 3 2 6l1 2q1 1 2 2 0 2 1 3 1 2 2 4 2 3 4 8l1 2 1 2q1 2 2 4l1 2 1 1q1 2 2 4l1 2 0 2q1 1 2 3l1 2 1 1 0 1 1 1 0 1 1 2 0 1 1 1 1 1 0 1q1 2 3 5 1 2 2 5 1 1 2 3l1 2q1 2 2 4 1 2 1 4l1 1 1 2 1 2q1 1 1 2l1 2 1 2 2 1 1 0 0 1 1 0 1 0 0 1 1 0 0 1 1 0 1 0 0 1 1 0 0 1 1 0 1 0 0 1 1 0 0 1 1 0 1 0 0 1 1 0 0 1 1 0 1 0 0 1 1 0 0 1 1 0 1 0 0 1 1 0 1 1 1 0 0 1 1 0 1 0 0 1 1 0 0 1 1 0 1 0 0 1M684 408q18-22 35 34l2 3 1 3 1 3 2 2 1 3 1 2 1 3q3 5 6 12l2 2 1 3q4 6 7 14 3 5 6 12l2 3q2 4 5 10 7 11 15 28 8 2 15 10l1 0 1 1 1 0 0 1 1 0 1 1 1 0 0 1 1 0 1 0 0 1 1 0 0 1 1 0 1 0 0 1 1 0 0 1 1 0 1 0 0 1 1 0 0 1 1 0 1 0 0 1 1 0 0 1 1 0 1 0 0 1 1 1 1 1 0 1 1 0 0 1 1 0 0 1 1 0 0 1 2 2 0 1 1 0 0 1 1 0 0 1 1 0 0 1 1 0 0 1 1 1 1 1 0 1 1 0 0 1 1 0 0 1 1 1 2 2 0 1 1 1 1 0 0 1 2 2 1 1 0 1q1 1 2 2l2 2 1 1 1 1 1 1 0 1 1 1 1 1 1 1 0 1 1 0 1 2 1 0 0 1 1 1 1 1 0 1 1 0 1 1 1 1 0 1q2 1 4 4l1 1 0 1 1 0 0 1 1 1 1 1q1 1 2 2l0 1 1 1 1 1 1 1 1 1 1 1 0 1 1 1q3 3 5 11l1 2 1 2 1 2 1 1q2 3 4 7l1 2 0 2 1 2 1 2 1 1q1 2 1 4 3 3 6 10 73-11 146 42M684 408q26-26 52 68l2 4q9 15 18 36l2 4 2 4q7 10 14 22 8 3 16 10l0 1 1 0 1 1 1 0 0 1 1 0 1 0 0 1 1 0 0 1 1 0 1 0 0 1 1 0 0 1 1 0 1 0 0 1 1 0 0 1 1 0 1 0 0 1 1 0 0 1 1 0 1 1 1 1 1 1 1 1 0 1 1 0 1 1 0 1 1 1 1 1 0 1q1 0 2 2l1 0 0 1 1 1q1 1 2 2l0 1 1 0 0 1 1 1 1 1 2 2 0 1 1 0 0 1 1 0 0 1q2 1 3 3 2 2 3 4 2 2 3 4l1 1 1 1 1 1q1 1 2 2 2 2 4 6l1 1 2 1 1 1q4 4 8 10l1 2 1 1 1 1q1 1 1 2l1 1q6 5 11 20l1 3 1 2q5 8 10 20l2 3 1 2q72-5 144 42 17 0 35 4l2 0q8-1 16 0M684 408q3 0 5 4 2 0 3 1l1 1 1 1 1 0 2 1 0 1q2 0 3 1l1 1q1 0 2 1l1 1 2 1 1 1 1 1 1 0 1 1 1 0q15 9 29 60 11 17 21 40l2 6q4 6 8 13 31 9 63 56l2 2 2 3q2 2 4 5 3 3 6 6l3 5q3 3 5 6 2 2 4 5l2 2q17 19 33 54 39 5 78 32M684 408q4-2 8 6 4 1 8 4 1 1 2 2 1 1 2 1l1 1 2 1 1 0 0 1 2 1 1 0q8 4 17 34 5 9 11 23 10 15 20 39l2 5q5 8 9 18 9 3 18 11 3 2 5 4l1 0 1 1 1 0 0 1 1 0 1 0 0 1 1 0 0 1 1 0 1 0 0 1 1 0 0 1 1 0 1 0 0 1 1 0 0 1 1 0 1 0 0 1 1 1 0 1 1 0 1 1 0 1 1 0 0 1 1 1 1 1 1 1 1 1 0 1 1 0 0 1 1 0 0 1 1 0 0 1 1 1 1 1 0 1 1 0 0 1 1 0 0 1 1 1 1 1 0 1 1 0 0 1 1 0 0 1 1 0 0 1 1 1 1 0 0 1 0 1 1 0 0 1 1 0 0 1 1 0 0 1 1 1 1 0 0 2 1 0 0 1 1 0 1 1 0 1 1 1 1 1 1 1 2 2 0 1 1 0 0 1 1 0 0 1 1 1 0 1 1 0 0 1 1 0 0 1 1 0 0 1 1 0 0 1 1 1 0 1 1 0 0 1 1 1 1 0 0 1 1 1 1 1 1 1 1 1 0 1 1 0 0 1 1 0 0 1 1 1 1 1 1 1 0 1 1 0 0 1 1 0q2 3 3 8 1 1 2 3l1 2q2 3 4 8l1 3q2 2 3 5l1 2q2 4 4 8l1 2 1 3 1 2q1 2 2 4 36 3 72 34 23-3 47 5 27-7 54 5 12-3 24-1M684 408q18-7 36 37l2 3q5 8 9 19 5 7 9 16l2 5q15 22 30 57 39 12 77 74 28 29 56 74 29 9 59 26 42-6 83 9 19-2 38 1M684 408q2 0 4 3l1 1 1 0 1 0 0 1 1 0 0 1 1 0 1 0 0 1 1 0 0 1 1 0 1 0 0 1 1 0 0 1 1 0 1 0 0 1 1 0 1 1 1 0 0 1 1 0 1 0 0 1 1 0 0 1 1 0 1 0 0 1 1 0 1 1 1 0q1 1 2 5 1 2 3 5 1 2 2 5 1 2 3 5l0 1q1 2 2 5 1 1 2 3l1 1 0 2 1 1q1 1 1 3l1 1 1 2 1 2 1 1 0 2 1 1 1 2 1 1 0 1 1 2 1 2 1 1q0 1 1 3l1 1 0 1 1 2 1 1 1 2 1 2 0 1q1 2 2 4l1 1 0 1 1 2 1 1 0 1 1 2 1 1 0 2 1 1 1 1 0 1 1 2q1 2 2 4 1 1 2 3 1 2 2 5 0 1 1 2l1 2 1 1q0 2 1 3l1 1 1 2 0 1 1 2 1 1 0 2 1 1 1 1 1 1 0 1 1 0 1 0 0 1 1 0 1 1 1 0 0 1 1 0 1 0 0 1 1 0 0 1 1 0 1 0 0 1 1 0 0 1 1 0 1 0 0 1 1 0 0 1 1 0M684 408q17-8 34 32l2 3 1 3 2 3 1 3 2 3 1 3q2 4 4 8l2 3 1 3 1 3 2 2q6 10 12 25 2 3 3 6l2 4 2 3 1 4 2 2 1 3q2 4 4 8 5 6 10 14 33 6 66 61 32 27 64 85 37 5 73 29 43-11 85 8 12 0 23 2M684 408q13-7 25 16 31 16 63 121 3 2 6 4l2 1 1 0 0 1 1 0 0 1 1 0 1 0 0 1 1 0 0 1 1 0 1 0 0 1 1 0 0 1 1 0 1 0 0 1 1 0 1 1 1 0 0 1 1 0 1 0 0 1 1 0 0 1 1 0 1 0 0 1 1 0 0 1 1 0 1 0 0 1 1 0 0 1 1 0 1 0 0 1 1 0 0 1 1 0 1 0 0 1 1 1 1 1 0 1 1 0 0 1 1 0 0 1 1 1 1 1 1 1 0 1 1 0 0 1 1 0 0 1 1 0 0 1 1 1 1 1 1 1 1 1 1 1 0 1M684 408q2 0 4 3l1 1 1 0q2 1 4 3l1 1 2 1q4 0 8 5 20 9 39 70l2 5 3 4q19 20 39 54 56 17 113 136 19 7 38 18l2 2q9 3 17 8 21-4 41 4 20-7 40 4 8-1 16 1 8 0 16 2M684 408q13-6 25 16 28 16 57 111 2 4 4 8 5 4 11 8l1 0 1 1 1 0 0 1 1 0 0 1 1 0 1 0 0 1 1 0 0 1 1 0 1 0 0 1 1 0 1 1 1 0 0 1 1 0 1 0 0 1 1 0 0 1 1 0 1 0 0 1 1 0 0 1 1 0 1 0 0 1 1 0 0 1 1 0 1 0 0 1 1 0 0 1 1 0 1 1 1 0 0 1 1 1 0 1 1 0 0 1 1 0 0 1 1 1 1 1 1 1 0 1 1 0 1 1 0 1 1 0 1 2 1 1 1 1 1 1 0 1 1 0 0 1 1 1 1 1 1 1 0 1 1 0 1 1 0 1 1 0 0 1 1 1 0 1 1 0 0 1 1 0 1 2 1 1 1 1 1 1 1 1 0 1 1 0 0 1 1 0 0 1 1 1 1 1 1 1M684 408q30-20 60 84l3 5q5 9 10 20l2 4 2 4 2 4 1 4 2 3q2 3 3 7l1 0q2 1 3 3 1 0 3 1l1 1 1 0 0 1 1 0 0 1 1 0 1 0 0 1 1 0 0 1 1 0 1 0 0 1 1 0 0 1 1 0 1 0 0 1 1 0 0 1 1 0 1 0 0 1 1 0 1 1 1 0 0 1 1 0 1 0 0 1 1 0 0 1 1 0 1 0 0 1 1 0 0 1 1 0 1 0 0 1 1 0 0 1 1 0 1 0 0 1 1 0 0 1 1 0 1 1 1 0 0 1M684 408q13-15 26 17 39 17 77 130 55 21 110 134 37 8 74 31 6 0 12 1 36-6 72 7 11 0 23 3 3-1 7-1M684 408q13-3 25 16 36 17 72 127 60 28 120 140 79-3 158 38M684 408q6-1 12 8 2 1 3 2l1 1 1 0 1 1 1 0 0 1 1 0 1 1 1 0 0 1 1 0 1 0 0 1 1 0 0 1 1 0q4 2 8 14 1 2 2 5l1 3 1 2 2 2 0 2q1 1 2 2l1 2 1 2 1 2 0 1 1 2q1 1 1 2l1 2q1 2 2 4 1 2 3 5l1 2 1 2 1 2 1 3 1 2 1 2q1 1 1 2l1 2q2 4 5 9l1 2 1 3 1 2 1 2 1 2 1 2 1 2 1 2 1 2 1 2 1 2 1 2 1 2 1 2 1 3 1 2 1 2 1 2 1 2 1 0q1 1 2 2l1 0 0 1 1 0 1 1 1 0 0 1 1 0 1 0 0 1 1 0 0 1 1 0 1 0 0 1 1 0 0 1 1 0 1 0 0 1 1 0 0 1 1 0 1 0 0 1 1 0 0 1 1 0 1 0 0 1 1 0 1 1 1 0 0 1 1 0 1 0 0 1 1 0 0 1M684 408q12-11 24 16 36 13 73 127 135-12 270 177 17-3 34-2M684 408q3-1 6 4 3 1 5 3 1 1 2 2 3 1 5 3l1 0 2 2q1 0 3 1 29 13 59 114 2 4 4 7 7 3 14 9 1 1 3 2l1 1 1 0 0 1 1 0 1 1 1 0 0 1 1 0 1 0 0 1 1 0 0 1 1 0 1 0 0 1 1 0 0 1 1 0 1 0 0 1 1 0 0 1 1 0 1 0 0 1 1 0 0 1 1 0 1 0 0 1 1 1 1 1 0 1 1 1 1 1 1 1q2 1 4 5l1 1 1 0 0 1 1 1 1 1q2 2 4 5 2 2 4 5 3 3 5 6 2 2 5 6l2 2 1 2q6 6 13 14 4 5 8 10l2 2q15 18 30 53 43 3 85 33 39-10 78 8 14-1 28 1M684 408q10-3 19 13 27 11 54 98 8 12 16 26 10 3 20 13 2 1 4 3 2 1 5 3l1 1 1 0 0 1 1 0 0 1 1 0 1 1 1 1 0 1 1 0 1 1 0 1 1 0 0 1 1 1 1 0 0 1 1 1 0 1 1 1 1 0 0 1 1 1 1 0 0 1 1 1 1 1 0 1 1 0 0 1 1 0 0 1 1 1 1 1 1 1 1 2 1 1 1 1 1 1 1 1 0 1 1 0 0 1 1 0 1 2 1 1 2 2 0 1 1 0 0 1 1 0 0 1 1 1 1 1 0 1 1 0 1 2 1 0 0 1 1 1 1 1 1 1 1 1 0 1 1 0 0 1 1 1 1 1 0 1 1 0 0 1 1 0 0 1 1 1 1 0q1 1 1 3l1 0 1 1 0 1 1 0 0 1 1 1 1 1 2 2 0 1 1 0 0 1 1 1q1 1 2 5 1 1 2 2 1 2 2 4l0 2 1 1 1 2 0 1 1 1 1 2 0 1 1 1 1 2 0 1 1 1q1 1 2 4l0 1q1 2 2 4l1 1 1 2 0 1 1 2q1 1 1 3l1 1q1 1 1 3l1 0q38 7 76 35 60-22 121 4M684 408q16-17 31 26 6 9 11 23 13 19 25 49 8 14 16 31l3 6q12 6 25 16l1 1q1 1 3 2l1 1 1 0 0 1 1 0 0 1 1 0 1 0 0 1 1 0 0 1 1 0 1 0 0 1 1 1 1 1 0 1q1 0 2 2l1 1q1 0 2 2l1 1 1 1 0 1 1 1 1 1 1 1q1 1 2 2l1 1 0 1 1 1 1 1q1 1 2 3 2 2 4 4 1 1 2 3l1 1 2 2 1 1 1 2 1 1 1 1 1 1 1 1q2 2 4 5 2 2 3 4 2 2 3 4l2 1 1 2 1 1q4 4 7 9l1 1q13 15 26 50 22 6 44 21 20 4 41 14 19 0 38 4 16-1 32 3 19-2 38 4l3 0M684 408q13-14 26 17 34 14 68 124 7 4 14 9l1 1q2 1 3 2l1 0 1 0 0 1 1 0 0 1 1 0 1 0 0 1 1 0 0 1 1 0 1 0 0 1 1 0 0 1 1 0 1 0 0 1 1 0 0 1 0 1 1 0 1 1 0 1 1 0 0 1 1 1 1 1 1 1 1 1 0 1 1 0 0 1 1 0 0 1 1 1 1 1 0 1 1 0 0 1 1 0 0 1 1 0 0 1 1 1 1 1 1 1 0 1 1 0 0 1 1 0 0 1 1 0 0 1 1 1 0 1 1 0 1 1 0 1 1 0 0 1 1 1 1 0 0 1 0 1 1 0 1 1 0 1 1 0 0 1 1 1 1 0 0 1 1 1 0 1 1 0 0 1 1 0 0 1 1 1 1 1 1 1 0 1 1 0 0 1 1 0 0 1 1 0 0 1 1 1 1 1 1 1 0 1 1 0 0 1 1 0 0 1 1 0 0 1 1 1 1 1 0 1 1 0 0 1 1 0 0 1 1 0 0 1 1 1 1 1 1 1 0 1 1 0 0 1 1 0 0 1q1 1 2 3l0 1 1 1 0 1 1 1 0 1 1 2 0 1 1 1 1 1 0 1 1 2 1 1 0 2 1 1 1 2q1 1 2 4 2 4 4 8l1 2 1 2q1 2 2 5 2 2 3 5 37 4 74 35 22-3 44 4M684 408q10-9 19 12 35 1 70 125 10 1 20 14l1 0q2 1 4 3l2 1 1 1 1 0 0 1 1 0 1 0 0 1 1 0 0 1 1 0 1 1 1 1 1 1 1 1 1 1 0 1 1 0 0 1q1 1 2 2l1 1 1 2 1 1 1 1 1 1 1 1 1 2 1 0 1 1 0 1 1 1 1 1 1 1 0 1 1 1 1 0 1 2 1 1 1 1 0 1 2 2 1 1 1 1 1 1 0 1 1 1 1 1 1 1q1 1 2 3l1 1 1 0 0 1q2 2 4 4l1 1 0 1q3 2 5 5 1 2 2 3l1 1 1 1 1 1 0 1 1 1 1 1 0 1 2 1 0 1 1 0 0 1q3 2 5 9 3 4 6 11 3 6 6 13 2 3 3 7 1 2 3 5 1 2 2 4 38 9 76 35l3 1q47-11 94 9 5 0 10 1 7 0 14 1M684 408q7-5 14 9l1 1 1 0q3 1 6 4l2 2 1 0 1 1q11 6 21 40l1 4q4 6 8 14 8 13 17 34 7 12 14 27 3 2 7 5 7 3 14 9 2 1 5 3l2 1 0 1 1 0 1 0 0 1 1 0 0 1 1 0 1 0 0 1 1 0 0 1 1 0 1 0 0 1 1 1 1 1 0 1 1 0 0 1 1 0 0 1 1 1 1 1 1 1 1 1 0 1 1 0 0 1 1 0 0 1 1 0 0 1 1 1 1 1 0 1 1 0 0 1 1 0 0 1 1 0 0 1 1 1 1 1 0 1 1 0 1 2 1 1 1 1 0 1 1 0 0 1 1 0 0 1 1 0 0 1 1 1 1 0 0 1 1 2 1 0 0 1 1 0 0 1 1 0 0 1 1 0 0 1 1 1 0 1 1 0 1 2 1 1 1 1 1 1 1 1 1 1 0 1 1 1 1 1 1 1 1 1 1 1 0 1 1 1 1 1 1 1 1 1 1 1 0 1 1 1 1 1 1 1 1 1 1 1 0 1 1 0 0 1 1 0q2 3 4 9 1 2 3 6l1 2 1 1 0 2 1 2 1 1 1 2 1 1 0 2q2 2 3 5 2 4 4 9l1 3 1 1 1 2 1 1q38-2 77 35 34-14 69 7 25-10 51-7M684 408q4 1 7 5l2 1 1 1 1 0 0 1 1 0 1 0 0 1 1 0 1 1 1 0 1 1q1 1 3 2l1 1 1 0 1 1 1 0 0 1 1 0 1 1q6 3 12 22 6 9 12 25 5 9 11 21 3 7 7 15l2 4q2 3 4 7l2 4q1 3 2 6l2 3q3 6 7 12 10 2 20 13l1 1 1 0 0 1 1 0 1 0 0 1 1 0 0 1 1 0 1 0 0 1 1 0 0 1 1 0 1 0 0 1 1 0 0 1 1 0 1 0 0 1 1 0 0 1 1 0 1 1 1 1 1 1 0 1 1 0 0 1 1 0 1 2 2 2 1 2 1 1 1 0 0 1 1 0 0 1q1 1 3 3l1 2q1 1 2 2l1 1 1 1 0 1 1 1 1 0 0 1 1 1 2 2 1 2 1 1 1 0q1 2 3 5l1 1 1 1 1 1 1 1 1 1 1 1 0 1 1 1 1 1q2 3 5 6l1 1 1 1 1 1 1 1 0 1 1 1q2 2 3 4l1 1 1 1 1 1q1 1 2 3 10 11 19 38 3 5 6 11 32 2 64 32 6 1 12 3 27-4 53 6 12-1 24 2 11-1 21 2 7 0 14 2 3 0 6 0M684 408q7-1 13 9 4 1 7 4 3 2 6 4 23 14 46 91l3 6q5 10 11 21 73 37 147 156 30 7 59 21 54-8 107 11M684 408q28-14 56 75l2 5 3 5q14 22 28 52 74 25 149 156 28 6 55 20 42-7 83 8 12-2 25-1M684 408q2-1 4 3l2 1 1 1 1 1 2 0 0 1 1 0 1 1 1 0 1 1 1 1 1 0 0 1 1 0 1 1 1 1 1 0 1 1 1 0 1 1 1 0 0 1 1 0 1 1q4 2 8 16 2 2 4 6 1 3 3 7 1 2 3 6 4 7 9 17 4 8 8 17 13 19 25 50 112-8 224 178 38-6 76 8M684 408q20-24 39 43 21 27 42 83 3 5 6 10 68 13 137 150 28 8 55 25 31-3 62 6 18-1 35 4 13-1 25 1M684 408q3 1 6 4 1 1 2 1l1 1 1 1 1 0 0 1 1 0 1 0 0 1 1 0 1 1 1 0 0 1 1 0 1 1 1 0 0 1 1 0 1 0 0 1 1 0 0 1 1 0 1 0 0 1 1 0 0 1 1 0 1 0q1 1 2 4l0 2 1 1 1 1 1 2 0 1 1 1 0 2 1 1 1 1q1 2 2 5 1 1 2 3l0 2 1 1 1 2 1 1 1 2 0 1 1 2 1 1 0 2 1 1 1 1 0 1 1 2 1 2 1 1q1 2 2 5 1 1 2 3 1 3 3 7l1 3 2 2 1 2q0 2 1 4l1 2q1 1 2 3l1 2q1 2 2 4 1 1 1 3l1 2q2 3 4 7l1 2 1 3q3 3 5 8 1 3 3 6l1 3 1 2 1 0 1 1 1 0 0 1 1 0 1 0 0 1 1 0 0 1 1 0 1 0 0 1 1 0 0 1 1 0 1 0 0 1 1 0 0 1 1 0 1 0 0 1 1 0 0 1 1 0 1 0 0 1 1 0 0 1 1 0 1 0 0 1 1 0M684 408q4-1 7 5 1 0 2 1l1 1 1 1 1 0 1 0 0 1 1 0 1 1 2 1 2 1 0 1 1 0q1 1 2 2 2 0 3 1l1 1 1 0q6 4 13 26 10 14 20 40l2 4 2 4q9 16 19 38 2 4 4 7 8 3 15 10l1 1 1 0 1 1 1 0 0 1 1 0 1 1 1 0 0 1 1 0 1 1 1 0 0 1 1 0 1 0 0 1 1 0 0 1 1 0 1 0 0 1 1 0 0 1 1 0 1 0 0 1 1 0 0 1 1 0 1 0 0 1 1 1 1 1 0 1 1 0 0 1 1 0 0 1 1 0 0 1 1 0 0 1 1 1 1 1 0 1 1 0 0 1 1 1 1 1q1 1 2 2l0 1 1 0q1 2 3 4l1 1 0 1 1 1 1 1 1 0 0 1 1 1q1 1 2 3l1 0 0 1 1 1 1 1 1 1 1 1 0 1 1 1 1 0 0 1 1 1q2 2 4 5l1 0 0 1q1 1 2 2l1 1 0 1 1 1q2 2 4 5l1 1 1 1 1 1q2 2 4 4 1 2 2 4l2 2q10 9 19 38 1 2 2 5l2 3 2 3q28 7 57 28 16 3 32 9 19-2 39 3 25-4 50 6 8 0 15 1 2 0 4 0M684 408q11-4 21 14 40 10 81 132 55 10 110 135 37 6 73 31 38-7 76 7 20-2 40 2M684 408q13-5 25 16 35 16 70 126 8 3 15 9 5 2 9 6l1 0 0 1 1 0 0 1 1 0 1 0 0 1 1 1 1 1 0 1 1 1 1 0 1 2 1 1 1 1 0 1 1 0 1 1 0 1 1 0 0 1 1 1 1 1 1 1 1 1 0 1 1 1 1 0q0 1 1 2l1 1 1 1 0 1 1 0 0 1 1 1 1 1 0 1 1 0 1 1 1 1 0 1 1 1 1 1 0 1 1 0 1 1 1 1 0 1 1 1 1 1 1 1 1 1 0 1 1 1q1 0 2 2l1 1 1 1 0 1 1 0 0 1 1 1 1 1 1 1 1 1 0 1 1 0 1 1 0 1 1 1 1 1 0 1 1 0 1 1 0 1 1 1 1 1 1 1 1 2 1 0 1 1 0 1 1 0q3 4 6 13 1 2 2 5 3 5 6 11l1 3 1 2q2 3 4 7 2 4 4 8 20 7 39 20 17 5 33 15 27-4 55 5 18-1 35 4 14-1 29 3 3 0 6 0M684 408q2 1 4 3l1 0 0 1 1 0 1 1 1 0 1 1 1 0 0 1 1 0 0 1 1 0 1 1 1 0 0 1 1 0 1 1 1 0 1 1 1 0 0 1 1 0 1 0 0 1 1 0 1 1 1 0 0 1 1 0 1 1q6 3 13 24l1 3 2 3q2 4 4 8 2 4 4 9l2 3q1 4 3 8l2 3 2 4 1 2 2 3 1 3q2 3 4 7l1 4q2 3 4 7l2 3 1 3 2 3q1 2 2 5 3 5 5 11l2 2q3 2 5 4l2 1 1 1 1 0 0 1 1 0 1 0 0 1 1 0 0 1 1 0 1 0 0 1 1 0 0 1 1 0 1 0 0 1 1 0 1 1 1 0 0 1 1 0 1 0 0 1 1 0 0 1 1 0 1 0 0 1 1 0 0 1 1 0 1 0 0 1 1 0 0 1 1 0 1 0 0 1 1 0 0 1M684 408q7-3 13 9 2 1 3 2l2 1 2 1 1 1 1 0 1 1 1 1 1 0 1 1 1 0q14 9 28 56 11 18 22 45l2 5q4 6 8 13 2 1 5 3 2 1 3 3l1 0 1 0 0 1 1 0 0 1 1 0 1 0 0 1 1 0 0 1 1 0 1 0 0 1 1 0 0 1 1 0 1 0 0 1 1 0 1 1 1 0 0 1 1 0 1 0 0 1 1 0 0 1 1 0 1 0 0 1 1 0 0 1 1 0 1 0 0 1 1 0 0 1 1 0 1 0 0 1 1 0 0 1 1 0 1 0 0 1 1 1 1 1 0 1 1 0 1 1 0 1 1 1 1 1 1 1 0 1 1 0 1 1 0 1 1 0 0 1 1 1 1 1 1 1 1 1 1 1M684 408q3-2 6 4 2 1 4 3l2 1 1 0 1 1 1 1 1 0 0 1 1 0 1 1 1 0 0 1q2 0 3 1 1 1 2 2l1 0 1 1q18 11 36 70l2 5 2 5q3 5 6 10 2 4 4 8 5 9 10 20 10 5 21 14 1 1 3 2l1 1 1 0 0 1 1 0 1 0 0 1 1 0 0 1 1 0 1 0 0 1 1 0 0 1 1 0 1 0 0 1 1 0 0 1 1 0 1 0 0 1 1 0 0 1 1 1 1 1 1 1 0 1 1 1 1 1 0 1q2 1 3 2l0 1 1 1 1 1 1 1 1 1 1 1 1 2 1 1 1 1 1 1 1 1 1 2 1 1q1 1 2 3l1 1 2 1 1 2 1 1 1 1 1 1q1 2 2 4l2 1 1 1 1 2 2 2q1 1 2 2l1 2q3 3 6 7 1 1 3 3l1 2 3 3 1 2 2 2q15 17 30 51 36 2 72 32 55-25 111 12M684 408q4-1 7 5l2 1 1 1 1 0 1 1 1 1 1 0 1 1 1 0 0 1 1 0 1 1 1 0 0 1 1 0 1 1 1 0 0 1 1 0 1 0 0 1 1 0 1 1q6 4 13 24l1 3 1 3q2 3 4 6l1 4 2 3q4 7 9 18 4 7 8 15l2 4q3 6 6 12 3 7 6 14 4 6 8 13 14 6 29 19l1 0 0 1 1 0 0 1 1 0 1 0 0 1 1 0 0 1 1 0 1 1 1 1 1 1 1 1 0 1 1 0 0 1 1 0 0 1 1 1q1 1 2 2l0 1 1 0 0 1 1 1 1 1 1 1 1 1 1 1 0 1 1 1 1 1 1 1 1 1 1 1 0 1 1 1 1 1 1 2 1 1 1 1 1 0 1 1 1 1 0 2 1 1 1 0 1 1 1 1 0 1q1 1 2 3l1 1 1 1 1 1 1 1q1 1 2 3l1 1q2 1 3 3l1 1 1 2 1 1 1 1 2 2q1 2 3 4l1 1q1 1 3 3 14 15 28 52 28 3 56 27 11 2 23 7 18-1 36 4 17-2 34 3 19-3 38 4 3 0 7 0M684 408q2 0 3 2l2 1 0 1 1 0 1 1 1 0 0 1 1 0 1 0 0 1 1 0 1 1 1 0 0 1 1 0 0 1 1 0 1 0 0 1 1 0 1 1 1 0 0 1 1 0 1 0 0 1 1 0 0 1 1 0 1 0 0 1 1 0 0 1 1 0 1 0q1 1 2 5 1 1 1 2l1 2 1 1q1 2 2 4l1 2 0 1 1 2 1 1q1 2 1 4l1 1q1 1 1 3l1 1 1 2 1 1 1 2q0 1 1 3 1 1 2 3 1 2 2 4 0 2 1 3l1 2 1 2 1 1 1 2q1 2 2 5 1 1 1 3 2 2 3 5 2 3 4 7 3 5 5 12l2 2 1 3 1 3 2 2q1 2 2 4l1 2 1 2q2 4 4 9l2 3 1 2q20 1 41 30l2 2 1 2 2 1 1 2 2 2q4 4 8 9 1 2 3 5 3 2 5 5 4 4 7 9 2 2 4 4l1 2 2 1 1 2 1 1 1 1q1 2 3 4l1 1 1 2 1 1 1 1 1 1 1 1 0 1 1 1 1 0 1 1q4 5 8 18 2 3 4 6l1 3 1 2q1 2 2 5l1 2 1 2 1 2q1 2 2 5l1 2 1 2 1 0q28 6 57 29 10 2 19 6 18-2 36 4 17-2 33 3 16-1 31 3 9 0 17 2l4 0M684 408q24-22 48 60 17 25 35 69 1 3 3 6 39 12 78 73l2 3 3 4 2 2 2 2 1 2 1 1q2 2 4 5 10 11 20 39l1 4 2 3 2 3q53 1 105 38M684 408q5-2 10 7 4 1 8 5 1 1 2 1l2 1 0 1 1 0 1 0 0 1 1 0 1 1q8 4 15 29 5 9 10 20 3 5 5 10 4 7 8 15 2 4 4 8l2 4 1 4q4 6 8 14 1 3 3 6l1 3 2 3 1 2q3 2 6 4 1 1 3 2l0 1 1 0 1 0 0 1 1 0 0 1 1 0 1 0 0 1 1 0 0 1 1 0 1 0 0 1 1 0 0 1 1 0 1 0 0 1 1 0 1 1 1 0 0 1 1 0 1 0 0 1 1 0 0 1 1 0 1 0 0 1 1 0 0 1 1 0 1 0 0 1 1 0 0 1 1 0 1 0 0 1 1 0 0 1 1 0 1 1 1 1 1 1 0 1 1 0M684 408q11-8 21 14 33 12 66 122 141 0 281 184M684 408q2 0 4 3 1 0 3 2l1 0 0 1 2 1 1 0 0 1 2 1 1 0q1 1 2 2 2 0 3 1 1 1 3 2 2 1 4 3 11 6 22 43 20 24 40 77 59 12 118 140 79-10 159 43M684 408q29-26 57 77 13 22 26 54l3 4 1 1 1 1 1 0 0 1 1 0 1 1 1 0 0 1 1 0 1 0 0 1 1 0 0 1 1 0 1 0 0 1 1 0 0 1 1 0 1 0 0 1 1 0 0 1 1 0 1 0 0 1 1 0 0 1 1 0 1 0 0 1 1 0 1 1 1 0 0 1 1 0 1 0 0 1 1 0 0 1 1 0 1 0 0 1 1 0 0 1 1 0 1 0 0 1 1 0 0 1 1 0 1 0 0 1M684 408q19-16 37 38 3 5 5 11l2 4 2 3q5 8 9 17 10 18 21 43l3 5 3 6q2 5 5 9l3 2 1 1 1 0 0 1 1 0 1 0 0 1 1 0 0 1 1 0 1 0 0 1 1 0 0 1 1 0 1 0 0 1 1 0 0 1 1 0 1 0 0 1 1 0 0 1 1 0 1 0 0 1 1 0 1 1 1 0 0 1 1 0 1 1 1 0 0 1 1 0 1 0 0 1 1 0 0 1 1 0 1 0 0 1 1 0 0 1 1 0 1 0 0 1 1 0 0 1 1 0M684 408l2 1 0 1 1 0 1 1 1 1 1 0 1 1 2 1 1 0q1 1 2 2 1 0 2 1l2 1 1 1q2 1 3 2 19 4 37 64l2 5 2 4 2 5 3 4q11 17 22 42 8 2 16 10 5 3 10 7l1 0 0 1 1 0 1 0 0 1 1 0 0 1 1 0 1 0 0 1 1 0 1 1 1 1 1 0 0 1 0 1 1 0 0 1 1 0 0 1 1 0 0 1 2 1 0 1 1 1 0 1 1 0 1 1 0 1q2 1 3 3l1 1 1 1 1 2q1 1 3 3l1 2 1 1q3 3 7 8l1 1 2 3 1 1q3 3 5 5 3 4 6 8 4 4 8 9 3 4 6 8 16 18 31 52 48 4 96 35 6 0 12 1 32-5 65 7 9-2 18-1M684 408q13-10 25 17 36 11 72 125 4 3 8 6 1 0 2 1l1 1 1 0 0 1 1 0 1 0 0 1 1 0 0 1 1 0 1 0 0 1 1 0 0 1 1 0 1 0 0 1 1 0 0 1 1 0 1 0 0 1 1 0 0 1 1 0 1 0 0 1 1 0 0 1 0 1 1 0 1 1 0 1 1 0 0 1 1 0 0 1 1 1 0 1 1 0 1 2q1 1 2 2 2 2 3 4l1 1 1 1 1 1 1 1q1 2 2 3l1 1q2 2 4 4 3 3 6 7l1 1 0 1 1 1 1 1 1 1 1 1 1 1 0 1 1 1 1 1 0 1 2 1 0 1 1 1 1 1 1 1 1 1q1 1 2 3l1 1 1 1 1 1q1 2 2 3 14 11 27 50 2 3 4 6 81-37 162 43M684 408q7 0 13 9 6 2 12 7 36 17 73 127 8 4 17 11l0 1 1 0 1 0 0 1 1 0 0 1 1 0 1 0 0 1 1 0 0 1 1 0 1 0 0 1 1 1 0 1 1 0 1 1 0 1 1 0 1 2 2 2 1 1 1 1 0 1 1 1 1 1q2 2 3 4l2 1q1 2 3 5 2 1 3 3 3 3 6 7 3 3 6 7l1 2 2 1q2 3 4 5l1 2 1 1q2 2 4 5l1 1 1 2 2 1 1 2 1 2q15 15 30 53 86-47 171 44M684 408q2 0 3 2l1 1 1 0 0 1 1 0 1 1 1 0 0 1 1 0 1 1 1 0 1 1 1 0 0 1 1 0 0 1 1 0 1 0 0 1 1 0 1 1 1 0 1 1 1 0 1 1 0 1 1 0 2 1 1 1 1 0q10 6 20 40 5 10 11 22l2 5 2 4 2 5 3 4q1 3 2 6l3 4q5 10 11 22 1 3 3 6 8 2 17 11l1 1 1 1 1 0 0 1 1 0 1 1 1 0 0 1 1 0 1 0 0 1 1 0 0 1 1 0 1 0 0 1 1 0 0 1 1 0 1 0 0 1 1 0 0 1 1 0 1 0 0 1 1 0 0 1 1 0 1 1 1 0 0 1 1 1 0 1 1 0 0 1 1 0 0 1 1 1 1 0 0 1 1 1 1 1 0 1 1 1 1 1 1 1 1 1 1 1 1 1 1 2 1 1 1 1 1 1 1 1 1 2 1 1 1 1 1 1 1 1 1 2 1 1 1 1 2 2q1 1 2 2l1 2 1 1 1 2 1 1 2 2 2 2 1 2q3 3 6 6l2 3 1 2 2 2q2 2 4 4l1 2q13 14 26 50 40 6 81 35 29-5 58 6 27-4 53 5l4 0M684 408q10-8 19 13l1 0q2 1 4 3 18 9 37 69 18 22 36 58 8 4 17 10l1 1q22 8 44 49l2 2q3 3 6 7l2 2 1 2 2 2 2 2 1 2q18 19 36 58 42 5 84 33 25-2 49 5 29-5 57 1M684 408q19-17 37 37 10 16 20 40 16 24 33 61 57 11 115 139 39 8 78 35M684 408q26-20 52 67 3 6 6 13l2 4 2 3q4 7 8 16l2 4q7 12 15 29 8 4 17 11 1 1 3 2l2 1 1 1 1 0 0 1 1 0 0 1 1 0 1 0 0 1 1 0 0 1 1 0 1 0 0 1 1 0 0 1 1 0 1 0 0 1 1 0 0 1 1 0 1 1 1 1 1 1 0 1 1 0 0 1 1 0 0 1 1 1 1 0 0 1 1 1 1 1 1 1 0 1 1 0 0 1 1 1 1 1 1 1 1 2q1 1 3 3l1 1 1 1 1 1 0 1q1 1 2 3 2 1 3 2 4 4 9 11l1 2q3 2 5 6 1 1 3 3 3 3 7 9 3 2 5 6 15 16 30 52 42-2 84 34 55-24 109-1M684 408q10-8 20 13 20 7 41 72 12 21 25 51 17 2 34 22 51 16 102 127 34 5 69 27 23-1 45 5 27-2 54 5 6 0 11-1M684 408q11-8 21 14 25 9 51 93 8 14 15 29 6 3 11 7l0 1 1 0 1 0 0 1 1 0 0 1 1 0 1 0 0 1 1 0 0 1 1 0 1 0 0 1 1 0 1 1 1 0 0 1 1 0 1 0 0 1 1 0 0 1 1 0 1 0 0 1 1 0 0 1 1 0 1 0 0 1 1 0 0 1 1 0 1 0 0 1 1 0 0 1 1 0 1 0 0 1 1 1 1 1 1 1 0 1 1 0 0 1 1 0 0 1 1 0 0 1 1 1 0 1 1 0 1 1 0 1 1 0 0 1 1 1 1 1 1 1 0 1 1 0 0 1 1 1 1 0 0 1 1 1 1 1 0 1 1 0 0 1 1 1 1 1 1 1 1 1 1 1 0 1 1 1 1 0 0 1 1 1 1 1 0 1M684 408l2 2 1 0 1 1 1 1 1 0 1 1 1 0 1 1 2 1q1 1 3 2l1 1q2 1 3 2l1 0 1 1 1 1 1 0 1 1q13 4 26 46 9 15 17 35 12 18 24 42 39 7 78 75 24 27 49 70 32 7 64 28 30-4 60 6 23-3 46 5 7 0 14 0M684 408l1 1 1 0 0 1 1 0 1 1 1 0 0 1 1 0 2 1 1 1 2 1 0 1 2 1 1 0 1 1 2 1 1 1 2 1q2 1 3 2 2 1 4 2 14 7 29 58 18 24 37 65 79 8 158 159 51 0 102 20M684 408q4 1 8 5 1 1 3 2l1 1 1 1 1 0 1 1 1 0 0 1 1 0 1 1 1 0 1 1 1 1 1 0 0 1 1 0 1 0 0 1 1 0 0 1 1 0 1 0q4 3 8 17 3 4 5 11 8 11 16 31l2 4q2 4 4 7l2 4 2 4q4 8 9 18 3 7 7 15 2 3 4 7 6 3 13 9l1 1 1 0 0 1 1 0 1 0 0 1 1 0 0 1 1 0 1 0 0 1 1 0 1 1 1 0 0 1 1 0 1 0 0 1 1 0 0 1 1 0 1 0 0 1 1 0 0 1 1 0 1 0 0 1 1 0 0 1 1 0 1 0 0 1 1 0 0 1 1 0 1 0 0 1 1 1 1 1 0 1 1 0 0 1 1 0 0 1 1 1 1 1 1 1 1 1 0 1 1 0 0 1 1 1 1 0 0 1 1 1 1 1 0 1 1 1 1 0 0 1 1 1 1 1M684 408l2 1 0 1 1 0 1 1 1 1 1 0 1 1 1 0 0 1 1 0 1 1 1 0 1 1 2 1 1 1 1 0 0 1 1 0 1 1 1 0 0 1 2 0 0 1 1 0 0 1 1 0 1 1 1 0 1 1q4 2 7 13 1 2 3 5l1 2 1 2 1 3 1 2q7 8 14 27 23 22 47 74 27 8 54 52 30 28 61 85 49 6 97 33M684 408l1 1 1 0 0 1 1 0 1 1 1 0 0 1 1 0 1 1 1 0 1 1 1 1 1 1 1 0 1 0 0 1 1 0 0 1 1 0 1 0 0 1 1 0 1 1 1 0 0 1 1 0 1 0 0 1 1 0 1 1 1 0 0 1 1 0 1 1q4 2 7 13l1 2q1 1 1 3 2 2 3 4l1 2 1 2q2 4 5 11 6 10 13 25 1 3 3 6 10 15 21 42 2 4 4 9 6 1 11 7l1 0 0 1 1 0 1 0 0 1 1 0 0 1 1 0 1 0 0 1 1 0 1 1 1 0 0 1 1 0 1 1 1 0 0 1 1 0 1 0 0 1 1 0 0 1 1 0 1 0 0 1 1 0 0 1 1 0 1 0 0 1 1 0 0 1 1 0 1 0 0 1M684 408q7-3 13 9 6 1 11 7 35 14 70 125 65 20 130 145 32 9 65 26 26-1 53 5 29-5 59 0M684 408q7-3 14 9 3 1 5 4l1 0 1 1q2 1 3 2l2 1 1 0q10 6 20 41 6 10 12 23l2 4 2 4 2 4q5 9 11 22l1 3q1 3 3 5 3 6 6 13 5 2 10 6l1 1 1 1 2 0 0 1 1 0 0 1 1 0 1 0 0 1 1 0 0 1 1 0 1 0 0 1 1 0 1 1 1 0 0 1 1 0 1 1 1 0 0 1 1 0 1 0 0 1 1 0 0 1 1 0 1 0 0 1 1 0 0 1 1 0 1 0 0 1 1 0 0 1 1 0 1 0 0 1 1 0 0 1 1 1 0 1 1 0 1 2 1 0 0 1 1 1 1 1q1 1 2 3l1 1q1 0 2 2l1 1 0 1 1 0q1 1 2 3l1 1 0 1 1 0q2 2 4 5l1 1 0 1 1 1 1 0 1 1 0 1q1 1 2 3l1 0 1 1 0 1 1 1q1 1 2 2l1 2 1 0 0 1 1 1q1 1 3 3l0 1 1 1q3 2 6 6l1 1 1 2q12 10 25 44 4 7 8 16 34 0 67 32 5 1 10 2 17-1 34 4 21-4 43 4 17-2 33 3 5 0 10 1M684 408q2 0 3 2l1 1 1 0 0 1 1 0 1 0 0 1 1 0 0 1 1 0 1 0 0 1 1 0 0 1 1 0 1 0 0 1 1 0 1 1 1 0 0 1 1 0 1 1 1 0 0 1 1 0 1 0 0 1 1 0 0 1 1 0 1 1 1 0 1 1 1 0q2 1 4 9l1 2 1 1q1 2 2 4 2 4 4 9l1 2q3 4 6 11l1 2q3 6 6 14 4 6 8 16l2 2 1 3q8 11 15 30l2 3q3 5 6 11 67-4 134 149 25 8 49 24l4 2q30-7 60 6 18-3 36 3 14-2 27 3l4 0M684 408q8-5 15 10 3 1 6 4l1 0 2 1 0 1 1 0q9 3 18 33 3 5 5 11 6 9 11 22l2 3 1 3 1 3 2 2q4 7 8 18 9 11 18 28 4 2 8 5l1 1 1 0 0 1 1 0 1 0 0 1 1 0 0 1 1 0 1 0 0 1 1 0 1 1 1 0 0 1 1 0 1 0 0 1 1 0 0 1 1 0 1 0 0 1 1 0 0 1 1 0 1 0 0 1 1 0 0 1 1 0 1 0 0 1 1 0 0 1 1 0 1 0 0 1 1 0 0 1 1 1 1 1 0 1 1 0 0 1 1 0 0 1 1 1 1 1 1 1 0 1 1 0 0 1 1 0 0 1 1 1 1 1 0 1 1 0 0 1 1 0 0 1 1 0 0 1 1 1 1 1 1 1 0 1 2 1 0 1 1 0 0 1 1 1 1 1 1 1q1 1 1 2 2 1 3 3l1 1q1 1 3 4 2 1 3 4 2 2 4 4l0 1q2 1 4 4l1 1q1 2 2 3l2 2 1 1 0 1 2 1M684 408q4 1 8 6 4 1 8 5 4 1 9 5 34 16 68 124 34 8 68 65 6 7 12 15 24 26 47 64 74-5 148 36M684 408q3 0 6 4l1 1 1 0 0 1 1 0 2 1 1 1 2 1 0 1 1 0 1 1 1 0 2 1 0 1 1 0 1 1 1 0 0 1q2 0 3 1 12 6 24 46l2 4q2 3 4 8l2 4q12 18 24 47 4 6 9 13 15 5 30 20 21 10 42 49 32 24 63 80 30 6 60 25 40-13 80 8 18-2 36 3M684 408q4 0 7 5l2 1 1 0 0 1 1 0 1 1q2 1 4 2l0 1 2 1 1 0 1 1 1 1 1 0 0 1 1 0 1 1 2 1 1 0q6 4 13 27 11 15 22 43 26 24 53 68l2 1 1 1 2 0 0 1 1 0 0 1 1 0 1 0 0 1 1 0 0 1 1 1 0 1 1 0q1 1 3 4l0 1 1 0 1 1 1 1 0 1 1 1 1 1 1 1q3 3 6 7l1 1q3 3 5 7l1 1q2 1 3 3 4 4 8 10l1 1 2 2 1 2q2 1 4 4l1 1 1 2 1 1 1 2 2 1q1 2 3 4l1 1q1 2 3 3 11 13 22 45l2 4q28 3 56 28 17 2 33 9 7 0 15 1l2 0q11 0 22 3 10-1 19 1 17-2 34 4M684 408q9-6 17 11 4 2 9 6 32 19 64 121 27 1 54 47 9 9 19 22l3 4q2 3 5 6 22 25 45 65 37 7 74 30 42-6 84 9 14-2 27 0M684 408q5-3 10 7 3 1 7 4 1 1 2 2l1 0q2 1 3 2l1 1 1 0q17 9 35 67 13 22 27 53 41 16 82 79 26 28 52 70 39 6 78 28 36-4 72 7 15-2 30-1M684 408l2 1 0 1 1 0q2 1 3 2 4 0 8 5 4 2 7 5 3 1 5 3 15 9 29 57 3 6 6 13 15 20 30 52 24-3 48 40 12 12 24 29 26 26 52 74 33 5 66 29 21-1 42 5 39-11 77 7l1 0M684 408q3 1 5 3l2 1 0 1 1 0 0 1 1 0 1 0 0 1 1 0 0 1 1 0 1 0 0 1 1 0 0 1 1 0 1 0 0 1 1 0 1 0 0 1 1 0 0 1 1 0 1 0 0 1 1 0 0 1 1 0 1 0 0 1 1 0 1 1 1 0q0 1 1 3 1 1 1 3l1 1 0 1 1 1q1 2 2 3 1 2 2 5l1 2 1 2 1 1 1 2 1 2 1 2q1 2 3 6 0 1 1 3 2 2 3 6l1 2 1 2 1 2 1 2 1 1 1 2q1 2 2 5 1 2 3 5l1 2 1 2q1 3 3 7l1 2 1 2 1 1q1 2 1 4l1 1q1 2 2 4 2 3 3 6l1 2 1 2 1 1 1 2 0 1 1 2q1 1 2 3l0 1 1 2q1 1 2 3l0 1q1 2 2 3l0 1 1 0 1 1 1 0 0 1 1 0 1 0 0 1 1 0 0 1 1 0 1 0 0 1 1 0 0 1 1 0 1 0 0 1 1 0 0 1 1 0 1 0 0 1 1 0 0 1 1 0M684 408q17-9 33 30l2 3 1 4 2 3q18 24 36 72 7 12 15 25 7 5 15 10 6 3 12 8 3 1 6 4 2 1 4 4l1 1 0 1 1 1 1 0q1 2 2 3l0 1 2 2q1 1 2 2l1 1 1 1 1 1 1 2 1 1 1 1 1 1 1 1 1 1 1 2 1 1 1 1 1 1 1 2 1 1q1 1 3 3l1 2 1 1 1 2 1 1q4 3 8 9l1 1 2 3 1 1q3 3 6 7 18 17 37 58 18 5 36 18 13 5 26 13 32-8 65 6 20-3 39 4 5 0 10 1 6-1 13 0M684 408q4 1 8 5 1 1 3 2 3 1 6 4 2 1 4 2 1 1 2 2l1 1 1 0 1 1q12 5 24 47 3 6 7 13 22 23 44 68 116 8 233 172 33-6 67 3M684 408l2 1 0 1 1 0 1 1 1 0 0 1 1 0 1 0 0 1 1 0 0 1 1 0 1 0 0 1 1 0 0 1 1 0 1 0 0 1 1 0 1 1 1 0 0 1 1 0 1 1 1 0 0 1 1 0 1 1 1 0 0 1 1 0 1 0 0 1 1 0 0 1 1 0 1 0q1 1 2 6l1 1 1 2 1 1q0 1 1 3 2 3 3 7 1 1 2 4l1 1q2 3 3 6l1 2q2 3 4 7 1 2 1 4l2 2q1 2 2 4l1 2 1 3 1 2q1 1 1 3l2 2 1 2q1 2 1 4l2 2 0 2 1 2 1 1 1 2q1 1 2 3l0 2 1 2 1 2 1 1 1 2q1 1 2 3l0 2q1 1 2 3 1 1 1 2l1 2q2 3 3 6 1 2 2 4l1 2 1 2q1 2 2 4l1 0 1 1 1 0 0 1 1 0 1 1 1 0 0 1 1 0 1 0 0 1 1 0 0 1 1 0 1 0 0 1 1 0 0 1 1 0 1 0 0 1 1 0 0 1 1 0 1 0 0 1 1 0 1 1M684 408q7-3 14 9 3 1 6 4l1 1q2 1 4 2l1 1q18 11 37 72 7 13 14 29 5 8 9 18 17-1 33 21 4 1 7 7l1 1q1 1 2 2l1 1 1 1 1 1q1 1 1 2l1 1q1 1 2 2l1 1 1 1 1 2 1 1 1 2q2 1 3 3 2 2 3 4l1 1 1 1 1 1 1 1q2 2 3 4l1 1 2 2q1 2 3 4l1 2 1 1 2 1 1 2q2 2 4 5l2 2q1 1 3 3l1 2q15 15 30 55 25 8 50 25 14 3 27 9 28-3 56 6 16-1 32 3 16-1 31 2M684 408q40-18 79 121l3 7q2 4 4 8 12 3 23 15l2 1q2 1 4 2l1 1 1 0 0 1 1 0 0 1 1 0 1 0 0 1 1 0 0 1 1 0 1 0 0 1 1 1 0 1 1 0 0 1 1 0 0 1 1 0 0 1 1 0 0 1 1 1 1 1 0 1 2 2 2 2 1 1 1 1 0 1 1 0 0 1 1 0 1 2 1 1 2 2 0 1 1 0 0 1 1 1q1 1 2 2l1 1q1 1 2 3l1 1 1 1q2 2 4 5l1 1 1 1 0 1 1 1 1 0 0 1 1 1q1 1 2 3l1 0 0 1 1 1 1 1 1 1q1 1 2 2 1 1 2 3l1 1 1 1q1 1 3 3l0 1 1 1q1 1 3 3 6 7 12 25l2 3q2 3 4 8 2 3 4 8l1 2 1 2 1 2q40 7 81 36 29-5 59 6 19-1 37 3l2 1 2 0 2 0 1 0M684 408q4 0 7 5 3 1 6 4 7 1 13 8 32 15 64 121 2 1 4 2l0 1 1 0 0 1 1 0 1 0 0 1 1 0 0 1 1 0 1 0 0 1 1 0 0 1 1 0 1 0 0 1 1 0 0 1 1 0 1 0 0 1 1 0 1 0 0 1 1 0 0 1 1 0 1 0 0 1 1 0 0 1 1 0 1 0 0 1 1 0 0 1 1 0 1 0 0 1 1 0 0 1 1 0 1 0 0 1 1 0 0 1 1 0 1 0 0 1 1 1 1 1 1 2 1 0q2 2 5 6 1 1 2 3 2 2 3 3l1 1 0 1 1 1 1 1 1 1q1 1 2 3l1 0 0 1 1 1 1 1 1 1 0 1q2 2 4 4 6 5 11 14l1 1 2 2 1 1 1 2 1 1q3 2 5 5l1 2M684 408q9-8 17 11 24 4 48 82 10 19 21 43 112 12 224 178 45-8 90 9l1 0M684 408q34-16 68 101 14 18 27 40l3 2 1 1 1 0 0 1 1 0 0 1 1 0 1 0 0 1 1 0 0 1 1 0 1 0 0 1 1 0 1 1 1 0 0 1 1 0 1 0 0 1 1 0 0 1 1 0 1 0 0 1 1 0 0 1 1 0 1 0 0 1 1 0 0 1 1 0 1 0 0 1 1 0 0 1 1 0 1 0 0 1 1 1 1 1 1 1 1 1 0 1 1 0 0 1 1 1 1 1 1 1 0 1 1 0 0 1 1 0 0 1 1 1q1 1 2 2l0 1 1 1q1 1 2 2l1 1 1 1 1 1 0 1 2 1 0 1 1 1 1 1q2 2 4 5l1 1 1 2q2 1 3 3l1 1q2 2 3 4l1 1 1 2q3 2 5 5l1 2 2 2 1 1q2 2 3 4l2 1 1 2q14 15 28 53 37 8 74 35M684 408q2 0 4 3l1 0 0 1 1 0 1 1 1 0 0 1 1 0 1 1 1 0 1 1 1 0 0 1 1 0 1 1 1 0 0 1 1 0 1 1 1 0 0 1 1 0 1 0 0 1 1 0 0 1 1 0 1 0 0 1 1 0 0 1 1 0 1 0q4 3 8 17 1 2 2 4l1 3 2 2 1 3 1 2 1 3 2 3 1 2 1 2 1 2 1 2 1 3 2 2 1 2 1 2 1 2 1 2q0 1 1 2l1 2 1 3q1 2 3 6l1 2 1 2 1 2 1 2 1 3 2 2 1 2 1 3q1 1 2 3 2 4 4 9l2 3q2 5 5 10l1 4 1 0q4 2 8 6 4 1 8 5l1 0 0 1 1 0 0 1 1 0 1 0 0 1 1 0 1 1 1 0 0 1 1 0 1 0 0 1 1 0 0 1 1 0 1 0 0 1 1 0 0 1 1 0 1 0 0 1 1 0 0 1 1 0 1 0 0 1 1 0 0 1 1 0 1 0 0 1 1 1 0 1 1 0 0 1 1 0M684 408q5-2 10 7 7 1 13 8 32 10 64 121 39 10 78 74l3 3 2 3q26 27 53 70 87-25 174 37M684 408l3 2 1 1 1 0 0 1 1 0 1 1 1 0 0 1 1 0 1 0 0 1 1 0 0 1 1 0 1 0 0 1 1 0 1 1 1 0 0 1 1 0 1 1 1 0 0 1 1 0 1 0 0 1 1 0 0 1 1 0 1 0 0 1 1 0 1 1 1 0q1 1 2 5l1 1 0 1 1 1q0 1 1 2l0 2 1 1 1 1 0 1 1 1 0 1 1 1 0 2 1 1q1 1 1 2l1 1 0 2 1 2q1 1 2 3l1 1 1 2 0 1 1 2 1 1 1 2 0 1 1 2 1 1 0 2q1 1 2 3l1 1 1 2 0 2q1 1 2 2l0 2 1 1 1 2 1 1 1 2q1 2 1 4l1 2q3 4 6 12 2 2 3 4 2 4 4 8l1 3 1 2 1 2 1 2 1 1 1 2 0 2 1 1 1 2 1 1 0 1q2 2 3 6 2 0 4 2l1 1 1 0 0 1 1 0 1 0 0 1 1 0 0 1 1 0 1 0 0 1 1 0 0 1 1 0 1 0 0 1 1 0 0 1 1 0 1 0 0 1 1 0 0 1 1 0 1 0 0 1 1 0M684 408q2 1 3 2l1 1 1 0 0 1 1 0 1 1 1 0 0 1 1 0 1 0 0 1 1 0 0 1 1 0 1 0 0 1 1 0 1 1 1 0 0 1 1 0 1 1 1 0 0 1 1 0 1 0 0 1 1 0 1 1 1 0 0 1 1 0 1 1 1 0q1 1 2 6l1 1 1 1 0 1 1 1 0 1 1 1 0 2 1 1 1 1 0 1 1 2 1 1 0 1 1 2 1 1 0 1 1 1 0 2 1 1 1 1 0 2 1 1 1 1 0 1 1 1 0 1 1 2 1 1 0 1 1 1 0 2q1 1 2 2 1 2 1 4l1 1 1 2 1 1 0 2 1 1 1 1 1 2 0 2 1 1 1 1 0 2 1 1 1 2 1 1 1 2 1 2 0 1 1 2 1 1 1 2 0 1 1 2 1 1 0 2 1 1 1 2 1 1 1 2 1 2 0 2q1 1 2 3l1 1 1 2 0 1 1 2 1 1q0 1 1 3l1 1 0 2 1 1q1 2 2 3 0 1 1 2 2 1 4 3l1 1 1 0 0 1 1 0 1 0 0 1 1 0 0 1 1 0 1 0 0 1 1 0 0 1 1 0 1 0 0 1 1 0 0 1 1 0 1 0 0 1 1 0 0 1 1 0 1 0M684 408q14-6 27 17 37 13 74 128 6 3 12 8 2 1 3 2l2 1 0 1 1 0 1 0 0 1 1 0 0 1 1 0 1 1 1 1 0 1 1 0 0 1 1 0 0 1 1 0 0 1 1 1 1 1 1 1 0 1 1 0 0 1 1 0 0 1 2 2 1 1 0 1 1 0 1 1 0 1 1 0 0 1 1 0 0 1 1 1 1 1 1 1 0 1 1 1 1 1q1 1 2 2l1 1 0 1 1 0 0 1 1 1 1 1q1 1 2 2l1 1 0 1 1 1 1 1 1 1 0 1 1 0 1 2 1 0 0 1 1 1 1 1 1 2 1 0 0 1 1 1 1 1 1 1 1 1 0 1 1 0 1 2 1 0 1 2 1 1 1 1 0 1 1 1 1 0 1 2q1 1 2 3l1 1 1 0q2 3 4 9l1 2 1 1 0 2 1 1q3 4 5 11 4 6 8 15l1 3 1 2 1 3 1 0q47-13 94 37 51-16 103 10M684 408q3 0 6 4 1 1 3 2l1 1 1 1 2 1 1 0 0 1 1 0 1 0 0 1 1 0 1 1 1 0 0 1 1 0 1 1 1 0 1 1 1 0 0 1 1 0 1 1 1 0q7 5 15 30 7 11 14 28l2 4q2 4 4 9l2 3 1 4q4 6 7 13l2 4 2 3 1 3 2 4q4 6 8 14 2 1 3 2l2 1 0 1 1 0 1 0 0 1 1 0 0 1 1 0 1 0 0 1 1 0 0 1 1 0 1 0 0 1 1 0 0 1 1 0 1 0 0 1 1 0 1 1 1 0 0 1 1 0 1 0 0 1 1 0 0 1 1 0 1 0 0 1 1 0 0 1 1 0 1 0 0 1 1 0 0 1 1 0 1 0 0 1 1 0 0 1 1 0M684 408q2-1 4 3l2 1 2 1q1 1 3 2l1 1 1 0 1 1 2 1 0 1 1 0 1 1 1 0 0 1 1 0 1 1 1 0 0 1 1 0 1 1 1 1q6 2 12 20l1 3q3 5 6 11 7 12 14 30l3 4q10 16 20 41l2 5 3 4q6 3 13 9l1 0 0 1 1 0 0 1 1 0 1 0 0 1 1 0 1 1 1 0 0 1 1 0 1 0 0 1 1 0 0 1 1 0 1 0 0 1 1 0 0 1 1 0 1 0 0 1 1 0 0 1 1 0 1 0 0 1 1 0 0 1 1 0 1 0 0 1 1 0 0 1 1 0 1 1 1 1 0 1 1 0 0 1 1 0 0 1 1 0 0 1 1 1 1 1 1 1 1 1 0 1 2 1 0 1 1 1 2 2 0 1 1 1 1 1 1 1 1 1 1 1 0 1 1 0 1 1 0 1 1 1 1 2 1 0 1 1 0 1 1 0 1 2q1 1 2 3l1 0M684 408l2 2 1 0 1 1 1 0 0 1 1 0 1 0 0 1 1 0 0 1 1 0 1 0 0 1 1 0 0 1 1 0 1 0 0 1 1 0 1 1 1 0 0 1 1 0 1 0 0 1 1 0 0 1 1 0 1 0 0 1 1 0 0 1 1 0 1 0 0 1 1 0 0 1 1 0 1 0q1 1 2 5 1 1 1 2l1 2 1 1 0 2 1 1 1 1q0 1 1 3 1 1 1 2 1 2 2 4 1 1 2 3 0 1 1 3l1 2q1 2 2 5l1 1 1 1 0 2 1 1 1 1q0 1 1 3l1 1q0 2 1 3 1 2 2 4 1 1 2 3l0 1q1 2 2 3l0 2q1 1 2 3l1 2 1 1 0 2 1 1q1 2 2 4l1 2 1 2 1 1 0 1 1 2q1 1 2 3l0 2 1 1 1 1 0 2 1 1 1 2 0 1 1 1 1 1 0 1 1 2 1 1 0 1 1 1 1 2 0 2 1 1 1 1 0 1 1 2 1 1 0 2 1 1 1 1 0 1 1 0 0 1 1 0 1 0 0 1 1 0 1 0 0 1 1 0 0 1 1 0 1 0 0 1 1 0 0 1 1 0M684 408q7-3 14 9 4 2 7 5l1 0q28 14 56 105 5 9 11 19 110 0 219 176 17-1 35 4 29-7 58 5M684 408q8-6 15 10 6 2 11 7 33 13 65 122 13 3 25 16 45 14 91 123 39 4 78 34 31-6 61 6 28-7 55 3M684 408q9-2 17 11 2 1 5 3l1 1 1 0 0 1 1 0 1 1q10 6 20 39 4 6 7 14l2 3q1 3 2 5l2 3 1 3 1 3 2 2q1 3 3 7 3 5 6 13 1 1 2 3 2 3 3 6l1 2 1 2 1 2 1 1q0 1 1 3l1 1 1 2 0 1 1 2 1 1 1 1 1 1 1 0 0 1 1 0 1 0 0 1 1 0 0 1 1 0 1 0 0 1 1 0 0 1 1 0 1 0 0 1 1 0 0 1 1 0 1 0 0 1 1 0 0 1 1 0 1 0 0 1 1 0 1 1 1 0 0 1 1 0 1 1 1 0 0 1 1 0 1 0 0 1 1 0 0 1 1 0 1 0 0 1 1 0 0 1 1 0M684 408l2 2 1 0 1 1 1 1 1 0 1 0 0 1 1 0 1 1 1 0 0 1 1 0 0 1 1 0 1 0 0 1 1 0 1 1 2 1 1 1 2 1 2 1q1 1 2 2l1 0q12 4 25 47 9 15 18 38l3 4 2 5q12 14 25 33 36 15 73 74 35 29 69 77 29 6 58 19 34-2 67 7 18-4 36-2M684 408l1 1 1 0 0 1 1 0 1 1 1 0 1 1 1 1 2 1 1 1q2 0 4 2 1 0 2 1 2 1 4 3 2 1 4 2 18 10 36 69l2 4q15 20 29 51 3 1 5 3l1 0 0 1 1 0 0 1 1 0 1 0 0 1 1 0 0 1 1 0 1 0 0 1 1 0 1 1 1 0 0 1 1 0 1 1 1 0 0 1 1 0 1 0 0 1 1 0 0 1 1 0 1 0 0 1 1 0 0 1 1 0 1 0 0 1 1 0 0 1 1 0 1 0 0 1 1 0 0 1 1 0 1 1 1 1 1 1 0 1q1 0 2 2l1 0 0 1q1 1 2 2l1 1 0 1q4 2 8 9l1 1 1 1M684 408q5-4 9 6 3 1 6 4 2 1 4 3 2 0 5 2 14 6 29 54 26 24 53 79 59 24 119 139 53 0 106 29M684 408q6-4 12 8 5 2 9 6 2 1 3 2 1 0 3 1 17 10 34 69 8 13 15 30 5 9 10 20 2 1 4 2l1 1 1 0 0 1 1 0 1 0 0 1 1 0 0 1 1 0 1 0 0 1 1 0 0 1 1 0 1 0 0 1 1 0 0 1 1 0 1 0 0 1 1 0 0 1 1 0 1 0 0 1 1 0 1 1 1 0 0 1 1 0 1 1 1 0 0 1 1 0 1 0 0 1 1 0 0 1 1 0 1 0 0 1 1 0 0 1 1 0 1 0 0 1 1 0M946 719Q1015 617 1085 617M1000 726Q1050 630 1085 613M1030 729Q1062 668 1085 647M1035 730Q1064 668 1085 659" fill="none" stroke="#008000" stroke-width="1"/><path d="M825.5 597.5L845.5 581.5" stroke="#000080" stroke-width="1"/><text x="803" y="606.500" font-family="Liberation Sans,sans-serif" font-size="11" fill="#000">No.1</text></svg>
<div class="a ln" style="left:69px;top:664px;width:315px;height:1px"></div>
<div class="a ln" style="left:69px;top:700px;width:315px;height:1px"></div>
<div class="a ln" style="left:69px;top:724px;width:315px;height:1px"></div>
<div class="a ln" style="left:69px;top:664px;width:1px;height:61px"></div>
<div class="a ln" style="left:105px;top:664px;width:1px;height:61px"></div>
<div class="a ln" style="left:178px;top:664px;width:1px;height:61px"></div>
<div class="a ln" style="left:383px;top:664px;width:1px;height:61px"></div>
<div class="a doc" style="left:81px;top:677px;"><span class="q">No.</span></div>
<div class="a doc" style="left:110px;top:671px;">照査点位置</div>
<div class="a doc" style="left:122px;top:683px;"><span class="q">X (m)</span></div>
<div class="a doc" style="left:237px;top:677px;">照査線傾斜角</div>
<div class="a doc" style="left:87px;top:707px;"><span class="q">1</span></div>
<div class="a doc" style="left:106px;top:707px;width:66px;text-align:right"><span class="q">12.988</span></div>
<div id="t34" class="a f doc" style="left:183px;top:707px;transform:scaleX(1.0050);">斜面法線方向<span class="q">(</span>地表面に対して直角<span class="q">)</span></div>
<div class="a h" style="left:63px;top:756px;"><span class="q">1.8 </span>分析設定</div>
<div class="a ln" style="left:69px;top:780px;width:460px;height:1px"></div>
<div class="a ln" style="left:69px;top:804px;width:460px;height:1px"></div>
<div class="a ln" style="left:69px;top:828px;width:460px;height:1px"></div>
<div class="a ln" style="left:69px;top:875px;width:460px;height:1px"></div>
<div class="a ln" style="left:69px;top:899px;width:460px;height:1px"></div>
<div class="a ln" style="left:69px;top:947px;width:460px;height:1px"></div>
<div class="a ln" style="left:166px;top:852px;width:363px;height:1px"></div>
<div class="a ln" style="left:166px;top:923px;width:363px;height:1px"></div>
<div class="a ln" style="left:69px;top:780px;width:1px;height:168px"></div>
<div class="a ln" style="left:250px;top:780px;width:1px;height:168px"></div>
<div class="a ln" style="left:528px;top:780px;width:1px;height:168px"></div>
<div class="a ln" style="left:166px;top:828px;width:1px;height:48px"></div>
<div class="a ln" style="left:166px;top:899px;width:1px;height:49px"></div>
<div class="a doc" style="left:75px;top:787px;">照査点での跳躍量の取り方</div>
<div class="a doc" style="left:256px;top:787px;">照査線方向の長さ</div>
<div class="a doc" style="left:75px;top:811px;">分析対象</div>
<div class="a doc" style="left:256px;top:811px;">全ての落石運動データ</div>
<div class="a doc" style="left:75px;top:847px;">統計処理</div>
<div class="a doc" style="left:172px;top:835px;">理論分布</div>
<div id="t42" class="a f doc" style="left:256px;top:835px;transform:scaleX(1.0050);">自動設定<span class="q">(</span>正規性検定結果に基づく<span class="q">)</span></div>
<div class="a doc" style="left:172px;top:859px;">信頼度</div>
<div class="a doc" style="left:256px;top:859px;"><span class="q">90%</span></div>
<div class="a doc" style="left:75px;top:882px;">ヒストグラム分割数</div>
<div id="t46" class="a f doc" style="left:256px;top:882px;transform:scaleX(1.0037);">自動設定<span class="q">(</span>スタージェスの公式<span class="q">k=1+log2N</span>による<span class="q">)</span></div>
<div class="a doc" style="left:75px;top:918px;">正規性検定条件</div>
<div class="a doc" style="left:172px;top:906px;">検定手法</div>
<div class="a doc" style="left:256px;top:906px;">全ての検定を行う</div>
<div id="t50" class="a f doc" style="left:172px;top:930px;transform:scaleX(1.0709);">有意水準<span class="q">(</span>α<span class="q">)</span></div>
<div class="a doc" style="left:256px;top:930px;"><span class="q">0.05</span></div></div>
<div class="a sunken" style="left:0;top:1155px;width:179px;height:18px"></div>
<div class="a sunken" style="left:183px;top:1155px;width:1069px;height:18px"></div>
<div class="a" style="left:1460px;top:1155px;width:139px;height:1px;background:#808080"></div>
<div class="a" style="left:1460px;top:1171px;width:140px;height:1px;background:#fff"></div>
<div class="a" style="left:1599px;top:1155px;width:1px;height:17px;background:#fff"></div>
<div class="a" style="left:0;top:1174px;width:1600px;height:1px;background:#fff"></div>
<div class="a" style="left:1253px;top:1152px;width:207px;height:23px;background:#D4D0C8"></div>
<div class="a sep" style="left:1253px;top:1153px;height:20px"></div>
<div class="a sep" style="left:1389px;top:1153px;height:20px"></div>
<div class="a sep" style="left:1416px;top:1153px;height:20px"></div>
<svg class="a" style="left:1259px;top:1154px" width="17" height="15" viewBox="0 0 17 15" shape-rendering="crispEdges"><path d="M4 0v2M6 1v2M8 0v2M10 1v2M12 0v2" stroke="#000"/><rect x="0.500" y="4.500" width="15" height="9" rx="2" fill="#fff" stroke="#000" shape-rendering="auto"/><path d="M3 7.500h11M3 9.500h11M4 11.500h9" stroke="#000" stroke-dasharray="1 1"/></svg>
<svg class="a" style="left:1280px;top:1152px" width="18" height="18" viewBox="0 0 18 18"><circle cx="7" cy="7.500" r="6" fill="#e00020"/><circle cx="5" cy="5" r="1.800" fill="#fff" opacity=".8"/><path d="M8 13l3 4 4-2 1-5" fill="#fff" stroke="#000"/><rect x="13" y="1" width="2" height="8" fill="#f80"/><rect x="15" y="1" width="1" height="8" fill="#000"/></svg>
<svg class="a" style="left:1347px;top:1153px" width="16" height="16" viewBox="0 0 16 16"><circle cx="11" cy="4.500" r="3.500" fill="#bcd" stroke="#357" /><path d="M2 2l4 6M5 1l2 7" stroke="#c00" stroke-width="1.500"/><path d="M1 9c0 4 3 6 7 6s6-2 6-5l-3 1c-2 1-6 1-10-2z" fill="#ec5" stroke="#640" stroke-width=".8"/></svg>
<svg class="a" style="left:1368px;top:1153px" width="18" height="16" viewBox="0 0 18 16"><path d="M1 8l10-5 6 2v6l-10 5-6-3z" fill="#c8a0c0" stroke="#604060" stroke-width=".8"/><path d="M1 8l6 2 10-5M7 10v6" fill="none" stroke="#604060" stroke-width=".8"/><path d="M5 4l6-3 4 2" fill="none" stroke="#333" stroke-width="1.200"/></svg>
<svg class="a" style="left:1397px;top:1153px" width="15" height="17" viewBox="0 0 15 17" shape-rendering="crispEdges"><rect x="0.500" y="0.500" width="13" height="13" fill="#ffc" stroke="#000"/><path d="M8 14v3l3-3" fill="#ffc" stroke="#000"/></svg>
<div class="a" style="left:1399px;top:1154px;width:11px;text-align:center;font:bold 12px/12px 'Liberation Sans',sans-serif;color:#00a">?</div>
<div class="a" style="left:1311px;top:1152px;font:16px/16px 'Liberation Sans',sans-serif;transform:scaleX(.85);transform-origin:0 0">A</div>
<div class="a ui" style="left:1324px;top:1152px;font-size:16px;line-height:16px;">般</div>
<div class="a" style="left:1421px;top:1152px;font:bold 7px/7px 'Liberation Mono',monospace;letter-spacing:.6px">CAPS</div>
<div class="a" style="left:1421px;top:1163px;font:bold 7px/7px 'Liberation Mono',monospace;letter-spacing:.6px">KANA</div>
<div class="a" style="left:1449px;top:1155px;width:5px;height:2px;background:#000"></div>
<svg class="a" style="left:1449px;top:1164px" width="5" height="3" shape-rendering="crispEdges"><path d="M0 0h5v1h-1v1h-1v1h-1v-1h-1v-1h-1z" fill="#000"/></svg>
<div class="a" style="left:1600px;top:0;width:4px;height:1176px;background:#D4D0C8"></div>
<div class="a" style="left:1600px;top:4px;width:4px;height:6px;background:#808080"></div>
<div class="a" style="left:1600px;top:10px;width:4px;height:10px;background:repeating-linear-gradient(180deg,#fff 0 2px,#a0a0a0 2px 3px,#fff 3px 4px)"></div>
<div class="a" style="left:1600px;top:20px;width:4px;height:1px;background:#000"></div>
<div class="a" style="left:1600px;top:47px;width:4px;height:11px;background:repeating-linear-gradient(180deg,#000 0 1px,#D4D0C8 1px 3px)"></div>
<div class="a" style="left:1600px;top:62px;width:4px;height:1px;background:#808080"></div>
<div class="a" style="left:1600px;top:63px;width:4px;height:1px;background:#fff"></div>
<div class="a" style="left:1600px;top:110px;width:4px;height:11px;background:#808080"></div>
<div class="a" style="left:1600px;top:131px;width:4px;height:10px;background:repeating-linear-gradient(180deg,#000 0 1px,#D4D0C8 1px 3px)"></div>
<div class="a" style="left:1600px;top:186px;width:4px;height:12px;background:#fff;border-left:1px solid #000;border-top:1px solid #000"></div>
<div class="a" style="left:1600px;top:205px;width:4px;height:881px;background:#808080"></div>
<div class="a" style="left:1600px;top:1099px;width:4px;height:1px;background:#808080"></div>
<div class="a" style="left:1600px;top:1100px;width:4px;height:1px;background:#fff"></div>
<div class="a" style="left:1600px;top:1157px;width:4px;height:1px;background:#808080"></div>
<div class="a" style="left:1600px;top:1159px;width:4px;height:1px;background:#fff"></div>
</body>
</html>
